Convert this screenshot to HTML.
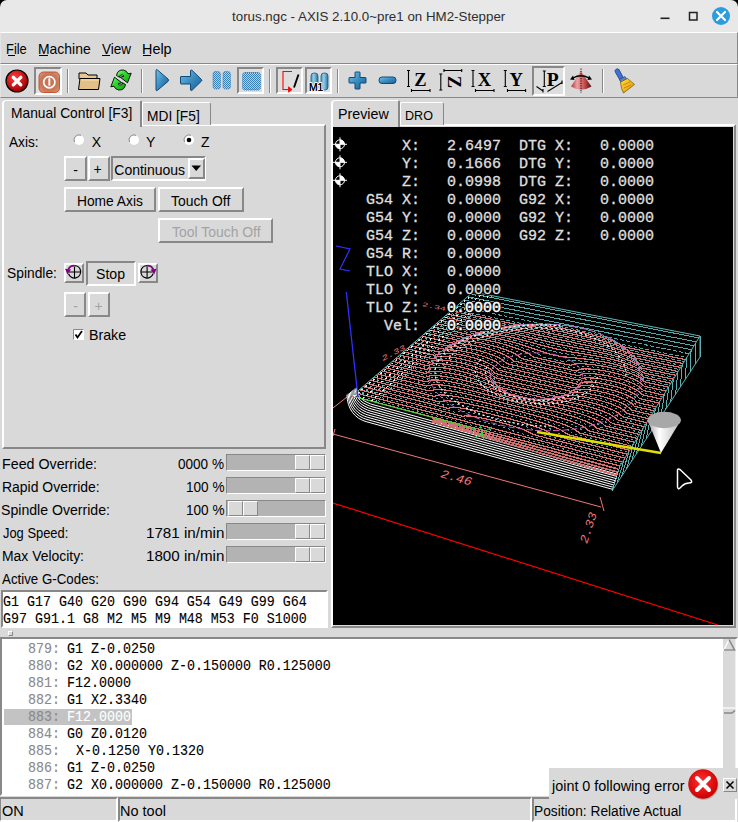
<!DOCTYPE html>
<html><head><meta charset="utf-8"><title>AXIS</title>
<style>html,body{margin:0;padding:0;}body{width:738px;height:822px;position:relative;overflow:hidden;background:#d9d9d9;font-family:'Liberation Sans', sans-serif;}</style>
</head><body>
<div style="position:absolute;left:0px;top:0px;width:738px;height:14px;background:#000"></div>
<div style="position:absolute;left:0px;top:0px;width:738px;height:32px;background:#e8e8e8;border-radius:7px 7px 0 0"></div>
<div style="position:absolute;left:232.20px;top:17.49px;font-family:'Liberation Sans', sans-serif;font-size:13.6px;font-weight:normal;line-height:0;white-space:pre;color:#2e2e2e;transform:scaleX(0.9814);transform-origin:0 0;">torus.ngc - AXIS 2.10.0~pre1 on HM2-Stepper</div>
<svg style="position:absolute;left:655px;top:6px;" width="80" height="22" viewBox="0 0 80 22"><rect x="5.5" y="11.5" width="9" height="1.6" fill="#222"/><rect x="34.5" y="6.5" width="7.5" height="7.5" fill="none" stroke="#222" stroke-width="1.5"/><circle cx="66" cy="10" r="9" fill="#2b9ce0"/><path d="M62 6 L70 14 M70 6 L62 14" stroke="#fff" stroke-width="2.2" stroke-linecap="round"/></svg>
<div style="position:absolute;left:0px;top:32px;width:738px;height:32px;background:#d9d9d9;box-sizing:border-box;border-top:1px solid #fff;border-bottom:1px solid #888888;border-right:1px solid #888888;border-left:1px solid #e4e4e4"></div>
<div style="position:absolute;left:6.37px;top:49.38px;font-family:'Liberation Sans', sans-serif;font-size:13.9px;font-weight:normal;line-height:0;white-space:pre;color:#000;transform:scaleX(0.9286);transform-origin:0 0;">File</div>
<div style="position:absolute;left:38.00px;top:49.38px;font-family:'Liberation Sans', sans-serif;font-size:13.9px;font-weight:normal;line-height:0;white-space:pre;color:#000;transform:scaleX(1.0039);transform-origin:0 0;">Machine</div>
<div style="position:absolute;left:102.00px;top:49.38px;font-family:'Liberation Sans', sans-serif;font-size:13.9px;font-weight:normal;line-height:0;white-space:pre;color:#000;transform:scaleX(0.9733);transform-origin:0 0;">View</div>
<div style="position:absolute;left:141.66px;top:49.38px;font-family:'Liberation Sans', sans-serif;font-size:13.9px;font-weight:normal;line-height:0;white-space:pre;color:#000;transform:scaleX(1.0370);transform-origin:0 0;">Help</div>
<div style="position:absolute;left:7.5px;top:55px;width:7px;height:1px;background:#000"></div>
<div style="position:absolute;left:39px;top:55px;width:9px;height:1px;background:#000"></div>
<div style="position:absolute;left:102px;top:55px;width:8px;height:1px;background:#000"></div>
<div style="position:absolute;left:143px;top:55px;width:8px;height:1px;background:#000"></div>
<div style="position:absolute;left:0px;top:64px;width:738px;height:34px;background:#d9d9d9;box-sizing:border-box;border-top:1px solid #fff;border-bottom:1px solid #888888;border-right:1px solid #888888;border-left:1px solid #e4e4e4"></div>
<svg style="position:absolute;left:5px;top:69px;" width="24" height="24" viewBox="0 0 24 24"><defs><radialGradient id="es" cx="40%" cy="35%" r="65%"><stop offset="0" stop-color="#ff4040"/><stop offset="1" stop-color="#a00000"/></radialGradient></defs><circle cx="12" cy="12" r="11" fill="url(#es)" stroke="#000" stroke-width="1.2"/><path d="M8.3 8.3 L15.8 15.8 M15.8 8.3 L8.3 15.8" stroke="#fff" stroke-width="3.3" stroke-linecap="round"/></svg>
<div style="position:absolute;left:34px;top:67px;width:24px;height:24px;background:#e2e2e2;border-style:solid;border-width:2px;border-color:#888888 #ffffff #ffffff #888888"></div>
<svg style="position:absolute;left:38px;top:71px;" width="22" height="22" viewBox="0 0 22 22"><defs><radialGradient id="pw" cx="50%" cy="50%" r="70%"><stop offset="0" stop-color="#c87050"/><stop offset="0.6" stop-color="#c87858"/><stop offset="1" stop-color="#e0a080"/></radialGradient></defs><rect x="1" y="1" width="20.5" height="20.5" rx="4.5" fill="url(#pw)" stroke="#c84828" stroke-width="0.9"/><circle cx="11.3" cy="11.2" r="5.6" fill="none" stroke="#fff" stroke-width="1.7"/><rect x="10.4" y="7.3" width="1.9" height="7.4" fill="#fff"/></svg>
<div style="position:absolute;left:67px;top:69px;width:1px;height:24px;background:#888888"></div>
<div style="position:absolute;left:68px;top:69px;width:1px;height:24px;background:#fff"></div>
<svg style="position:absolute;left:77px;top:70px;" width="25" height="22" viewBox="0 0 25 22"><path d="M2 3 L9 3 L11 5 L20 5 L20 9 L2 9 Z" fill="#e8c890" stroke="#000" stroke-width="1"/><path d="M1.5 19.5 L3 8.5 L23 8.5 L21.5 19.5 Z" fill="#e4c088" stroke="#000" stroke-width="1"/><path d="M3.5 10 L22 10" stroke="#f8e0b0" stroke-width="1"/></svg>
<svg style="position:absolute;left:0;top:62px" width="738" height="38" viewBox="0 62 738 38"><defs><linearGradient id="gr" x1="0" y1="0" x2="1" y2="1"><stop offset="0" stop-color="#a0f8a0"/><stop offset="0.35" stop-color="#30e030"/><stop offset="1" stop-color="#10a010"/></linearGradient></defs><path d="M116.5 75.5 Q117.5 69.5 123.5 70 Q127 70.8 128 73.8 L131.2 73.2 L127.5 82.8 L120.2 77.2 L124 76.2 Q122.8 74.2 120.3 75.2 Q119.2 75.8 119.6 77.3 Z" fill="url(#gr)" stroke="#000" stroke-width="0.9" stroke-linejoin="round"/><path d="M125.5 84.5 Q124.5 90.5 118.5 90 Q115 89.2 114 86.2 L110.8 86.8 L114.5 77.2 L121.8 82.8 L118 83.8 Q119.2 85.8 121.7 84.8 Q122.8 84.2 122.4 82.7 Z" fill="url(#gr)" stroke="#000" stroke-width="0.9" stroke-linejoin="round"/></svg>
<div style="position:absolute;left:141px;top:69px;width:1px;height:24px;background:#888888"></div>
<div style="position:absolute;left:142px;top:69px;width:1px;height:24px;background:#fff"></div>
<div style="position:absolute;left:237px;top:67px;width:23px;height:23px;background:#dedede;border-style:solid;border-width:2px;border-color:#888888 #ffffff #ffffff #888888"></div>
<svg style="position:absolute;left:0;top:62px" width="738" height="38" viewBox="0 62 738 38"><defs><linearGradient id="bl" x1="0" y1="0" x2="1" y2="1"><stop offset="0" stop-color="#78c0e8"/><stop offset="0.5" stop-color="#3a8cc0"/><stop offset="1" stop-color="#1a5a90"/></linearGradient><pattern id="dt" x="0" y="0" width="2" height="2" patternUnits="userSpaceOnUse"><rect width="2" height="2" fill="#b0d0e8"/><rect width="1" height="1" fill="#3a80b8"/><rect x="1" y="1" width="1" height="1" fill="#3a80b8"/></pattern></defs><path d="M156 70.5 Q156 69 157.5 70 L168 79 Q169.2 80.2 168 81.4 L157.5 90.3 Q156 91.3 156 89.8 Z" fill="url(#bl)" stroke="#0e4a78" stroke-width="1"/><path d="M181 76.5 L190.5 76.5 L190.5 70.5 Q191 69.5 192 70.3 L201.5 79.5 Q202.3 80.3 201.5 81.1 L192 90.3 Q191 91 190.5 90 L190.5 84 L181 84 Q180.5 84 180.5 83.5 L180.5 77 Q180.5 76.5 181 76.5 Z" fill="url(#bl)" stroke="#0e4a78" stroke-width="1"/><rect x="213" y="71.5" width="7.5" height="17.5" rx="2.5" fill="url(#dt)" stroke="#3a80b8" stroke-width="1" stroke-dasharray="1 1"/><rect x="223" y="71.5" width="7.5" height="17.5" rx="2.5" fill="url(#dt)" stroke="#3a80b8" stroke-width="1" stroke-dasharray="1 1"/><rect x="242.5" y="72.5" width="18" height="17.5" rx="2.5" fill="url(#dt)" stroke="#3a80b8" stroke-width="1" stroke-dasharray="1 1"/></svg>
<div style="position:absolute;left:269px;top:69px;width:1px;height:24px;background:#888888"></div>
<div style="position:absolute;left:270px;top:69px;width:1px;height:24px;background:#fff"></div>
<div style="position:absolute;left:276px;top:67px;width:23px;height:23px;background:#dedede;border-style:solid;border-width:2px;border-color:#888888 #ffffff #ffffff #888888"></div>
<div style="position:absolute;left:305px;top:67px;width:23px;height:23px;background:#dedede;border-style:solid;border-width:2px;border-color:#888888 #ffffff #ffffff #888888"></div>
<svg style="position:absolute;left:0;top:62px" width="738" height="38" viewBox="0 62 738 38"><defs><linearGradient id="bl2" x1="0" y1="0" x2="1" y2="0"><stop offset="0" stop-color="#4a98c8"/><stop offset="0.4" stop-color="#90d0e8"/><stop offset="1" stop-color="#2a70a0"/></linearGradient></defs><path d="M292 71.5 L283 71.5 L283 89.5 L290.5 89.5" fill="none" stroke="#ff0000" stroke-width="1.1"/><path d="M288.5 86.8 L292 89.5 L288.5 92.2 Z" fill="#ff0000" stroke="#ff0000" stroke-width="0.8"/><path d="M294 87.5 L298.5 74.5" stroke="#000" stroke-width="1.9"/><rect x="311" y="73" width="7" height="17" rx="3" fill="url(#bl2)" stroke="#1a5a88" stroke-width="0.8"/><rect x="321" y="73" width="7" height="17" rx="3" fill="url(#bl2)" stroke="#1a5a88" stroke-width="0.8"/><text x="309" y="90.5" font-family="Liberation Sans, sans-serif" font-size="10.3" fill="#000" stroke="#fff" stroke-width="2" paint-order="stroke" stroke-linejoin="round">M1</text><text x="309" y="90.5" font-family="Liberation Sans, sans-serif" font-size="10.3" fill="#000">M1</text><path d="M355 72.5 Q355 72 355.5 72 L359.5 72 Q360 72 360 72.5 L360 77.5 L365.5 77.5 Q366 77.5 366 78 L366 82.5 Q366 83 365.5 83 L360 83 L360 88.5 Q360 89 359.5 89 L355.5 89 Q355 89 355 88.5 L355 83 L349.5 83 Q349 83 349 82.5 L349 78 Q349 77.5 349.5 77.5 L355 77.5 Z" fill="url(#bl)" stroke="#0e4a78" stroke-width="1"/><rect x="379" y="77" width="17" height="6.5" rx="3" fill="url(#bl)" stroke="#0e4a78" stroke-width="1"/></svg>
<div style="position:absolute;left:337px;top:69px;width:1px;height:24px;background:#888888"></div>
<div style="position:absolute;left:338px;top:69px;width:1px;height:24px;background:#fff"></div>
<svg style="position:absolute;left:0;top:62px" width="738" height="38" viewBox="0 62 738 38"><path d="M408.5 70.5 L408.5 86.5 M407.0 70.5 L410.0 70.5 M407.0 86.5 L410.0 86.5" stroke="#000" stroke-width="1.1" fill="none"/><path d="M411.5 90.5 L430 90.5 M411.5 89.0 L411.5 92.0 M430 89.0 L430 92.0" stroke="#000" stroke-width="1.1" fill="none"/><text x="420.4" y="85.8" font-family="Liberation Serif, serif" font-weight="bold" font-size="18.5" text-anchor="middle" fill="#000">Z</text><path d="M440.8 74 L440.8 90 M439.3 74 L442.3 74 M439.3 90 L442.3 90" stroke="#000" stroke-width="1.1" fill="none"/><path d="M444 70.5 L461.7 70.5 M444 69.0 L444 72.0 M461.7 69.0 L461.7 72.0" stroke="#000" stroke-width="1.1" fill="none"/><text x="452.6" y="86.5" font-family="Liberation Serif, serif" font-weight="bold" font-size="18.5" text-anchor="middle" fill="#000" transform="rotate(90 452.6 81.9)">Z</text><path d="M473 70.5 L473 86.5 M471.5 70.5 L474.5 70.5 M471.5 86.5 L474.5 86.5" stroke="#000" stroke-width="1.1" fill="none"/><path d="M475.5 90.5 L494 90.5 M475.5 89.0 L475.5 92.0 M494 89.0 L494 92.0" stroke="#000" stroke-width="1.1" fill="none"/><text x="484.4" y="85.8" font-family="Liberation Serif, serif" font-weight="bold" font-size="18.5" text-anchor="middle" fill="#000">X</text><path d="M505.3 70.5 L505.3 86.5 M503.8 70.5 L506.8 70.5 M503.8 86.5 L506.8 86.5" stroke="#000" stroke-width="1.1" fill="none"/><path d="M507.5 90.5 L525.6 90.5 M507.5 89.0 L507.5 92.0 M525.6 89.0 L525.6 92.0" stroke="#000" stroke-width="1.1" fill="none"/><text x="516.1" y="85.8" font-family="Liberation Serif, serif" font-weight="bold" font-size="18.5" text-anchor="middle" fill="#000">Y</text></svg>
<div style="position:absolute;left:532px;top:66px;width:29px;height:26px;background:#dedede;border-style:solid;border-width:2px;border-color:#888888 #ffffff #ffffff #888888"></div>
<svg style="position:absolute;left:0;top:62px" width="738" height="38" viewBox="0 62 738 38"><path d="M544.3 71 L544.3 86.5 M542.8 71 L545.8 71 M542.8 86.5 L545.8 86.5" stroke="#000" stroke-width="1.1" fill="none"/><text x="552.8" y="86.4" font-family="Liberation Serif, serif" font-weight="bold" font-size="19.5" text-anchor="middle" fill="#000">P</text><path d="M536.5 86.5 L543 91 M543 89 L543 92.5" stroke="#000" stroke-width="1.1" fill="none"/><path d="M547.5 91.5 L562 82.5 M562 80.5 L562 84" stroke="#000" stroke-width="1.1" fill="none"/><defs><linearGradient id="cn" x1="0" y1="0" x2="1" y2="0"><stop offset="0" stop-color="#b03838"/><stop offset="0.3" stop-color="#f0a0a0"/><stop offset="0.65" stop-color="#c85050"/><stop offset="1" stop-color="#501010"/></linearGradient></defs><path d="M580.8 71 L571 86.5 Q581 93 591.5 86.5 Z" fill="url(#cn)"/><path d="M581 68.5 L581 93" stroke="#000" stroke-width="1" stroke-dasharray="1.2 1.2"/><path d="M573 78 Q581 73.5 589 78" fill="none" stroke="#000" stroke-width="1.4"/><path d="M570 79.5 L574.5 80 L573 75.5 Z M592 79.5 L587.5 80 L589 75.5 Z" fill="#000"/><defs><linearGradient id="br" x1="0" y1="0" x2="1" y2="1"><stop offset="0" stop-color="#ffe040"/><stop offset="1" stop-color="#e09000"/></linearGradient></defs><path d="M615 70.5 Q616.5 67.5 619 69.5 L624 79 L620.5 81 L615.5 72.5 Z" fill="#4070d0" stroke="#203880" stroke-width="0.8"/><path d="M619.5 79.5 L625 76.5 L627 79.5 L621 82.5 Z" fill="#6080c0" stroke="#203880" stroke-width="0.6"/><path d="M620.5 82 L627.5 78.5 L634.5 84.5 L623.5 93 Q621 89 620.5 82 Z" fill="url(#br)" stroke="#705000" stroke-width="0.7"/><path d="M623 85 L630 82 M624 88 L631 85" stroke="#c07000" stroke-width="0.7"/></svg>
<div style="position:absolute;left:602px;top:69px;width:1px;height:24px;background:#888888"></div>
<div style="position:absolute;left:603px;top:69px;width:1px;height:24px;background:#fff"></div>
<div style="position:absolute;left:2px;top:124px;width:320px;height:321px;background:#d9d9d9;border-style:solid;border-width:2px 2px 2px 2px;border-color:#fff #888888 #888888 #fff"></div>
<div style="position:absolute;left:142px;top:102px;width:67px;height:22px;background:#d9d9d9;border-style:solid;border-width:1px 1px 0 1px;border-color:#fff #888888 #888888 #fff;border-radius:2px 3px 0 0"></div>
<div style="position:absolute;left:146.81px;top:115.98px;font-family:'Liberation Sans', sans-serif;font-size:13.9px;font-weight:normal;line-height:0;white-space:pre;color:#000;transform:scaleX(0.9904);transform-origin:0 0;">MDI [F5]</div>
<div style="position:absolute;left:2px;top:100px;width:136px;height:26px;background:#d9d9d9;border-style:solid;border-width:1px 2px 0 2px;border-color:#fff #888888 #888888 #fff;border-radius:4px 2px 0 0"></div>
<div style="position:absolute;left:10.51px;top:113.38px;font-family:'Liberation Sans', sans-serif;font-size:13.9px;font-weight:normal;line-height:0;white-space:pre;color:#000;transform:scaleX(0.9942);transform-origin:0 0;">Manual Control [F3]</div>
<div style="position:absolute;left:8.90px;top:141.95px;font-family:'Liberation Sans', sans-serif;font-size:14.0px;font-weight:normal;line-height:0;white-space:pre;color:#000;transform:scaleX(0.9759);transform-origin:0 0;">Axis:</div>
<svg style="position:absolute;left:73px;top:134px;" width="12" height="12" viewBox="0 0 12 12"><circle cx="6" cy="6" r="5" fill="#fff" stroke="none"/><path d="M1.5 8 A5 5 0 0 1 8 1.3" fill="none" stroke="#888888" stroke-width="1"/></svg>
<div style="position:absolute;left:91.80px;top:141.95px;font-family:'Liberation Sans', sans-serif;font-size:14px;font-weight:normal;line-height:0;white-space:pre;color:#000;">X</div>
<svg style="position:absolute;left:127.5px;top:134px;" width="12" height="12" viewBox="0 0 12 12"><circle cx="6" cy="6" r="5" fill="#fff" stroke="none"/><path d="M1.5 8 A5 5 0 0 1 8 1.3" fill="none" stroke="#888888" stroke-width="1"/></svg>
<div style="position:absolute;left:146.00px;top:141.95px;font-family:'Liberation Sans', sans-serif;font-size:14px;font-weight:normal;line-height:0;white-space:pre;color:#000;">Y</div>
<svg style="position:absolute;left:182.5px;top:134px;" width="12" height="12" viewBox="0 0 12 12"><circle cx="6" cy="6" r="5" fill="#fff" stroke="none"/><path d="M1.5 8 A5 5 0 0 1 8 1.3" fill="none" stroke="#888888" stroke-width="1"/><circle cx="6" cy="6" r="2.3" fill="#000"/></svg>
<div style="position:absolute;left:201.00px;top:141.95px;font-family:'Liberation Sans', sans-serif;font-size:14px;font-weight:normal;line-height:0;white-space:pre;color:#000;">Z</div>
<div style="position:absolute;left:64px;top:156px;width:19px;height:21px;background:#d9d9d9;border-style:solid;border-width:2px;border-color:#ffffff #888888 #888888 #ffffff"></div>
<div style="position:absolute;left:73.20px;top:169.85px;font-family:'Liberation Sans', sans-serif;font-size:14.0px;font-weight:normal;line-height:0;white-space:pre;color:#000;">-</div>
<div style="position:absolute;left:88px;top:156px;width:18px;height:21px;background:#d9d9d9;border-style:solid;border-width:2px;border-color:#ffffff #888888 #888888 #ffffff"></div>
<div style="position:absolute;left:93.60px;top:169.35px;font-family:'Liberation Sans', sans-serif;font-size:14.0px;font-weight:normal;line-height:0;white-space:pre;color:#000;">+</div>
<div style="position:absolute;left:111px;top:156px;width:91px;height:21px;background:#d9d9d9;border-style:solid;border-width:2px;border-color:#888888 #ffffff #ffffff #888888"></div>
<div style="position:absolute;left:114.30px;top:169.95px;font-family:'Liberation Sans', sans-serif;font-size:14.0px;font-weight:normal;line-height:0;white-space:pre;color:#000;">Continuous</div>
<div style="position:absolute;left:188px;top:158px;width:13px;height:17px;background:#d9d9d9;border-style:solid;border-width:2px;border-color:#ffffff #888888 #888888 #ffffff"></div>
<svg style="position:absolute;left:191px;top:165px;" width="11" height="7" viewBox="0 0 11 7"><path d="M0.5 0.5 L10 0.5 L5.2 6 Z" fill="#000"/></svg>
<div style="position:absolute;left:64px;top:187px;width:88px;height:21px;background:#d9d9d9;border-style:solid;border-width:2px;border-color:#ffffff #888888 #888888 #ffffff"></div>
<div style="position:absolute;left:76.92px;top:200.85px;font-family:'Liberation Sans', sans-serif;font-size:14.0px;font-weight:normal;line-height:0;white-space:pre;color:#000;transform:scaleX(0.9848);transform-origin:0 0;">Home Axis</div>
<div style="position:absolute;left:158px;top:187px;width:82px;height:21px;background:#d9d9d9;border-style:solid;border-width:2px;border-color:#ffffff #888888 #888888 #ffffff"></div>
<div style="position:absolute;left:171.10px;top:200.75px;font-family:'Liberation Sans', sans-serif;font-size:14px;font-weight:normal;line-height:0;white-space:pre;color:#000;transform:scaleX(0.9933);transform-origin:0 0;">Touch Off</div>
<div style="position:absolute;left:158px;top:218px;width:111px;height:21px;background:#d9d9d9;border-style:solid;border-width:2px;border-color:#ffffff #888888 #888888 #ffffff"></div>
<div style="position:absolute;left:171.50px;top:231.95px;font-family:'Liberation Sans', sans-serif;font-size:14px;font-weight:normal;line-height:0;white-space:pre;color:#a3a3a3;transform:scaleX(0.9955);transform-origin:0 0;">Tool Touch Off</div>
<div style="position:absolute;left:7.42px;top:273.11px;font-family:'Liberation Sans', sans-serif;font-size:14.1px;font-weight:normal;line-height:0;white-space:pre;color:#000;transform:scaleX(0.9796);transform-origin:0 0;">Spindle:</div>
<div style="position:absolute;left:64px;top:263px;width:16px;height:16px;background:#d9d9d9;border-style:solid;border-width:2px;border-color:#ffffff #888888 #888888 #ffffff"></div>
<div style="position:absolute;left:86px;top:261px;width:46px;height:21px;background:#d9d9d9;border-style:solid;border-width:2px;border-color:#888888 #ffffff #ffffff #888888"></div>
<div style="position:absolute;left:96.19px;top:274.35px;font-family:'Liberation Sans', sans-serif;font-size:14.0px;font-weight:normal;line-height:0;white-space:pre;color:#000;transform:scaleX(1.0074);transform-origin:0 0;">Stop</div>
<div style="position:absolute;left:138px;top:263px;width:16px;height:16px;background:#d9d9d9;border-style:solid;border-width:2px;border-color:#ffffff #888888 #888888 #ffffff"></div>
<svg style="position:absolute;left:0;top:250px" width="200" height="40" viewBox="0 250 200 40"><path d="M74.5 265.6 A6.2 6.2 0 1 1 68.6 273.8" fill="none" stroke="#000" stroke-width="1.3"/><path d="M74.5 266.5 L74.5 278 M69 272 L80 272" stroke="#000" stroke-width="1.1"/><path d="M74.5 265.6 Q70 265.5 68.2 269.5" fill="none" stroke="#800080" stroke-width="1.8"/><path d="M65 268.8 L71 269.5 L67.5 274.5 Z" fill="#800080"/><path d="M147.1 265.6 A6.2 6.2 0 1 0 153 273.8" fill="none" stroke="#000" stroke-width="1.3"/><path d="M147.1 266.5 L147.1 278 M141.6 272 L152.6 272" stroke="#000" stroke-width="1.1"/><path d="M147.1 265.6 Q151.6 265.5 153.4 269.5" fill="none" stroke="#800080" stroke-width="1.8"/><path d="M156.6 268.8 L150.6 269.5 L154.1 274.5 Z" fill="#800080"/></svg>
<div style="position:absolute;left:64px;top:292px;width:18px;height:21px;background:#d9d9d9;border-style:solid;border-width:2px;border-color:#ffffff #888888 #888888 #ffffff"></div>
<div style="position:absolute;left:73.30px;top:306.35px;font-family:'Liberation Sans', sans-serif;font-size:14.0px;font-weight:normal;line-height:0;white-space:pre;color:#a3a3a3;">-</div>
<div style="position:absolute;left:88px;top:292px;width:18px;height:21px;background:#d9d9d9;border-style:solid;border-width:2px;border-color:#ffffff #888888 #888888 #ffffff"></div>
<div style="position:absolute;left:94.60px;top:306.35px;font-family:'Liberation Sans', sans-serif;font-size:14.0px;font-weight:normal;line-height:0;white-space:pre;color:#a3a3a3;">+</div>
<svg style="position:absolute;left:73px;top:329px;" width="11" height="11" viewBox="0 0 11 11"><rect x="0" y="0" width="11" height="11" fill="#fff"/><path d="M0.5 10.5 L0.5 0.5 L10.5 0.5" fill="none" stroke="#888888" stroke-width="1"/><path d="M2.5 5.5 L4.5 8.5 L9 2" fill="none" stroke="#000" stroke-width="1.8"/></svg>
<div style="position:absolute;left:88.79px;top:335.31px;font-family:'Liberation Sans', sans-serif;font-size:14.1px;font-weight:normal;line-height:0;white-space:pre;color:#000;transform:scaleX(1.0086);transform-origin:0 0;">Brake</div>
<div style="position:absolute;left:1.78px;top:464.25px;font-family:'Liberation Sans', sans-serif;font-size:14px;font-weight:normal;line-height:0;white-space:pre;color:#000;transform:scaleX(1.0176);transform-origin:0 0;">Feed Override:</div>
<div style="position:absolute;left:178.40px;top:464.25px;font-family:'Liberation Sans', sans-serif;font-size:14px;font-weight:normal;line-height:0;white-space:pre;color:#000;transform:scaleX(0.9681);transform-origin:0 0;">0000 %</div>
<div style="position:absolute;left:226px;top:454px;width:98px;height:15px;background:#b3b3b3;border-style:solid;border-width:1px;border-color:#888888 #ffffff #ffffff #888888"></div>
<div style="position:absolute;left:295px;top:455px;width:13px;height:13px;background:#d9d9d9;border-style:solid;border-width:1px;border-color:#ffffff #888888 #888888 #ffffff"></div>
<div style="position:absolute;left:310px;top:455px;width:13px;height:13px;background:#d9d9d9;border-style:solid;border-width:1px;border-color:#ffffff #888888 #888888 #ffffff"></div>
<div style="position:absolute;left:1.80px;top:487.15px;font-family:'Liberation Sans', sans-serif;font-size:14px;font-weight:normal;line-height:0;white-space:pre;color:#000;transform:scaleX(0.9969);transform-origin:0 0;">Rapid Override:</div>
<div style="position:absolute;left:186.03px;top:487.15px;font-family:'Liberation Sans', sans-serif;font-size:14px;font-weight:normal;line-height:0;white-space:pre;color:#000;transform:scaleX(0.9711);transform-origin:0 0;">100 %</div>
<div style="position:absolute;left:226px;top:477px;width:98px;height:15px;background:#b3b3b3;border-style:solid;border-width:1px;border-color:#888888 #ffffff #ffffff #888888"></div>
<div style="position:absolute;left:295px;top:478px;width:13px;height:13px;background:#d9d9d9;border-style:solid;border-width:1px;border-color:#ffffff #888888 #888888 #ffffff"></div>
<div style="position:absolute;left:310px;top:478px;width:13px;height:13px;background:#d9d9d9;border-style:solid;border-width:1px;border-color:#ffffff #888888 #888888 #ffffff"></div>
<div style="position:absolute;left:1.29px;top:509.95px;font-family:'Liberation Sans', sans-serif;font-size:14px;font-weight:normal;line-height:0;white-space:pre;color:#000;transform:scaleX(1.0075);transform-origin:0 0;">Spindle Override:</div>
<div style="position:absolute;left:186.03px;top:509.95px;font-family:'Liberation Sans', sans-serif;font-size:14px;font-weight:normal;line-height:0;white-space:pre;color:#000;transform:scaleX(0.9711);transform-origin:0 0;">100 %</div>
<div style="position:absolute;left:226px;top:500px;width:98px;height:15px;background:#b3b3b3;border-style:solid;border-width:1px;border-color:#888888 #ffffff #ffffff #888888"></div>
<div style="position:absolute;left:228px;top:501px;width:13px;height:13px;background:#d9d9d9;border-style:solid;border-width:1px;border-color:#ffffff #888888 #888888 #ffffff"></div>
<div style="position:absolute;left:243px;top:501px;width:13px;height:13px;background:#d9d9d9;border-style:solid;border-width:1px;border-color:#ffffff #888888 #888888 #ffffff"></div>
<div style="position:absolute;left:2.50px;top:533.15px;font-family:'Liberation Sans', sans-serif;font-size:14px;font-weight:normal;line-height:0;white-space:pre;color:#000;transform:scaleX(0.9214);transform-origin:0 0;">Jog Speed:</div>
<div style="position:absolute;left:145.92px;top:533.15px;font-family:'Liberation Sans', sans-serif;font-size:14px;font-weight:normal;line-height:0;white-space:pre;color:#000;transform:scaleX(1.0831);transform-origin:0 0;">1781 in/min</div>
<div style="position:absolute;left:226px;top:523px;width:98px;height:15px;background:#b3b3b3;border-style:solid;border-width:1px;border-color:#888888 #ffffff #ffffff #888888"></div>
<div style="position:absolute;left:295px;top:524px;width:13px;height:13px;background:#d9d9d9;border-style:solid;border-width:1px;border-color:#ffffff #888888 #888888 #ffffff"></div>
<div style="position:absolute;left:310px;top:524px;width:13px;height:13px;background:#d9d9d9;border-style:solid;border-width:1px;border-color:#ffffff #888888 #888888 #ffffff"></div>
<div style="position:absolute;left:2.11px;top:556.15px;font-family:'Liberation Sans', sans-serif;font-size:14px;font-weight:normal;line-height:0;white-space:pre;color:#000;transform:scaleX(0.9938);transform-origin:0 0;">Max Velocity:</div>
<div style="position:absolute;left:145.92px;top:556.15px;font-family:'Liberation Sans', sans-serif;font-size:14px;font-weight:normal;line-height:0;white-space:pre;color:#000;transform:scaleX(1.0831);transform-origin:0 0;">1800 in/min</div>
<div style="position:absolute;left:226px;top:546px;width:98px;height:15px;background:#b3b3b3;border-style:solid;border-width:1px;border-color:#888888 #ffffff #ffffff #888888"></div>
<div style="position:absolute;left:295px;top:547px;width:13px;height:13px;background:#d9d9d9;border-style:solid;border-width:1px;border-color:#ffffff #888888 #888888 #ffffff"></div>
<div style="position:absolute;left:310px;top:547px;width:13px;height:13px;background:#d9d9d9;border-style:solid;border-width:1px;border-color:#ffffff #888888 #888888 #ffffff"></div>
<div style="position:absolute;left:2.40px;top:579.25px;font-family:'Liberation Sans', sans-serif;font-size:14px;font-weight:normal;line-height:0;white-space:pre;color:#000;transform:scaleX(0.9505);transform-origin:0 0;">Active G-Codes:</div>
<div style="position:absolute;left:1px;top:590px;width:323px;height:34px;background:#fff;border-style:solid;border-width:2px;border-color:#888888 #ffffff #ffffff #888888"></div>
<div style="position:absolute;left:3.36px;top:602.02px;font-family:'Liberation Mono', monospace;font-size:14.2px;font-weight:normal;line-height:0;white-space:pre;color:#000;transform:scaleX(0.9390);transform-origin:0 0;-webkit-text-stroke:0.12px #000;">G1 G17 G40 G20 G90 G94 G54 G49 G99 G64</div>
<div style="position:absolute;left:3.36px;top:618.62px;font-family:'Liberation Mono', monospace;font-size:14.2px;font-weight:normal;line-height:0;white-space:pre;color:#000;transform:scaleX(0.9390);transform-origin:0 0;-webkit-text-stroke:0.12px #000;">G97 G91.1 G8 M2 M5 M9 M48 M53 F0 S1000</div>
<div style="position:absolute;left:8px;top:631px;width:5px;height:5px;border:1px solid #888888;border-top-color:#fff;border-left-color:#fff;box-sizing:border-box"></div>
<div style="position:absolute;left:0px;top:637px;width:734px;height:155px;background:#fff;border-style:solid;border-width:2px;border-color:#888888 #ffffff #ffffff #888888"></div>
<div style="position:absolute;left:27.56px;top:649.02px;font-family:'Liberation Mono', monospace;font-size:14.2px;font-weight:normal;line-height:0;white-space:pre;color:#8a8a8a;transform:scaleX(0.9390);transform-origin:0 0;-webkit-text-stroke:0.12px #8a8a8a;">879:</div>
<div style="position:absolute;left:67.36px;top:649.02px;font-family:'Liberation Mono', monospace;font-size:14.2px;font-weight:normal;line-height:0;white-space:pre;color:#000;transform:scaleX(0.9390);transform-origin:0 0;-webkit-text-stroke:0.12px #000;">G1 Z-0.0250</div>
<div style="position:absolute;left:27.56px;top:666.07px;font-family:'Liberation Mono', monospace;font-size:14.2px;font-weight:normal;line-height:0;white-space:pre;color:#8a8a8a;transform:scaleX(0.9390);transform-origin:0 0;-webkit-text-stroke:0.12px #8a8a8a;">880:</div>
<div style="position:absolute;left:67.36px;top:666.07px;font-family:'Liberation Mono', monospace;font-size:14.2px;font-weight:normal;line-height:0;white-space:pre;color:#000;transform:scaleX(0.9390);transform-origin:0 0;-webkit-text-stroke:0.12px #000;">G2 X0.000000 Z-0.150000 R0.125000</div>
<div style="position:absolute;left:27.56px;top:683.12px;font-family:'Liberation Mono', monospace;font-size:14.2px;font-weight:normal;line-height:0;white-space:pre;color:#8a8a8a;transform:scaleX(0.9390);transform-origin:0 0;-webkit-text-stroke:0.12px #8a8a8a;">881:</div>
<div style="position:absolute;left:67.36px;top:683.12px;font-family:'Liberation Mono', monospace;font-size:14.2px;font-weight:normal;line-height:0;white-space:pre;color:#000;transform:scaleX(0.9390);transform-origin:0 0;-webkit-text-stroke:0.12px #000;">F12.0000</div>
<div style="position:absolute;left:27.56px;top:700.17px;font-family:'Liberation Mono', monospace;font-size:14.2px;font-weight:normal;line-height:0;white-space:pre;color:#8a8a8a;transform:scaleX(0.9390);transform-origin:0 0;-webkit-text-stroke:0.12px #8a8a8a;">882:</div>
<div style="position:absolute;left:67.36px;top:700.17px;font-family:'Liberation Mono', monospace;font-size:14.2px;font-weight:normal;line-height:0;white-space:pre;color:#000;transform:scaleX(0.9390);transform-origin:0 0;-webkit-text-stroke:0.12px #000;">G1 X2.3340</div>
<div style="position:absolute;left:4px;top:708.5px;width:128px;height:16px;background:#c3c3c3"></div>
<div style="position:absolute;left:27.56px;top:717.22px;font-family:'Liberation Mono', monospace;font-size:14.2px;font-weight:normal;line-height:0;white-space:pre;color:#8a8a8a;transform:scaleX(0.9390);transform-origin:0 0;-webkit-text-stroke:0.12px #8a8a8a;">883:</div>
<div style="position:absolute;left:67.36px;top:717.22px;font-family:'Liberation Mono', monospace;font-size:14.2px;font-weight:normal;line-height:0;white-space:pre;color:#ffffff;transform:scaleX(0.9390);transform-origin:0 0;-webkit-text-stroke:0.12px #ffffff;">F12.0000</div>
<div style="position:absolute;left:27.56px;top:734.27px;font-family:'Liberation Mono', monospace;font-size:14.2px;font-weight:normal;line-height:0;white-space:pre;color:#8a8a8a;transform:scaleX(0.9390);transform-origin:0 0;-webkit-text-stroke:0.12px #8a8a8a;">884:</div>
<div style="position:absolute;left:67.36px;top:734.27px;font-family:'Liberation Mono', monospace;font-size:14.2px;font-weight:normal;line-height:0;white-space:pre;color:#000;transform:scaleX(0.9390);transform-origin:0 0;-webkit-text-stroke:0.12px #000;">G0 Z0.0120</div>
<div style="position:absolute;left:27.56px;top:751.32px;font-family:'Liberation Mono', monospace;font-size:14.2px;font-weight:normal;line-height:0;white-space:pre;color:#8a8a8a;transform:scaleX(0.9390);transform-origin:0 0;-webkit-text-stroke:0.12px #8a8a8a;">885:</div>
<div style="position:absolute;left:76.30px;top:751.32px;font-family:'Liberation Mono', monospace;font-size:14.2px;font-weight:normal;line-height:0;white-space:pre;color:#000;transform:scaleX(0.9390);transform-origin:0 0;-webkit-text-stroke:0.12px #000;">X-0.1250 Y0.1320</div>
<div style="position:absolute;left:27.56px;top:768.37px;font-family:'Liberation Mono', monospace;font-size:14.2px;font-weight:normal;line-height:0;white-space:pre;color:#8a8a8a;transform:scaleX(0.9390);transform-origin:0 0;-webkit-text-stroke:0.12px #8a8a8a;">886:</div>
<div style="position:absolute;left:67.36px;top:768.37px;font-family:'Liberation Mono', monospace;font-size:14.2px;font-weight:normal;line-height:0;white-space:pre;color:#000;transform:scaleX(0.9390);transform-origin:0 0;-webkit-text-stroke:0.12px #000;">G1 Z-0.0250</div>
<div style="position:absolute;left:27.56px;top:785.42px;font-family:'Liberation Mono', monospace;font-size:14.2px;font-weight:normal;line-height:0;white-space:pre;color:#8a8a8a;transform:scaleX(0.9390);transform-origin:0 0;-webkit-text-stroke:0.12px #8a8a8a;">887:</div>
<div style="position:absolute;left:67.36px;top:785.42px;font-family:'Liberation Mono', monospace;font-size:14.2px;font-weight:normal;line-height:0;white-space:pre;color:#000;transform:scaleX(0.9390);transform-origin:0 0;-webkit-text-stroke:0.12px #000;">G2 X0.000000 Z-0.150000 R0.125000</div>
<div style="position:absolute;left:723px;top:639px;width:12px;height:156px;background:#d9d9d9"></div>
<div style="position:absolute;left:735px;top:639px;width:1px;height:156px;background:#f0f0f0"></div>
<svg style="position:absolute;left:720px;top:636px" width="18" height="90" viewBox="720 636 18 90"><path d="M729 639.5 L723.8 650 L734.5 650" fill="none" stroke="#fff" stroke-width="1.3"/><path d="M729 639.5 L734.5 650 L724 650" fill="none" stroke="#888888" stroke-width="1.6"/><path d="M723 708 L735 708" stroke="#fff" stroke-width="1.2"/><path d="M724 713 L732 713 L735 710.5" fill="none" stroke="#888888" stroke-width="1.6"/></svg>
<div style="position:absolute;left:0px;top:796px;width:738px;height:26px;background:#d9d9d9"></div>
<div style="position:absolute;left:-1px;top:797px;width:115px;height:21px;background:#d9d9d9;border-style:solid;border-width:2px;border-color:#888888 #ffffff #ffffff #888888"></div>
<div style="position:absolute;left:2.26px;top:811.15px;font-family:'Liberation Sans', sans-serif;font-size:14px;font-weight:normal;line-height:0;white-space:pre;color:#000;transform:scaleX(1.0368);transform-origin:0 0;">ON</div>
<div style="position:absolute;left:118px;top:797px;width:410px;height:21px;background:#d9d9d9;border-style:solid;border-width:2px;border-color:#888888 #ffffff #ffffff #888888"></div>
<div style="position:absolute;left:120.37px;top:811.15px;font-family:'Liberation Sans', sans-serif;font-size:14px;font-weight:normal;line-height:0;white-space:pre;color:#000;transform:scaleX(1.0349);transform-origin:0 0;">No tool</div>
<div style="position:absolute;left:532px;top:797px;width:201px;height:21px;background:#d9d9d9;border-style:solid;border-width:2px;border-color:#888888 #ffffff #ffffff #888888"></div>
<div style="position:absolute;left:534.42px;top:810.85px;font-family:'Liberation Sans', sans-serif;font-size:14px;font-weight:normal;line-height:0;white-space:pre;color:#000;transform:scaleX(0.9811);transform-origin:0 0;">Position: Relative Actual</div>
<div style="position:absolute;left:549px;top:768px;width:189px;height:31px;background:#d9d9d9"></div>
<div style="position:absolute;left:551.73px;top:786.05px;font-family:'Liberation Sans', sans-serif;font-size:14px;font-weight:normal;line-height:0;white-space:pre;color:#000;transform:scaleX(1.0269);transform-origin:0 0;">joint 0 following error</div>
<svg style="position:absolute;left:686px;top:767px;" width="35" height="35" viewBox="0 0 35 35"><defs><radialGradient id="er" cx="45%" cy="40%" r="60%"><stop offset="0" stop-color="#ff3030"/><stop offset="1" stop-color="#d00000"/></radialGradient></defs><circle cx="17.5" cy="18" r="15" fill="#888" opacity="0.5"/><circle cx="17" cy="17" r="14.5" fill="url(#er)" stroke="#c00" stroke-width="0.5"/><path d="M11 11 L23 23 M23 11 L11 23" stroke="#fff" stroke-width="4" stroke-linecap="round"/></svg>
<div style="position:absolute;left:723px;top:778px;width:12px;height:12px;background:#d9d9d9;border-style:solid;border-width:1px;border-color:#ffffff #888888 #888888 #ffffff"></div>
<svg style="position:absolute;left:723px;top:778px;" width="14" height="14" viewBox="0 0 14 14"><path d="M3.5 3.5 L10.5 10.5 M10.5 3.5 L3.5 10.5" stroke="#000" stroke-width="1.5"/></svg>
<div style="position:absolute;left:331px;top:124px;width:401px;height:500px;background:#d9d9d9;border-style:solid;border-width:2px 2px 2px 2px;border-color:#fff #888888 #888888 #fff"></div>
<div style="position:absolute;left:400px;top:102px;width:42px;height:22px;background:#d9d9d9;border-style:solid;border-width:1px 1px 0 1px;border-color:#fff #888888 #888888 #fff;border-radius:2px 3px 0 0"></div>
<div style="position:absolute;left:404.78px;top:115.79px;font-family:'Liberation Sans', sans-serif;font-size:13.6px;font-weight:normal;line-height:0;white-space:pre;color:#000;transform:scaleX(0.9241);transform-origin:0 0;">DRO</div>
<div style="position:absolute;left:331px;top:100px;width:65px;height:26px;background:#d9d9d9;border-style:solid;border-width:1px 2px 0 2px;border-color:#fff #888888 #888888 #fff;border-radius:4px 2px 0 0"></div>
<div style="position:absolute;left:338.38px;top:113.75px;font-family:'Liberation Sans', sans-serif;font-size:14px;font-weight:normal;line-height:0;white-space:pre;color:#000;transform:scaleX(1.0184);transform-origin:0 0;">Preview</div>
<div style="position:absolute;left:333px;top:127px;width:400px;height:498px;background:#000"></div>
<svg style="position:absolute;left:333px;top:127px" width="400" height="498" viewBox="333 127 400 498"><rect x="333" y="127" width="400" height="498" fill="#000"/><path d="M333 503 L718 625" stroke="#ff0000" stroke-width="1.2"/>
<path d="M333 434 L601 507 M600 497 L604 511 M335 429 L333 436" stroke="#f07878" stroke-width="1" fill="none"/>
<path d="M333 408 L347 397" stroke="#f07878" stroke-width="1"/>
<text x="0" y="0" font-family='"Liberation Mono", monospace' font-size="14" fill="#f07878" transform="translate(440 477) rotate(16) scale(0.95 0.85)" font-style="italic">2.46</text>
<text x="0" y="0" font-family='"Liberation Mono", monospace' font-size="14" fill="#f07878" transform="translate(587 544) rotate(-72) scale(0.95 0.85)" font-style="italic">2.33</text>
<text x="0" y="0" font-family='"Liberation Mono", monospace' font-size="12" fill="#f07878" transform="translate(383 361) rotate(-28) scale(0.9 0.6)" font-style="italic">2.33</text>
<text x="0" y="0" font-family='"Liberation Mono", monospace' font-size="10" fill="#f07878" transform="translate(422 306) rotate(12) scale(1 0.6)">2.34</text>
<path d="M620.0 466.0 L612.0 491.0" stroke="#5ab0b0" stroke-width="1" shape-rendering="crispEdges"/>
<path d="M624.4 458.8 L616.9 483.6" stroke="#5ab0b0" stroke-width="1" shape-rendering="crispEdges"/>
<path d="M628.9 451.6 L621.8 476.1" stroke="#5ab0b0" stroke-width="1" shape-rendering="crispEdges"/>
<path d="M633.3 444.3 L626.7 468.7" stroke="#5ab0b0" stroke-width="1" shape-rendering="crispEdges"/>
<path d="M637.8 437.1 L631.6 461.2" stroke="#5ab0b0" stroke-width="1" shape-rendering="crispEdges"/>
<path d="M642.2 429.9 L636.4 453.8" stroke="#5ab0b0" stroke-width="1" shape-rendering="crispEdges"/>
<path d="M646.7 422.7 L641.3 446.3" stroke="#5ab0b0" stroke-width="1" shape-rendering="crispEdges"/>
<path d="M651.1 415.4 L646.2 438.9" stroke="#5ab0b0" stroke-width="1" shape-rendering="crispEdges"/>
<path d="M655.6 408.2 L651.1 431.4" stroke="#5ab0b0" stroke-width="1" shape-rendering="crispEdges"/>
<path d="M660.0 401.0 L656.0 424.0" stroke="#5ab0b0" stroke-width="1" shape-rendering="crispEdges"/>
<path d="M664.4 393.8 L660.9 416.6" stroke="#5ab0b0" stroke-width="1" shape-rendering="crispEdges"/>
<path d="M668.9 386.6 L665.8 409.1" stroke="#5ab0b0" stroke-width="1" shape-rendering="crispEdges"/>
<path d="M673.3 379.3 L670.7 401.7" stroke="#5ab0b0" stroke-width="1" shape-rendering="crispEdges"/>
<path d="M677.8 372.1 L675.6 394.2" stroke="#5ab0b0" stroke-width="1" shape-rendering="crispEdges"/>
<path d="M682.2 364.9 L680.4 386.8" stroke="#5ab0b0" stroke-width="1" shape-rendering="crispEdges"/>
<path d="M686.7 357.7 L685.3 379.3" stroke="#5ab0b0" stroke-width="1" shape-rendering="crispEdges"/>
<path d="M691.1 350.4 L690.2 371.9" stroke="#5ab0b0" stroke-width="1" shape-rendering="crispEdges"/>
<path d="M695.6 343.2 L695.1 364.4" stroke="#5ab0b0" stroke-width="1" shape-rendering="crispEdges"/>
<path d="M700.0 336.0 L700.0 357.0" stroke="#5ab0b0" stroke-width="1" shape-rendering="crispEdges"/>
<path d="M620.0 466.0 L700.0 336.0 L700.0 357.0 L612.0 491.0" stroke="#5ab0b0" stroke-width="1" fill="none"/>
<path d="M356.3 387.6 C356.3 397.1 364.3 402.3 374.0 404.9 L618.1 472.1" stroke="#ffffff" stroke-width="1" fill="none"/>
<path d="M355.1 388.5 C355.1 398.7 363.2 404.3 373.0 407.0 L617.4 474.2" stroke="#ffffff" stroke-width="1" fill="none"/>
<path d="M354.0 389.4 C354.0 400.2 362.1 406.4 372.0 409.1 L616.7 476.4" stroke="#ffffff" stroke-width="1" fill="none"/>
<path d="M352.8 390.2 C352.8 401.7 361.0 408.4 371.0 411.2 L616.0 478.5" stroke="#ffffff" stroke-width="1" fill="none"/>
<path d="M351.7 391.1 C351.7 403.3 359.9 410.5 370.0 413.2 L615.3 480.7" stroke="#ffffff" stroke-width="1" fill="none"/>
<path d="M350.5 392.0 C350.5 404.8 358.8 412.5 369.0 415.3 L614.6 482.9" stroke="#ffffff" stroke-width="1" fill="none"/>
<path d="M349.3 392.9 C349.3 406.4 357.7 414.6 368.0 417.4 L613.9 485.0" stroke="#ffffff" stroke-width="1" fill="none"/>
<path d="M348.2 393.7 C348.2 407.9 356.6 416.6 367.0 419.5 L613.2 487.2" stroke="#ffffff" stroke-width="1" fill="none"/>
<path d="M347.0 394.6 C347.0 409.4 355.6 418.7 366.0 421.6 L612.5 489.3" stroke="#ffffff" stroke-width="1" fill="none"/>
<path d="M432.4 418.5 L618.0 469.0" stroke="#d07070" stroke-width="1.6" fill="none" shape-rendering="crispEdges"/>
<path d="M432.4 420.1 L617.6 472.2" stroke="#d07070" stroke-width="1.6" fill="none" shape-rendering="crispEdges"/>
<path d="M432.4 421.7 L617.2 475.4" stroke="#d07070" stroke-width="1.6" fill="none" shape-rendering="crispEdges"/>
<path d="M352.0 396.0 L355.0 396.8 L358.0 397.6 L360.9 398.3 L363.9 399.1 L366.9 399.9 L369.9 400.7 L372.8 401.4 L375.8 402.2 L378.8 403.0 L381.8 403.8 L384.8 404.6 L387.7 405.3 L390.7 406.1 L393.7 406.9 L396.7 407.7 L399.6 408.4 L402.6 409.2 L405.6 410.0 L408.6 410.8 L411.6 411.6 L414.5 412.3 L417.5 413.1 L420.5 413.9 L423.5 414.7 L426.4 415.4 L429.4 416.2 L432.4 417.0 L435.4 417.8 L438.4 418.6 L441.3 419.3 L444.3 420.1 L447.3 420.9 L450.3 421.7 L453.2 422.4 L456.2 423.2 L459.2 424.0 L462.2 424.8 L465.2 425.6 L468.1 426.3 L471.1 427.1 L474.1 427.9 L477.1 428.7 L480.0 429.4 L483.0 430.2 L486.0 431.0 L489.0 431.8 L492.0 432.6 L494.9 433.3 L497.9 434.1 L500.9 434.9 L503.9 435.7 L506.8 436.4 L509.8 437.2 L512.8 438.0 L515.8 438.8 L518.8 439.6 L521.7 440.3 L524.7 441.1 L527.7 441.9 L530.7 442.7 L533.6 443.4 L536.6 444.2 L539.6 445.0 L542.6 445.8 L545.6 446.6 L548.5 447.3 L551.5 448.1 L554.5 448.9 L557.5 449.7 L560.4 450.4 L563.4 451.2 L566.4 452.0 L569.4 452.8 L572.4 453.6 L575.3 454.3 L578.3 455.1 L581.3 455.9 L584.3 456.7 L587.2 457.4 L590.2 458.2 L593.2 459.0 L596.2 459.8 L599.2 460.6 L602.1 461.3 L605.1 462.1 L608.1 462.9 L611.1 463.7 L614.0 464.4 L617.0 465.2 L620.0 466.0" stroke="#e07474" stroke-width="1.2" fill="none" shape-rendering="crispEdges"/>
<path d="M353.8 394.4 L356.8 395.2 L359.8 396.0 L362.7 396.7 L365.7 397.5 L368.7 398.3 L371.7 399.1 L374.6 399.8 L377.6 400.6 L380.6 401.4 L383.5 402.2 L386.5 402.9 L389.5 403.7 L392.5 404.5 L395.4 405.3 L398.4 406.0 L401.4 406.8 L404.3 407.6 L407.3 408.3 L410.3 409.1 L413.3 409.9 L416.2 410.7 L419.2 411.4 L422.2 412.2 L425.1 413.0 L428.1 413.8 L431.1 414.5 L434.0 415.3 L437.0 416.1 L440.0 416.9 L443.0 417.6 L445.9 418.4 L448.9 419.2 L451.9 419.9 L454.8 420.7 L457.8 421.5 L460.8 422.3 L463.8 423.0 L466.7 423.8 L469.7 424.6 L472.7 425.4 L475.6 426.1 L478.6 426.9 L481.6 427.7 L484.6 428.5 L487.5 429.2 L490.5 430.0 L493.5 430.8 L496.4 431.5 L499.4 432.3 L502.4 433.1 L505.3 433.9 L508.3 434.6 L511.3 435.4 L514.3 436.2 L517.2 437.0 L520.2 437.7 L523.2 438.5 L526.1 439.3 L529.1 440.1 L532.1 440.8 L535.1 441.6 L538.0 442.4 L541.0 443.1 L544.0 443.9 L546.9 444.7 L549.9 445.5 L552.9 446.2 L555.9 447.0 L558.8 447.8 L561.8 448.6 L564.8 449.3 L567.7 450.1 L570.7 450.9 L573.7 451.7 L576.6 452.4 L579.6 453.2 L582.6 454.0 L585.6 454.7 L588.5 455.5 L591.5 456.3 L594.5 457.1 L597.4 457.8 L600.4 458.6 L603.4 459.4 L606.4 460.2 L609.3 460.9 L612.3 461.7 L615.3 462.5 L618.2 463.3 L621.2 464.0" stroke="#58a8a8" stroke-width="1" fill="none" shape-rendering="crispEdges" stroke-dasharray="2 3"/>
<path d="M355.7 392.8 L358.6 393.6 L361.6 394.4 L364.6 395.2 L367.5 395.9 L370.5 396.7 L373.5 397.5 L376.4 398.2 L379.4 399.0 L382.3 399.8 L385.3 400.5 L388.3 401.3 L391.2 402.1 L394.2 402.8 L397.2 403.6 L400.1 404.4 L403.1 405.2 L406.1 405.9 L409.0 406.7 L412.0 407.5 L414.9 408.2 L417.9 409.0 L420.9 409.8 L423.8 410.5 L426.8 411.3 L429.8 412.1 L432.7 412.8 L435.7 413.6 L438.7 414.4 L441.6 415.2 L444.6 415.9 L447.5 416.7 L450.5 417.5 L453.5 418.2 L456.4 419.0 L459.4 419.8 L462.4 420.5 L465.3 421.3 L468.3 422.1 L471.3 422.8 L474.2 423.6 L477.2 424.4 L480.2 425.1 L483.1 425.9 L486.1 426.7 L489.0 427.5 L492.0 428.2 L495.0 429.0 L497.9 429.8 L500.9 430.5 L503.9 431.3 L506.8 432.1 L509.8 432.8 L512.8 433.6 L515.7 434.4 L518.7 435.1 L521.6 435.9 L524.6 436.7 L527.6 437.5 L530.5 438.2 L533.5 439.0 L536.5 439.8 L539.4 440.5 L542.4 441.3 L545.4 442.1 L548.3 442.8 L551.3 443.6 L554.3 444.4 L557.2 445.1 L560.2 445.9 L563.1 446.7 L566.1 447.4 L569.1 448.2 L572.0 449.0 L575.0 449.8 L578.0 450.5 L580.9 451.3 L583.9 452.1 L586.9 452.8 L589.8 453.6 L592.8 454.4 L595.7 455.1 L598.7 455.9 L601.7 456.7 L604.6 457.4 L607.6 458.2 L610.6 459.0 L613.5 459.8 L616.5 460.5 L619.5 461.3 L622.4 462.1" stroke="#e07474" stroke-width="1.2" fill="none" shape-rendering="crispEdges"/>
<path d="M357.5 391.3 L360.5 392.0 L363.4 392.8 L366.4 393.6 L369.3 394.3 L372.3 395.1 L375.2 395.9 L378.2 396.6 L381.2 397.4 L384.1 398.2 L387.1 398.9 L390.0 399.7 L393.0 400.4 L395.9 401.2 L398.9 402.0 L401.9 402.7 L404.8 403.5 L407.8 404.3 L410.7 405.0 L413.7 405.8 L416.6 406.6 L419.6 407.3 L422.6 408.1 L425.5 408.9 L428.5 409.6 L431.4 410.4 L434.4 411.2 L437.3 411.9 L440.3 412.7 L443.3 413.4 L446.2 414.2 L449.2 415.0 L452.1 415.7 L455.1 416.5 L458.0 417.3 L461.0 418.0 L464.0 418.8 L466.9 419.6 L469.9 420.3 L472.8 421.1 L475.8 421.9 L478.7 421.8 L481.7 422.0 L484.7 422.5 L487.6 423.0 L490.6 423.7 L493.5 424.4 L496.5 425.1 L499.4 425.9 L502.4 426.8 L505.4 427.7 L508.3 428.7 L511.3 429.8 L514.2 431.4 L517.2 432.6 L520.1 433.3 L523.1 434.1 L526.1 434.9 L529.0 435.6 L532.0 436.4 L534.9 437.2 L537.9 437.9 L540.8 438.7 L543.8 439.4 L546.8 440.2 L549.7 441.0 L552.7 441.7 L555.6 442.5 L558.6 443.3 L561.5 444.0 L564.5 444.8 L567.5 445.6 L570.4 446.3 L573.4 447.1 L576.3 447.9 L579.3 448.6 L582.2 449.4 L585.2 450.2 L588.2 450.9 L591.1 451.7 L594.1 452.4 L597.0 453.2 L600.0 454.0 L602.9 454.7 L605.9 455.5 L608.9 456.3 L611.8 457.0 L614.8 457.8 L617.7 458.6 L620.7 459.3 L623.6 460.1" stroke="#58a8a8" stroke-width="1" fill="none" shape-rendering="crispEdges" stroke-dasharray="2 3"/>
<path d="M359.3 389.7 L362.3 390.5 L365.2 391.2 L368.2 392.0 L371.1 392.7 L374.1 393.5 L377.0 394.3 L380.0 395.0 L382.9 395.8 L385.9 396.5 L388.8 397.3 L391.8 398.1 L394.7 398.8 L397.7 399.6 L400.6 400.3 L403.6 401.1 L406.5 401.9 L409.5 402.6 L412.4 403.4 L415.4 404.1 L418.3 404.9 L421.3 405.7 L424.2 406.4 L427.2 407.2 L430.1 407.9 L433.1 408.7 L436.0 409.5 L439.0 410.2 L441.9 411.0 L444.9 411.7 L447.8 412.5 L450.8 413.3 L453.7 414.0 L456.7 414.8 L459.6 415.5 L462.6 416.3 L465.5 415.9 L468.5 415.9 L471.4 416.2 L474.4 416.6 L477.3 417.1 L480.3 417.7 L483.2 418.3 L486.2 418.9 L489.1 419.6 L492.1 420.3 L495.0 421.0 L498.0 421.7 L500.9 422.5 L503.9 423.3 L506.8 424.2 L509.8 425.0 L512.7 425.9 L515.7 426.9 L518.6 427.8 L521.6 428.9 L524.5 430.0 L527.5 431.3 L530.4 433.1 L533.4 434.6 L536.3 435.3 L539.3 436.1 L542.2 436.8 L545.2 437.6 L548.1 438.4 L551.1 439.1 L554.0 439.9 L557.0 440.6 L559.9 441.4 L562.9 442.2 L565.8 442.9 L568.8 443.7 L571.7 444.4 L574.7 445.2 L577.6 446.0 L580.6 446.7 L583.5 447.5 L586.5 448.2 L589.4 449.0 L592.4 449.8 L595.3 450.5 L598.3 451.3 L601.2 452.0 L604.2 452.8 L607.1 453.6 L610.1 454.3 L613.0 455.1 L616.0 455.8 L618.9 456.6 L621.9 457.4 L624.8 458.1" stroke="#e07474" stroke-width="1.2" fill="none" shape-rendering="crispEdges"/>
<path d="M361.2 388.1 L364.1 388.9 L367.1 389.6 L370.0 390.4 L372.9 391.1 L375.9 391.9 L378.8 392.7 L381.8 393.4 L384.7 394.2 L387.7 394.9 L390.6 395.7 L393.5 396.4 L396.5 397.2 L399.4 397.9 L402.4 398.7 L405.3 399.5 L408.3 400.2 L411.2 401.0 L414.1 401.7 L417.1 402.5 L420.0 403.2 L423.0 404.0 L425.9 404.8 L428.9 405.5 L431.8 406.3 L434.7 407.0 L437.7 407.8 L440.6 408.5 L443.6 409.3 L446.5 410.0 L449.5 410.8 L452.4 411.6 L455.4 412.3 L458.3 411.4 L461.2 411.4 L464.2 411.7 L467.1 412.1 L470.1 412.5 L473.0 413.0 L476.0 413.6 L478.9 414.2 L481.8 414.8 L484.8 415.4 L487.7 416.1 L490.7 416.8 L493.6 417.5 L496.6 418.2 L499.5 419.0 L502.4 419.8 L505.4 420.5 L508.3 421.4 L511.3 422.2 L514.2 423.0 L517.2 423.9 L520.1 424.8 L523.0 425.8 L526.0 426.7 L528.9 427.7 L531.9 428.8 L534.8 430.0 L537.8 431.3 L540.7 432.9 L543.6 435.0 L546.6 435.7 L549.5 436.5 L552.5 437.3 L555.4 438.0 L558.4 438.8 L561.3 439.5 L564.3 440.3 L567.2 441.0 L570.1 441.8 L573.1 442.5 L576.0 443.3 L579.0 444.1 L581.9 444.8 L584.9 445.6 L587.8 446.3 L590.7 447.1 L593.7 447.8 L596.6 448.6 L599.6 449.3 L602.5 450.1 L605.5 450.9 L608.4 451.6 L611.3 452.4 L614.3 453.1 L617.2 453.9 L620.2 454.6 L623.1 455.4 L626.1 456.2" stroke="#58a8a8" stroke-width="1" fill="none" shape-rendering="crispEdges" stroke-dasharray="2 3"/>
<path d="M363.0 386.5 L365.9 387.3 L368.9 388.0 L371.8 388.8 L374.7 389.6 L377.7 390.3 L380.6 391.1 L383.6 391.8 L386.5 392.6 L389.4 393.3 L392.4 394.1 L395.3 394.8 L398.2 395.6 L401.2 396.3 L404.1 397.1 L407.0 397.8 L410.0 398.6 L412.9 399.3 L415.9 400.1 L418.8 400.8 L421.7 401.6 L424.7 402.3 L427.6 403.1 L430.5 403.8 L433.5 404.6 L436.4 405.3 L439.3 406.1 L442.3 406.8 L445.2 407.6 L448.2 408.3 L451.1 407.7 L454.0 407.5 L457.0 407.6 L459.9 407.9 L462.8 408.3 L465.8 408.8 L468.7 409.3 L471.6 409.8 L474.6 410.4 L477.5 411.0 L480.5 411.6 L483.4 412.3 L486.3 412.9 L489.3 413.6 L492.2 414.3 L495.1 415.1 L498.1 415.8 L501.0 416.5 L503.9 417.3 L506.9 418.1 L509.8 418.9 L512.8 419.7 L515.7 420.5 L518.6 421.3 L521.6 422.2 L524.5 423.1 L527.4 424.0 L530.4 424.9 L533.3 425.9 L536.2 426.9 L539.2 428.0 L542.1 429.1 L545.1 430.4 L548.0 431.9 L550.9 433.9 L553.9 435.4 L556.8 436.1 L559.7 436.9 L562.7 437.6 L565.6 438.4 L568.5 439.2 L571.5 439.9 L574.4 440.7 L577.4 441.4 L580.3 442.2 L583.2 442.9 L586.2 443.7 L589.1 444.4 L592.0 445.2 L595.0 445.9 L597.9 446.7 L600.8 447.4 L603.8 448.2 L606.7 448.9 L609.7 449.7 L612.6 450.4 L615.5 451.2 L618.5 451.9 L621.4 452.7 L624.3 453.4 L627.3 454.2" stroke="#e07474" stroke-width="1.2" fill="none" shape-rendering="crispEdges"/>
<path d="M364.8 385.0 L367.8 385.7 L370.7 386.5 L373.6 387.2 L376.6 388.0 L379.5 388.7 L382.4 389.5 L385.3 390.2 L388.3 390.9 L391.2 391.7 L394.1 392.4 L397.1 393.2 L400.0 393.9 L402.9 394.7 L405.8 395.4 L408.8 396.2 L411.7 396.9 L414.6 397.7 L417.6 398.4 L420.5 399.2 L423.4 399.9 L426.4 400.7 L429.3 401.4 L432.2 402.2 L435.1 402.9 L438.1 403.6 L441.0 404.4 L443.9 405.1 L446.9 404.2 L449.8 404.0 L452.7 404.1 L455.6 404.4 L458.6 404.8 L461.5 405.2 L464.4 405.7 L467.4 406.2 L470.3 406.8 L473.2 407.4 L476.2 408.0 L479.1 408.6 L482.0 409.3 L484.9 410.0 L487.9 410.6 L490.8 411.3 L493.7 412.1 L496.7 412.8 L499.6 413.5 L502.5 414.3 L505.4 415.0 L508.4 415.8 L511.3 416.6 L514.2 417.3 L517.2 418.1 L520.1 419.0 L523.0 419.8 L526.0 420.6 L528.9 421.5 L531.8 422.4 L534.7 423.3 L537.7 424.3 L540.6 425.2 L543.5 426.3 L546.5 427.4 L549.4 428.5 L552.3 429.8 L555.2 431.2 L558.2 433.1 L561.1 435.0 L564.0 435.8 L567.0 436.5 L569.9 437.3 L572.8 438.0 L575.8 438.8 L578.7 439.5 L581.6 440.3 L584.5 441.0 L587.5 441.8 L590.4 442.5 L593.3 443.2 L596.3 444.0 L599.2 444.7 L602.1 445.5 L605.0 446.2 L608.0 447.0 L610.9 447.7 L613.8 448.5 L616.8 449.2 L619.7 450.0 L622.6 450.7 L625.6 451.5 L628.5 452.2" stroke="#58a8a8" stroke-width="1" fill="none" shape-rendering="crispEdges" stroke-dasharray="2 3"/>
<path d="M366.7 383.4 L369.6 384.1 L372.5 384.9 L375.4 385.6 L378.4 386.4 L381.3 387.1 L384.2 387.9 L387.1 388.6 L390.0 389.3 L393.0 390.1 L395.9 390.8 L398.8 391.6 L401.7 392.3 L404.7 393.0 L407.6 393.8 L410.5 394.5 L413.4 395.3 L416.4 396.0 L419.3 396.8 L422.2 397.5 L425.1 398.2 L428.0 399.0 L431.0 399.7 L433.9 400.5 L436.8 401.2 L439.7 402.0 L442.7 401.1 L445.6 400.8 L448.5 400.9 L451.4 401.1 L454.3 401.4 L457.3 401.9 L460.2 402.3 L463.1 402.8 L466.0 403.4 L469.0 403.9 L471.9 404.5 L474.8 405.2 L477.7 405.8 L480.6 406.4 L483.6 407.1 L486.5 407.8 L489.4 408.5 L492.3 409.2 L495.3 409.9 L498.2 410.6 L501.1 411.4 L504.0 412.1 L506.9 412.9 L509.9 413.6 L512.8 414.4 L515.7 415.2 L518.6 415.9 L521.6 416.7 L524.5 417.5 L527.4 418.4 L530.3 419.2 L533.3 420.1 L536.2 420.9 L539.1 421.8 L542.0 422.8 L544.9 423.7 L547.9 424.7 L550.8 425.7 L553.7 426.8 L556.6 428.0 L559.6 429.3 L562.5 430.8 L565.4 433.0 L568.3 434.6 L571.2 435.4 L574.2 436.1 L577.1 436.9 L580.0 437.6 L582.9 438.4 L585.9 439.1 L588.8 439.8 L591.7 440.6 L594.6 441.3 L597.5 442.1 L600.5 442.8 L603.4 443.6 L606.3 444.3 L609.2 445.0 L612.2 445.8 L615.1 446.5 L618.0 447.3 L620.9 448.0 L623.9 448.8 L626.8 449.5 L629.7 450.2" stroke="#e07474" stroke-width="1.2" fill="none" shape-rendering="crispEdges"/>
<path d="M368.5 381.8 L371.4 382.6 L374.3 383.3 L377.2 384.0 L380.2 384.8 L383.1 385.5 L386.0 386.2 L388.9 387.0 L391.8 387.7 L394.7 388.5 L397.7 389.2 L400.6 389.9 L403.5 390.7 L406.4 391.4 L409.3 392.2 L412.2 392.9 L415.2 393.6 L418.1 394.4 L421.0 395.1 L423.9 395.8 L426.8 396.6 L429.7 397.3 L432.6 398.1 L435.6 398.8 L438.5 398.5 L441.4 397.8 L444.3 397.8 L447.2 398.0 L450.1 398.2 L453.1 398.6 L456.0 399.0 L458.9 399.5 L461.8 400.0 L464.7 400.6 L467.6 401.2 L470.5 401.8 L473.5 402.4 L476.4 403.0 L479.3 403.7 L482.2 404.4 L485.1 405.1 L488.0 405.8 L491.0 406.5 L493.9 407.2 L496.8 407.9 L499.7 408.6 L502.6 409.4 L505.5 410.1 L508.5 410.8 L511.4 411.6 L514.3 412.3 L517.2 413.1 L520.1 413.9 L523.0 414.6 L525.9 415.4 L528.9 416.2 L531.8 417.0 L534.7 417.8 L537.6 418.7 L540.5 419.5 L543.4 420.4 L546.4 421.3 L549.3 422.3 L552.2 423.2 L555.1 424.3 L558.0 425.3 L560.9 426.5 L563.8 427.7 L566.8 429.1 L569.7 430.7 L572.6 433.5 L575.5 434.2 L578.4 435.0 L581.3 435.7 L584.3 436.5 L587.2 437.2 L590.1 437.9 L593.0 438.7 L595.9 439.4 L598.8 440.2 L601.8 440.9 L604.7 441.6 L607.6 442.4 L610.5 443.1 L613.4 443.8 L616.3 444.6 L619.2 445.3 L622.2 446.1 L625.1 446.8 L628.0 447.5 L630.9 448.3" stroke="#58a8a8" stroke-width="1" fill="none" shape-rendering="crispEdges" stroke-dasharray="2 3"/>
<path d="M370.3 380.2 L373.2 381.0 L376.2 381.7 L379.1 382.4 L382.0 383.2 L384.9 383.9 L387.8 384.6 L390.7 385.4 L393.6 386.1 L396.5 386.8 L399.4 387.6 L402.3 388.3 L405.2 389.1 L408.1 389.8 L411.1 390.5 L414.0 391.3 L416.9 392.0 L419.8 392.7 L422.7 393.5 L425.6 394.2 L428.5 394.9 L431.4 395.7 L434.3 396.4 L437.2 395.2 L440.1 394.9 L443.1 395.0 L446.0 395.2 L448.9 395.5 L451.8 395.9 L454.7 396.3 L457.6 396.8 L460.5 397.3 L463.4 397.9 L466.3 398.5 L469.2 399.1 L472.1 399.7 L475.0 400.4 L478.0 401.0 L480.9 401.7 L483.8 402.4 L486.7 403.1 L489.6 403.8 L492.5 404.5 L495.4 405.3 L498.3 406.0 L501.2 406.7 L504.1 407.4 L507.0 408.2 L510.0 408.9 L512.9 409.7 L515.8 410.4 L518.7 411.1 L521.6 411.9 L524.5 412.6 L527.4 413.4 L530.3 414.2 L533.2 415.0 L536.1 415.8 L539.0 416.6 L541.9 417.4 L544.9 418.2 L547.8 419.1 L550.7 420.0 L553.6 420.9 L556.5 421.9 L559.4 422.8 L562.3 423.9 L565.2 425.0 L568.1 426.2 L571.0 427.5 L573.9 429.0 L576.9 431.1 L579.8 433.1 L582.7 433.8 L585.6 434.6 L588.5 435.3 L591.4 436.0 L594.3 436.8 L597.2 437.5 L600.1 438.2 L603.0 439.0 L605.9 439.7 L608.9 440.4 L611.8 441.2 L614.7 441.9 L617.6 442.6 L620.5 443.4 L623.4 444.1 L626.3 444.8 L629.2 445.6 L632.1 446.3" stroke="#e07474" stroke-width="1.2" fill="none" shape-rendering="crispEdges"/>
<path d="M372.2 378.7 L375.1 379.4 L378.0 380.1 L380.9 380.9 L383.8 381.6 L386.7 382.3 L389.6 383.0 L392.5 383.8 L395.4 384.5 L398.3 385.2 L401.2 386.0 L404.1 386.7 L407.0 387.4 L409.9 388.2 L412.8 388.9 L415.7 389.6 L418.6 390.3 L421.5 391.1 L424.4 391.8 L427.3 392.5 L430.2 393.3 L433.1 393.6 L436.0 392.3 L438.9 392.2 L441.8 392.3 L444.7 392.5 L447.6 392.8 L450.5 393.2 L453.4 393.7 L456.3 394.2 L459.2 394.7 L462.1 395.3 L465.0 395.9 L467.9 396.5 L470.8 397.1 L473.7 397.8 L476.6 398.5 L479.5 399.1 L482.4 399.8 L485.3 400.6 L488.2 401.3 L491.1 402.0 L494.0 402.7 L496.9 403.4 L499.8 404.2 L502.8 404.9 L505.7 405.6 L508.6 406.4 L511.5 407.1 L514.4 407.8 L517.3 408.5 L520.2 409.3 L523.1 410.0 L526.0 410.7 L528.9 411.5 L531.8 412.2 L534.7 413.0 L537.6 413.8 L540.5 414.5 L543.4 415.3 L546.3 416.1 L549.2 417.0 L552.1 417.8 L555.0 418.7 L557.9 419.6 L560.8 420.5 L563.7 421.5 L566.6 422.5 L569.5 423.6 L572.4 424.8 L575.3 426.1 L578.2 427.5 L581.1 429.3 L584.0 431.9 L586.9 432.7 L589.8 433.4 L592.7 434.1 L595.6 434.8 L598.5 435.6 L601.4 436.3 L604.3 437.0 L607.2 437.8 L610.1 438.5 L613.0 439.2 L615.9 440.0 L618.8 440.7 L621.7 441.4 L624.6 442.1 L627.5 442.9 L630.4 443.6 L633.3 444.3" stroke="#58a8a8" stroke-width="1" fill="none" shape-rendering="crispEdges" stroke-dasharray="2 3"/>
<path d="M374.0 377.1 L376.9 377.8 L379.8 378.5 L382.7 379.3 L385.6 380.0 L388.5 380.7 L391.4 381.4 L394.3 382.2 L397.2 382.9 L400.1 383.6 L402.9 384.3 L405.8 385.1 L408.7 385.8 L411.6 386.5 L414.5 387.2 L417.4 388.0 L420.3 388.7 L423.2 389.4 L426.1 390.1 L429.0 390.9 L431.9 390.4 L434.8 389.7 L437.7 389.6 L440.6 389.7 L443.5 389.9 L446.4 390.2 L449.3 390.6 L452.2 391.1 L455.1 391.6 L458.0 392.1 L460.8 392.7 L463.7 393.3 L466.6 393.9 L469.5 394.6 L472.4 395.2 L475.3 395.9 L478.2 396.6 L481.1 397.3 L484.0 398.1 L486.9 398.8 L489.8 399.5 L492.7 400.2 L495.6 401.0 L498.5 401.7 L501.4 402.4 L504.3 403.2 L507.2 403.9 L510.1 404.6 L513.0 405.4 L515.9 406.1 L518.7 406.8 L521.6 407.5 L524.5 408.2 L527.4 408.9 L530.3 409.7 L533.2 410.4 L536.1 411.1 L539.0 411.8 L541.9 412.6 L544.8 413.3 L547.7 414.1 L550.6 414.9 L553.5 415.7 L556.4 416.6 L559.3 417.4 L562.2 418.3 L565.1 419.2 L568.0 420.2 L570.9 421.2 L573.8 422.3 L576.6 423.4 L579.5 424.7 L582.4 426.1 L585.3 427.8 L588.2 430.8 L591.1 431.5 L594.0 432.2 L596.9 432.9 L599.8 433.7 L602.7 434.4 L605.6 435.1 L608.5 435.8 L611.4 436.6 L614.3 437.3 L617.2 438.0 L620.1 438.7 L623.0 439.5 L625.9 440.2 L628.8 440.9 L631.7 441.6 L634.5 442.4" stroke="#e07474" stroke-width="1.2" fill="none" shape-rendering="crispEdges"/>
<path d="M375.8 375.5 L378.7 376.2 L381.6 377.0 L384.5 377.7 L387.4 378.4 L390.3 379.1 L393.2 379.8 L396.0 380.6 L398.9 381.3 L401.8 382.0 L404.7 382.7 L407.6 383.4 L410.5 384.2 L413.4 384.9 L416.3 385.6 L419.2 386.3 L422.0 387.0 L424.9 387.8 L427.8 388.5 L430.7 387.8 L433.6 387.1 L436.5 387.0 L439.4 387.1 L442.3 387.4 L445.1 387.7 L448.0 388.1 L450.9 388.6 L453.8 389.1 L456.7 389.6 L459.6 390.2 L462.5 390.8 L465.4 391.4 L468.3 392.1 L471.1 392.7 L474.0 393.4 L476.9 394.1 L479.8 394.9 L482.7 395.6 L485.6 396.3 L488.5 397.1 L491.4 397.8 L494.2 398.6 L497.1 399.3 L500.0 400.1 L502.9 400.8 L505.8 401.6 L508.7 402.3 L511.6 403.0 L514.5 403.7 L517.3 404.4 L520.2 405.1 L523.1 405.8 L526.0 406.5 L528.9 407.2 L531.8 407.9 L534.7 408.6 L537.6 409.3 L540.5 410.0 L543.3 410.7 L546.2 411.5 L549.1 412.2 L552.0 412.9 L554.9 413.7 L557.8 414.5 L560.7 415.3 L563.6 416.2 L566.4 417.1 L569.3 418.0 L572.2 418.9 L575.1 419.9 L578.0 421.0 L580.9 422.2 L583.8 423.4 L586.7 424.8 L589.5 426.5 L592.4 429.6 L595.3 430.3 L598.2 431.0 L601.1 431.7 L604.0 432.5 L606.9 433.2 L609.8 433.9 L612.7 434.6 L615.5 435.3 L618.4 436.1 L621.3 436.8 L624.2 437.5 L627.1 438.2 L630.0 439.0 L632.9 439.7 L635.8 440.4" stroke="#58a8a8" stroke-width="1" fill="none" shape-rendering="crispEdges" stroke-dasharray="2 3"/>
<path d="M377.7 373.9 L380.5 374.7 L383.4 375.4 L386.3 376.1 L389.2 376.8 L392.1 377.5 L395.0 378.2 L397.8 379.0 L400.7 379.7 L403.6 380.4 L406.5 381.1 L409.4 381.8 L412.2 382.5 L415.1 383.3 L418.0 384.0 L420.9 384.7 L423.8 385.4 L426.6 386.1 L429.5 385.4 L432.4 384.7 L435.3 384.6 L438.2 384.7 L441.1 384.9 L443.9 385.2 L446.8 385.6 L449.7 386.1 L452.6 386.6 L455.5 387.1 L458.3 387.7 L461.2 388.3 L464.1 388.9 L467.0 389.6 L469.9 390.3 L472.7 391.0 L475.6 391.7 L478.5 392.4 L481.4 393.2 L484.3 393.9 L487.2 394.7 L490.0 395.5 L492.9 396.2 L495.8 397.0 L498.7 397.8 L501.6 398.5 L504.4 399.3 L507.3 400.0 L510.2 400.8 L513.1 401.5 L516.0 402.2 L518.8 402.9 L521.7 403.6 L524.6 404.3 L527.5 404.9 L530.4 405.6 L533.2 406.3 L536.1 406.9 L539.0 407.6 L541.9 408.3 L544.8 408.9 L547.7 409.6 L550.5 410.3 L553.4 411.0 L556.3 411.8 L559.2 412.5 L562.1 413.3 L564.9 414.1 L567.8 415.0 L570.7 415.8 L573.6 416.7 L576.5 417.7 L579.3 418.7 L582.2 419.8 L585.1 420.9 L588.0 422.2 L590.9 423.6 L593.8 425.3 L596.6 428.4 L599.5 429.1 L602.4 429.8 L605.3 430.5 L608.2 431.3 L611.0 432.0 L613.9 432.7 L616.8 433.4 L619.7 434.1 L622.6 434.8 L625.4 435.6 L628.3 436.3 L631.2 437.0 L634.1 437.7 L637.0 438.4" stroke="#e07474" stroke-width="1.2" fill="none" shape-rendering="crispEdges"/>
<path d="M379.5 372.4 L382.4 373.1 L385.2 373.8 L388.1 374.5 L391.0 375.2 L393.9 375.9 L396.7 376.6 L399.6 377.3 L402.5 378.1 L405.4 378.8 L408.2 379.5 L411.1 380.2 L414.0 380.9 L416.9 381.6 L419.7 382.3 L422.6 383.0 L425.5 383.8 L428.4 383.3 L431.2 382.4 L434.1 382.2 L437.0 382.3 L439.9 382.5 L442.7 382.8 L445.6 383.2 L448.5 383.6 L451.4 384.1 L454.2 384.7 L457.1 385.2 L460.0 385.8 L462.9 386.5 L465.7 387.1 L468.6 387.8 L471.5 388.6 L474.3 389.3 L477.2 390.0 L480.1 390.8 L483.0 391.6 L485.8 392.4 L488.7 393.2 L491.6 394.0 L494.5 394.8 L497.3 395.6 L500.2 396.3 L503.1 397.1 L506.0 397.9 L508.8 398.6 L511.7 399.4 L514.6 400.1 L517.5 400.8 L520.3 401.5 L523.2 402.1 L526.1 402.8 L529.0 403.4 L531.8 404.1 L534.7 404.7 L537.6 405.3 L540.5 406.0 L543.3 406.6 L546.2 407.2 L549.1 407.9 L552.0 408.5 L554.8 409.2 L557.7 409.9 L560.6 410.6 L563.5 411.4 L566.3 412.1 L569.2 412.9 L572.1 413.8 L574.9 414.6 L577.8 415.5 L580.7 416.5 L583.6 417.5 L586.4 418.6 L589.3 419.7 L592.2 421.0 L595.1 422.4 L597.9 424.2 L600.8 427.2 L603.7 427.9 L606.6 428.6 L609.4 429.3 L612.3 430.0 L615.2 430.8 L618.1 431.5 L620.9 432.2 L623.8 432.9 L626.7 433.6 L629.6 434.3 L632.4 435.0 L635.3 435.7 L638.2 436.5" stroke="#58a8a8" stroke-width="1" fill="none" shape-rendering="crispEdges" stroke-dasharray="2 3"/>
<path d="M381.3 370.8 L384.2 371.5 L387.1 372.2 L389.9 372.9 L392.8 373.6 L395.7 374.3 L398.5 375.0 L401.4 375.7 L404.3 376.4 L407.1 377.2 L410.0 377.9 L412.9 378.6 L415.7 379.3 L418.6 380.0 L421.5 380.7 L424.3 381.4 L427.2 381.7 L430.1 380.2 L432.9 380.0 L435.8 380.0 L438.7 380.1 L441.5 380.4 L444.4 380.8 L447.3 381.2 L450.1 381.7 L453.0 382.2 L455.9 382.8 L458.8 383.4 L461.6 384.0 L464.5 384.7 L467.4 385.4 L470.2 386.1 L473.1 386.9 L476.0 387.7 L478.8 388.4 L481.7 389.2 L484.6 390.1 L487.4 390.9 L490.3 391.7 L493.2 392.5 L496.0 393.4 L498.9 394.2 L501.8 395.0 L504.6 395.8 L507.5 396.6 L510.4 397.4 L513.2 398.1 L516.1 398.8 L519.0 399.5 L521.8 400.2 L524.7 400.8 L527.6 401.4 L530.4 402.1 L533.3 402.7 L536.2 403.2 L539.0 403.8 L541.9 404.4 L544.8 405.0 L547.6 405.6 L550.5 406.2 L553.4 406.8 L556.2 407.5 L559.1 408.1 L562.0 408.8 L564.8 409.5 L567.7 410.2 L570.6 411.0 L573.4 411.8 L576.3 412.6 L579.2 413.4 L582.0 414.3 L584.9 415.3 L587.8 416.3 L590.6 417.4 L593.5 418.6 L596.4 419.9 L599.3 421.4 L602.1 423.2 L605.0 426.0 L607.9 426.7 L610.7 427.4 L613.6 428.1 L616.5 428.8 L619.3 429.5 L622.2 430.2 L625.1 430.9 L627.9 431.7 L630.8 432.4 L633.7 433.1 L636.5 433.8 L639.4 434.5" stroke="#e07474" stroke-width="1.2" fill="none" shape-rendering="crispEdges"/>
<path d="M383.2 369.2 L386.0 369.9 L388.9 370.6 L391.7 371.3 L394.6 372.0 L397.5 372.7 L400.3 373.4 L403.2 374.1 L406.1 374.8 L408.9 375.5 L411.8 376.2 L414.6 376.9 L417.5 377.7 L420.4 378.4 L423.2 379.1 L426.1 379.8 L428.9 378.2 L431.8 377.8 L434.7 377.7 L437.5 377.9 L440.4 378.1 L443.2 378.4 L446.1 378.8 L449.0 379.3 L451.8 379.8 L454.7 380.4 L457.5 381.0 L460.4 381.6 L463.3 382.3 L466.1 383.0 L469.0 383.7 L471.8 384.5 L474.7 385.3 L477.6 386.1 L480.4 386.9 L483.3 387.8 L486.1 388.6 L489.0 389.5 L491.9 390.4 L494.7 391.2 L497.6 392.1 L500.4 393.0 L503.3 393.9 L506.2 394.7 L509.0 395.5 L511.9 396.3 L514.7 397.0 L517.6 397.8 L520.5 398.4 L523.3 399.1 L526.2 399.7 L529.0 400.3 L531.9 400.8 L534.8 401.4 L537.6 401.9 L540.5 402.4 L543.4 403.0 L546.2 403.5 L549.1 404.0 L551.9 404.6 L554.8 405.2 L557.7 405.7 L560.5 406.4 L563.4 407.0 L566.2 407.6 L569.1 408.3 L572.0 409.0 L574.8 409.8 L577.7 410.6 L580.5 411.4 L583.4 412.3 L586.3 413.2 L589.1 414.1 L592.0 415.2 L594.8 416.3 L597.7 417.5 L600.6 418.8 L603.4 420.4 L606.3 422.5 L609.1 424.8 L612.0 425.5 L614.9 426.2 L617.7 426.9 L620.6 427.6 L623.4 428.3 L626.3 429.0 L629.2 429.7 L632.0 430.4 L634.9 431.1 L637.7 431.8 L640.6 432.5" stroke="#58a8a8" stroke-width="1" fill="none" shape-rendering="crispEdges" stroke-dasharray="2 3"/>
<path d="M385.0 367.6 L387.9 368.3 L390.7 369.0 L393.6 369.7 L396.4 370.4 L399.3 371.1 L402.1 371.8 L405.0 372.5 L407.8 373.2 L410.7 373.9 L413.5 374.6 L416.4 375.3 L419.2 376.0 L422.1 376.7 L424.9 377.4 L427.8 376.3 L430.7 375.7 L433.5 375.6 L436.4 375.6 L439.2 375.8 L442.1 376.1 L444.9 376.5 L447.8 377.0 L450.6 377.5 L453.5 378.0 L456.3 378.6 L459.2 379.2 L462.0 379.9 L464.9 380.6 L467.8 381.4 L470.6 382.1 L473.5 382.9 L476.3 383.7 L479.2 384.6 L482.0 385.5 L484.9 386.4 L487.7 387.3 L490.6 388.2 L493.4 389.1 L496.3 390.1 L499.1 391.0 L502.0 392.0 L504.8 392.9 L507.7 393.8 L510.6 394.7 L513.4 395.5 L516.3 396.3 L519.1 397.0 L522.0 397.7 L524.8 398.3 L527.7 398.8 L530.5 399.3 L533.4 399.8 L536.2 400.3 L539.1 400.7 L541.9 401.2 L544.8 401.6 L547.7 402.1 L550.5 402.6 L553.4 403.0 L556.2 403.6 L559.1 404.1 L561.9 404.7 L564.8 405.2 L567.6 405.9 L570.5 406.5 L573.3 407.2 L576.2 407.9 L579.0 408.6 L581.9 409.4 L584.7 410.2 L587.6 411.1 L590.5 412.0 L593.3 413.0 L596.2 414.0 L599.0 415.2 L601.9 416.4 L604.7 417.8 L607.6 419.5 L610.4 422.3 L613.3 423.6 L616.1 424.3 L619.0 425.0 L621.8 425.7 L624.7 426.4 L627.6 427.1 L630.4 427.7 L633.3 428.4 L636.1 429.1 L639.0 429.8 L641.8 430.5" stroke="#e07474" stroke-width="1.2" fill="none" shape-rendering="crispEdges"/>
<path d="M386.8 366.1 L389.7 366.8 L392.5 367.4 L395.4 368.1 L398.2 368.8 L401.1 369.5 L403.9 370.2 L406.8 370.9 L409.6 371.6 L412.5 372.3 L415.3 373.0 L418.1 373.7 L421.0 374.4 L423.8 375.1 L426.7 375.2 L429.5 373.8 L432.4 373.5 L435.2 373.5 L438.1 373.6 L440.9 373.9 L443.8 374.2 L446.6 374.6 L449.5 375.1 L452.3 375.7 L455.2 376.2 L458.0 376.9 L460.8 377.5 L463.7 378.2 L466.5 379.0 L469.4 379.7 L472.2 380.5 L475.1 381.4 L477.9 382.2 L480.8 383.1 L483.6 384.1 L486.5 385.0 L489.3 386.0 L492.2 387.0 L495.0 388.1 L497.9 389.1 L500.7 390.2 L503.5 391.3 L506.4 392.4 L509.2 393.4 L512.1 394.5 L514.9 395.5 L517.8 396.4 L520.6 397.1 L523.5 397.7 L526.3 398.2 L529.2 398.5 L532.0 398.8 L534.9 399.1 L537.7 399.4 L540.6 399.8 L543.4 400.1 L546.2 400.4 L549.1 400.8 L551.9 401.2 L554.8 401.6 L557.6 402.0 L560.5 402.5 L563.3 403.0 L566.2 403.5 L569.0 404.1 L571.9 404.7 L574.7 405.3 L577.6 406.0 L580.4 406.7 L583.3 407.4 L586.1 408.2 L588.9 409.1 L591.8 409.9 L594.6 410.9 L597.5 411.9 L600.3 412.9 L603.2 414.1 L606.0 415.4 L608.9 416.9 L611.7 418.8 L614.6 421.6 L617.4 422.3 L620.3 423.0 L623.1 423.7 L626.0 424.4 L628.8 425.1 L631.6 425.8 L634.5 426.5 L637.3 427.2 L640.2 427.9 L643.0 428.6" stroke="#58a8a8" stroke-width="1" fill="none" shape-rendering="crispEdges" stroke-dasharray="2 3"/>
<path d="M388.7 364.5 L391.5 365.2 L394.3 365.9 L397.2 366.6 L400.0 367.2 L402.9 367.9 L405.7 368.6 L408.5 369.3 L411.4 370.0 L414.2 370.7 L417.1 371.4 L419.9 372.1 L422.7 372.8 L425.6 373.5 L428.4 372.0 L431.3 371.5 L434.1 371.4 L436.9 371.5 L439.8 371.7 L442.6 372.0 L445.5 372.4 L448.3 372.8 L451.1 373.3 L454.0 373.9 L456.8 374.5 L459.7 375.1 L462.5 375.8 L465.3 376.6 L468.2 377.3 L471.0 378.1 L473.9 379.0 L476.7 379.9 L479.5 380.8 L482.4 381.8 L485.2 382.8 L488.1 383.8 L490.9 384.9 L493.7 386.0 L496.6 387.2 L499.4 388.5 L502.3 389.8 L505.1 391.5 L507.9 393.5 L510.8 394.2 L513.6 394.9 L516.5 395.5 L519.3 396.2 L522.1 396.9 L525.0 397.6 L527.8 398.3 L530.7 399.0 L533.5 399.7 L536.3 400.4 L539.2 399.3 L542.0 399.2 L544.9 399.3 L547.7 399.4 L550.5 399.6 L553.4 399.9 L556.2 400.2 L559.1 400.6 L561.9 401.0 L564.7 401.4 L567.6 401.9 L570.4 402.4 L573.2 402.9 L576.1 403.5 L578.9 404.2 L581.8 404.8 L584.6 405.5 L587.4 406.3 L590.3 407.1 L593.1 407.9 L596.0 408.8 L598.8 409.8 L601.6 410.8 L604.5 411.9 L607.3 413.1 L610.2 414.5 L613.0 416.1 L615.8 418.5 L618.7 420.4 L621.5 421.1 L624.4 421.8 L627.2 422.5 L630.0 423.2 L632.9 423.8 L635.7 424.5 L638.6 425.2 L641.4 425.9 L644.2 426.6" stroke="#e07474" stroke-width="1.2" fill="none" shape-rendering="crispEdges"/>
<path d="M390.5 362.9 L393.3 363.6 L396.2 364.3 L399.0 365.0 L401.8 365.7 L404.7 366.3 L407.5 367.0 L410.3 367.7 L413.2 368.4 L416.0 369.1 L418.8 369.8 L421.7 370.5 L424.5 371.1 L427.3 371.0 L430.2 369.7 L433.0 369.4 L435.8 369.4 L438.7 369.5 L441.5 369.8 L444.3 370.1 L447.2 370.5 L450.0 371.0 L452.8 371.6 L455.7 372.1 L458.5 372.8 L461.3 373.5 L464.2 374.2 L467.0 374.9 L469.8 375.7 L472.7 376.6 L475.5 377.5 L478.3 378.4 L481.2 379.4 L484.0 380.4 L486.8 381.5 L489.6 382.7 L492.5 383.9 L495.3 385.3 L498.1 386.8 L501.0 389.3 L503.8 390.3 L506.6 391.0 L509.5 391.7 L512.3 392.4 L515.1 393.1 L518.0 393.8 L520.8 394.5 L523.6 395.1 L526.5 395.8 L529.3 396.5 L532.1 397.2 L535.0 397.9 L537.8 398.6 L540.6 399.3 L543.5 399.9 L546.3 399.3 L549.1 398.8 L552.0 398.7 L554.8 398.8 L557.6 398.9 L560.5 399.2 L563.3 399.5 L566.1 399.8 L569.0 400.3 L571.8 400.7 L574.6 401.2 L577.5 401.8 L580.3 402.3 L583.1 403.0 L586.0 403.6 L588.8 404.3 L591.6 405.1 L594.5 405.9 L597.3 406.8 L600.1 407.7 L603.0 408.7 L605.8 409.7 L608.6 410.9 L611.5 412.2 L614.3 413.6 L617.1 415.5 L620.0 418.5 L622.8 419.1 L625.6 419.8 L628.5 420.5 L631.3 421.2 L634.1 421.9 L637.0 422.6 L639.8 423.3 L642.6 424.0 L645.5 424.6" stroke="#58a8a8" stroke-width="1" fill="none" shape-rendering="crispEdges" stroke-dasharray="2 3"/>
<path d="M392.3 361.3 L395.2 362.0 L398.0 362.7 L400.8 363.4 L403.6 364.1 L406.5 364.7 L409.3 365.4 L412.1 366.1 L414.9 366.8 L417.8 367.5 L420.6 368.1 L423.4 368.8 L426.2 369.5 L429.1 368.2 L431.9 367.6 L434.7 367.4 L437.5 367.5 L440.4 367.7 L443.2 367.9 L446.0 368.3 L448.9 368.8 L451.7 369.3 L454.5 369.8 L457.3 370.4 L460.2 371.1 L463.0 371.8 L465.8 372.5 L468.6 373.3 L471.5 374.2 L474.3 375.1 L477.1 376.0 L479.9 377.0 L482.8 378.0 L485.6 379.2 L488.4 380.4 L491.2 381.7 L494.1 383.2 L496.9 385.3 L499.7 387.2 L502.5 387.9 L505.4 388.6 L508.2 389.3 L511.0 390.0 L513.8 390.6 L516.7 391.3 L519.5 392.0 L522.3 392.7 L525.2 393.4 L528.0 394.0 L530.8 394.7 L533.6 395.4 L536.5 396.1 L539.3 396.8 L542.1 397.5 L544.9 398.1 L547.8 398.8 L550.6 399.5 L553.4 398.2 L556.2 397.9 L559.1 397.8 L561.9 397.9 L564.7 398.1 L567.5 398.3 L570.4 398.7 L573.2 399.1 L576.0 399.5 L578.8 400.0 L581.7 400.5 L584.5 401.1 L587.3 401.8 L590.1 402.4 L593.0 403.2 L595.8 403.9 L598.6 404.8 L601.5 405.7 L604.3 406.6 L607.1 407.6 L609.9 408.7 L612.8 409.9 L615.6 411.3 L618.4 413.0 L621.2 415.5 L624.1 417.2 L626.9 417.9 L629.7 418.6 L632.5 419.3 L635.4 419.9 L638.2 420.6 L641.0 421.3 L643.8 422.0 L646.7 422.7" stroke="#e07474" stroke-width="1.2" fill="none" shape-rendering="crispEdges"/>
<path d="M394.2 359.8 L397.0 360.4 L399.8 361.1 L402.6 361.8 L405.4 362.5 L408.3 363.1 L411.1 363.8 L413.9 364.5 L416.7 365.2 L419.5 365.9 L422.4 366.5 L425.2 367.2 L428.0 367.9 L430.8 365.9 L433.6 365.6 L436.5 365.5 L439.3 365.6 L442.1 365.8 L444.9 366.1 L447.7 366.5 L450.5 367.0 L453.4 367.5 L456.2 368.1 L459.0 368.7 L461.8 369.4 L464.6 370.1 L467.5 370.9 L470.3 371.7 L473.1 372.6 L475.9 373.5 L478.7 374.5 L481.6 375.6 L484.4 376.7 L487.2 378.0 L490.0 379.4 L492.8 381.0 L495.7 383.9 L498.5 384.8 L501.3 385.5 L504.1 386.2 L506.9 386.8 L509.7 387.5 L512.6 388.2 L515.4 388.9 L518.2 389.6 L521.0 390.2 L523.8 390.9 L526.7 391.6 L529.5 392.3 L532.3 392.9 L535.1 393.6 L537.9 394.3 L540.8 395.0 L543.6 395.6 L546.4 396.3 L549.2 397.0 L552.0 397.7 L554.9 398.4 L557.7 397.5 L560.5 396.8 L563.3 396.7 L566.1 396.7 L568.9 396.9 L571.8 397.1 L574.6 397.4 L577.4 397.8 L580.2 398.3 L583.0 398.8 L585.9 399.3 L588.7 399.9 L591.5 400.6 L594.3 401.3 L597.1 402.0 L600.0 402.8 L602.8 403.6 L605.6 404.6 L608.4 405.5 L611.2 406.6 L614.1 407.8 L616.9 409.1 L619.7 410.6 L622.5 412.6 L625.3 415.3 L628.1 416.0 L631.0 416.6 L633.8 417.3 L636.6 418.0 L639.4 418.7 L642.2 419.3 L645.1 420.0 L647.9 420.7" stroke="#58a8a8" stroke-width="1" fill="none" shape-rendering="crispEdges" stroke-dasharray="2 3"/>
<path d="M396.0 358.2 L398.8 358.9 L401.6 359.5 L404.4 360.2 L407.2 360.9 L410.1 361.5 L412.9 362.2 L415.7 362.9 L418.5 363.6 L421.3 364.2 L424.1 364.9 L426.9 365.6 L429.7 364.9 L432.6 363.9 L435.4 363.6 L438.2 363.6 L441.0 363.8 L443.8 364.0 L446.6 364.4 L449.4 364.8 L452.2 365.3 L455.1 365.8 L457.9 366.4 L460.7 367.1 L463.5 367.8 L466.3 368.5 L469.1 369.3 L471.9 370.2 L474.7 371.1 L477.6 372.0 L480.4 373.1 L483.2 374.2 L486.0 375.5 L488.8 376.9 L491.6 378.5 L494.4 381.7 L497.2 382.4 L500.0 383.1 L502.9 383.7 L505.7 384.4 L508.5 385.1 L511.3 385.8 L514.1 386.4 L516.9 387.1 L519.7 387.8 L522.5 388.5 L525.4 389.1 L528.2 389.8 L531.0 390.5 L533.8 391.1 L536.6 391.8 L539.4 392.5 L542.2 393.2 L545.0 393.8 L547.9 394.5 L550.7 395.2 L553.5 395.9 L556.3 396.5 L559.1 397.2 L561.9 396.3 L564.7 395.6 L567.5 395.4 L570.4 395.4 L573.2 395.6 L576.0 395.8 L578.8 396.1 L581.6 396.5 L584.4 397.0 L587.2 397.5 L590.0 398.1 L592.8 398.7 L595.7 399.3 L598.5 400.1 L601.3 400.8 L604.1 401.7 L606.9 402.6 L609.7 403.5 L612.5 404.5 L615.3 405.7 L618.2 406.9 L621.0 408.4 L623.8 410.1 L626.6 413.3 L629.4 414.0 L632.2 414.7 L635.0 415.4 L637.8 416.0 L640.7 416.7 L643.5 417.4 L646.3 418.1 L649.1 418.7" stroke="#e07474" stroke-width="1.2" fill="none" shape-rendering="crispEdges"/>
<path d="M397.8 356.6 L400.6 357.3 L403.4 357.9 L406.2 358.6 L409.1 359.3 L411.9 359.9 L414.7 360.6 L417.5 361.3 L420.3 362.0 L423.1 362.6 L425.9 363.3 L428.7 364.0 L431.5 362.6 L434.3 361.9 L437.1 361.8 L439.9 361.8 L442.7 362.0 L445.5 362.3 L448.3 362.6 L451.1 363.1 L453.9 363.6 L456.7 364.1 L459.5 364.7 L462.4 365.4 L465.2 366.1 L468.0 366.9 L470.8 367.7 L473.6 368.6 L476.4 369.5 L479.2 370.5 L482.0 371.6 L484.8 372.9 L487.6 374.2 L490.4 375.8 L493.2 378.2 L496.0 380.0 L498.8 380.7 L501.6 381.3 L504.4 382.0 L507.2 382.7 L510.0 383.3 L512.8 384.0 L515.7 384.7 L518.5 385.3 L521.3 386.0 L524.1 386.7 L526.9 387.4 L529.7 388.0 L532.5 388.7 L535.3 389.4 L538.1 390.0 L540.9 390.7 L543.7 391.4 L546.5 392.0 L549.3 392.7 L552.1 393.4 L554.9 394.0 L557.7 394.7 L560.5 395.4 L563.3 396.0 L566.1 394.7 L569.0 394.1 L571.8 394.0 L574.6 394.0 L577.4 394.2 L580.2 394.5 L583.0 394.8 L585.8 395.2 L588.6 395.7 L591.4 396.2 L594.2 396.8 L597.0 397.5 L599.8 398.2 L602.6 398.9 L605.4 399.7 L608.2 400.6 L611.0 401.5 L613.8 402.5 L616.6 403.6 L619.4 404.8 L622.3 406.2 L625.1 407.8 L627.9 410.4 L630.7 412.1 L633.5 412.7 L636.3 413.4 L639.1 414.1 L641.9 414.8 L644.7 415.4 L647.5 416.1 L650.3 416.8" stroke="#58a8a8" stroke-width="1" fill="none" shape-rendering="crispEdges" stroke-dasharray="2 3"/>
<path d="M399.7 355.0 L402.5 355.7 L405.3 356.4 L408.1 357.0 L410.9 357.7 L413.7 358.4 L416.5 359.0 L419.3 359.7 L422.1 360.3 L424.9 361.0 L427.6 361.7 L430.4 362.3 L433.2 360.6 L436.0 360.1 L438.8 359.9 L441.6 360.0 L444.4 360.2 L447.2 360.5 L450.0 360.9 L452.8 361.3 L455.6 361.8 L458.4 362.4 L461.2 363.0 L464.0 363.7 L466.8 364.4 L469.6 365.2 L472.4 366.1 L475.2 367.0 L478.0 368.0 L480.8 369.0 L483.6 370.2 L486.4 371.5 L489.2 373.0 L492.0 374.9 L494.8 377.6 L497.6 378.3 L500.4 378.9 L503.2 379.6 L506.0 380.3 L508.8 380.9 L511.6 381.6 L514.4 382.3 L517.2 382.9 L520.0 383.6 L522.8 384.2 L525.6 384.9 L528.4 385.6 L531.2 386.2 L534.0 386.9 L536.8 387.6 L539.6 388.2 L542.4 388.9 L545.2 389.6 L548.0 390.2 L550.8 390.9 L553.6 391.5 L556.4 392.2 L559.2 392.9 L562.0 393.5 L564.8 394.2 L567.6 394.9 L570.4 392.9 L573.2 392.5 L576.0 392.5 L578.8 392.5 L581.6 392.8 L584.4 393.1 L587.2 393.4 L590.0 393.9 L592.8 394.4 L595.5 395.0 L598.3 395.6 L601.1 396.2 L603.9 397.0 L606.7 397.8 L609.5 398.6 L612.3 399.5 L615.1 400.5 L617.9 401.6 L620.7 402.7 L623.5 404.1 L626.3 405.6 L629.1 407.8 L631.9 410.1 L634.7 410.8 L637.5 411.5 L640.3 412.1 L643.1 412.8 L645.9 413.5 L648.7 414.1 L651.5 414.8" stroke="#e07474" stroke-width="1.2" fill="none" shape-rendering="crispEdges"/>
<path d="M401.5 353.5 L404.3 354.1 L407.1 354.8 L409.9 355.4 L412.7 356.1 L415.5 356.8 L418.2 357.4 L421.0 358.1 L423.8 358.7 L426.6 359.4 L429.4 360.1 L432.2 360.7 L435.0 358.7 L437.8 358.3 L440.6 358.2 L443.4 358.3 L446.2 358.5 L449.0 358.8 L451.7 359.2 L454.5 359.6 L457.3 360.2 L460.1 360.7 L462.9 361.4 L465.7 362.1 L468.5 362.8 L471.3 363.6 L474.1 364.5 L476.9 365.4 L479.7 366.4 L482.5 367.5 L485.2 368.7 L488.0 370.1 L490.8 371.8 L493.6 374.5 L496.4 375.9 L499.2 376.5 L502.0 377.2 L504.8 377.9 L507.6 378.5 L510.4 379.2 L513.2 379.8 L515.9 380.5 L518.7 381.2 L521.5 381.8 L524.3 382.5 L527.1 383.1 L529.9 383.8 L532.7 384.5 L535.5 385.1 L538.3 385.8 L541.1 386.4 L543.9 387.1 L546.7 387.8 L549.4 388.4 L552.2 389.1 L555.0 389.7 L557.8 390.4 L560.6 391.1 L563.4 391.7 L566.2 392.4 L569.0 393.0 L571.8 391.8 L574.6 391.1 L577.4 390.9 L580.2 390.9 L582.9 391.1 L585.7 391.3 L588.5 391.7 L591.3 392.1 L594.1 392.6 L596.9 393.1 L599.7 393.7 L602.5 394.3 L605.3 395.1 L608.1 395.8 L610.9 396.6 L613.6 397.5 L616.4 398.5 L619.2 399.5 L622.0 400.7 L624.8 402.0 L627.6 403.5 L630.4 405.5 L633.2 408.2 L636.0 408.9 L638.8 409.5 L641.6 410.2 L644.4 410.8 L647.1 411.5 L649.9 412.2 L652.7 412.8" stroke="#58a8a8" stroke-width="1" fill="none" shape-rendering="crispEdges" stroke-dasharray="2 3"/>
<path d="M403.3 351.9 L406.1 352.5 L408.9 353.2 L411.7 353.8 L414.5 354.5 L417.3 355.2 L420.0 355.8 L422.8 356.5 L425.6 357.1 L428.4 357.8 L431.2 358.4 L434.0 358.3 L436.7 356.9 L439.5 356.5 L442.3 356.5 L445.1 356.6 L447.9 356.8 L450.7 357.1 L453.5 357.5 L456.2 357.9 L459.0 358.5 L461.8 359.1 L464.6 359.7 L467.4 360.4 L470.2 361.1 L472.9 362.0 L475.7 362.8 L478.5 363.8 L481.3 364.8 L484.1 365.9 L486.9 367.2 L489.7 368.6 L492.4 370.5 L495.2 373.5 L498.0 374.2 L500.8 374.8 L503.6 375.5 L506.4 376.1 L509.1 376.8 L511.9 377.4 L514.7 378.1 L517.5 378.7 L520.3 379.4 L523.1 380.1 L525.9 380.7 L528.6 381.4 L531.4 382.0 L534.2 382.7 L537.0 383.3 L539.8 384.0 L542.6 384.6 L545.3 385.3 L548.1 386.0 L550.9 386.6 L553.7 387.3 L556.5 387.9 L559.3 388.6 L562.1 389.2 L564.8 389.9 L567.6 390.5 L570.4 391.2 L573.2 390.8 L576.0 389.6 L578.8 389.3 L581.5 389.2 L584.3 389.3 L587.1 389.5 L589.9 389.9 L592.7 390.3 L595.5 390.7 L598.2 391.2 L601.0 391.8 L603.8 392.5 L606.6 393.1 L609.4 393.9 L612.2 394.7 L615.0 395.6 L617.7 396.5 L620.5 397.6 L623.3 398.7 L626.1 400.0 L628.9 401.4 L631.7 403.3 L634.4 406.3 L637.2 406.9 L640.0 407.6 L642.8 408.2 L645.6 408.9 L648.4 409.5 L651.2 410.2 L653.9 410.8" stroke="#e07474" stroke-width="1.2" fill="none" shape-rendering="crispEdges"/>
<path d="M405.2 350.3 L407.9 351.0 L410.7 351.6 L413.5 352.3 L416.3 352.9 L419.1 353.6 L421.8 354.2 L424.6 354.9 L427.4 355.5 L430.2 356.2 L432.9 356.8 L435.7 356.3 L438.5 355.1 L441.3 354.8 L444.1 354.8 L446.8 354.9 L449.6 355.1 L452.4 355.4 L455.2 355.8 L457.9 356.3 L460.7 356.8 L463.5 357.4 L466.3 358.0 L469.1 358.7 L471.8 359.5 L474.6 360.3 L477.4 361.2 L480.2 362.1 L482.9 363.2 L485.7 364.3 L488.5 365.6 L491.3 367.1 L494.1 369.1 L496.8 371.8 L499.6 372.4 L502.4 373.1 L505.2 373.7 L507.9 374.4 L510.7 375.0 L513.5 375.7 L516.3 376.3 L519.0 377.0 L521.8 377.6 L524.6 378.3 L527.4 378.9 L530.2 379.6 L532.9 380.2 L535.7 380.9 L538.5 381.5 L541.3 382.2 L544.0 382.8 L546.8 383.5 L549.6 384.1 L552.4 384.8 L555.2 385.4 L557.9 386.1 L560.7 386.8 L563.5 387.4 L566.3 388.1 L569.0 388.7 L571.8 389.4 L574.6 390.0 L577.4 388.0 L580.2 387.6 L582.9 387.5 L585.7 387.5 L588.5 387.7 L591.3 388.0 L594.0 388.4 L596.8 388.9 L599.6 389.4 L602.4 389.9 L605.2 390.6 L607.9 391.2 L610.7 392.0 L613.5 392.8 L616.3 393.6 L619.0 394.6 L621.8 395.6 L624.6 396.7 L627.4 398.0 L630.2 399.4 L632.9 401.2 L635.7 404.3 L638.5 405.0 L641.3 405.6 L644.0 406.3 L646.8 406.9 L649.6 407.6 L652.4 408.2 L655.2 408.9" stroke="#58a8a8" stroke-width="1" fill="none" shape-rendering="crispEdges" stroke-dasharray="2 3"/>
<path d="M407.0 348.7 L409.8 349.4 L412.5 350.0 L415.3 350.7 L418.1 351.3 L420.9 352.0 L423.6 352.6 L426.4 353.3 L429.2 353.9 L431.9 354.5 L434.7 355.2 L437.5 354.6 L440.2 353.5 L443.0 353.1 L445.8 353.1 L448.6 353.2 L451.3 353.4 L454.1 353.7 L456.9 354.1 L459.6 354.6 L462.4 355.1 L465.2 355.7 L468.0 356.4 L470.7 357.1 L473.5 357.8 L476.3 358.6 L479.0 359.5 L481.8 360.5 L484.6 361.5 L487.4 362.7 L490.1 364.0 L492.9 365.5 L495.7 367.6 L498.4 370.1 L501.2 370.7 L504.0 371.4 L506.7 372.0 L509.5 372.6 L512.3 373.3 L515.1 373.9 L517.8 374.6 L520.6 375.2 L523.4 375.9 L526.1 376.5 L528.9 377.2 L531.7 377.8 L534.5 378.5 L537.2 379.1 L540.0 379.8 L542.8 380.4 L545.5 381.1 L548.3 381.7 L551.1 382.3 L553.8 383.0 L556.6 383.6 L559.4 384.3 L562.2 384.9 L564.9 385.6 L567.7 386.2 L570.5 386.9 L573.2 387.5 L576.0 388.2 L578.8 386.3 L581.6 385.8 L584.3 385.7 L587.1 385.7 L589.9 385.9 L592.6 386.2 L595.4 386.6 L598.2 387.0 L600.9 387.5 L603.7 388.1 L606.5 388.7 L609.3 389.3 L612.0 390.1 L614.8 390.9 L617.6 391.7 L620.3 392.7 L623.1 393.7 L625.9 394.8 L628.7 396.0 L631.4 397.4 L634.2 399.2 L637.0 402.4 L639.7 403.0 L642.5 403.7 L645.3 404.3 L648.1 405.0 L650.8 405.6 L653.6 406.3 L656.4 406.9" stroke="#e07474" stroke-width="1.2" fill="none" shape-rendering="crispEdges"/>
<path d="M408.8 347.2 L411.6 347.8 L414.4 348.4 L417.1 349.1 L419.9 349.7 L422.7 350.4 L425.4 351.0 L428.2 351.6 L430.9 352.3 L433.7 352.9 L436.5 353.6 L439.2 353.0 L442.0 351.8 L444.8 351.5 L447.5 351.5 L450.3 351.6 L453.1 351.8 L455.8 352.1 L458.6 352.5 L461.3 352.9 L464.1 353.5 L466.9 354.0 L469.6 354.7 L472.4 355.4 L475.2 356.1 L477.9 356.9 L480.7 357.8 L483.5 358.8 L486.2 359.8 L489.0 361.0 L491.7 362.3 L494.5 363.8 L497.3 365.9 L500.0 368.3 L502.8 369.0 L505.6 369.6 L508.3 370.3 L511.1 370.9 L513.9 371.6 L516.6 372.2 L519.4 372.8 L522.1 373.5 L524.9 374.1 L527.7 374.8 L530.4 375.4 L533.2 376.0 L536.0 376.7 L538.7 377.3 L541.5 378.0 L544.3 378.6 L547.0 379.3 L549.8 379.9 L552.6 380.5 L555.3 381.2 L558.1 381.8 L560.8 382.5 L563.6 383.1 L566.4 383.8 L569.1 384.4 L571.9 385.0 L574.7 385.7 L577.4 386.3 L580.2 384.4 L583.0 383.9 L585.7 383.8 L588.5 383.9 L591.2 384.0 L594.0 384.3 L596.8 384.7 L599.5 385.1 L602.3 385.6 L605.1 386.2 L607.8 386.8 L610.6 387.5 L613.4 388.2 L616.1 389.0 L618.9 389.8 L621.6 390.7 L624.4 391.8 L627.2 392.9 L629.9 394.1 L632.7 395.5 L635.5 397.3 L638.2 400.4 L641.0 401.1 L643.8 401.7 L646.5 402.4 L649.3 403.0 L652.0 403.7 L654.8 404.3 L657.6 404.9" stroke="#58a8a8" stroke-width="1" fill="none" shape-rendering="crispEdges" stroke-dasharray="2 3"/>
<path d="M410.7 345.6 L413.4 346.2 L416.2 346.9 L418.9 347.5 L421.7 348.1 L424.5 348.8 L427.2 349.4 L430.0 350.0 L432.7 350.7 L435.5 351.3 L438.2 352.0 L441.0 351.5 L443.7 350.3 L446.5 349.9 L449.3 349.9 L452.0 350.0 L454.8 350.2 L457.5 350.5 L460.3 350.8 L463.0 351.3 L465.8 351.8 L468.6 352.4 L471.3 353.0 L474.1 353.7 L476.8 354.4 L479.6 355.2 L482.3 356.1 L485.1 357.0 L487.9 358.1 L490.6 359.2 L493.4 360.5 L496.1 361.9 L498.9 363.9 L501.6 366.6 L504.4 367.3 L507.2 367.9 L509.9 368.5 L512.7 369.2 L515.4 369.8 L518.2 370.4 L520.9 371.1 L523.7 371.7 L526.5 372.4 L529.2 373.0 L532.0 373.6 L534.7 374.3 L537.5 374.9 L540.2 375.5 L543.0 376.2 L545.8 376.8 L548.5 377.5 L551.3 378.1 L554.0 378.7 L556.8 379.4 L559.5 380.0 L562.3 380.6 L565.1 381.3 L567.8 381.9 L570.6 382.6 L573.3 383.2 L576.1 383.8 L578.8 384.5 L581.6 382.4 L584.4 382.0 L587.1 381.9 L589.9 381.9 L592.6 382.1 L595.4 382.4 L598.1 382.8 L600.9 383.2 L603.6 383.7 L606.4 384.3 L609.2 384.9 L611.9 385.6 L614.7 386.3 L617.4 387.1 L620.2 387.9 L622.9 388.9 L625.7 389.9 L628.5 391.0 L631.2 392.2 L634.0 393.6 L636.7 395.5 L639.5 398.5 L642.2 399.1 L645.0 399.8 L647.8 400.4 L650.5 401.1 L653.3 401.7 L656.0 402.3 L658.8 403.0" stroke="#e07474" stroke-width="1.2" fill="none" shape-rendering="crispEdges"/>
<path d="M412.5 344.0 L415.2 344.6 L418.0 345.3 L420.8 345.9 L423.5 346.5 L426.2 347.2 L429.0 347.8 L431.8 348.4 L434.5 349.1 L437.2 349.7 L440.0 350.3 L442.8 350.4 L445.5 348.8 L448.2 348.4 L451.0 348.3 L453.8 348.4 L456.5 348.6 L459.2 348.9 L462.0 349.2 L464.8 349.7 L467.5 350.2 L470.2 350.7 L473.0 351.3 L475.8 352.0 L478.5 352.7 L481.2 353.5 L484.0 354.4 L486.8 355.3 L489.5 356.3 L492.2 357.4 L495.0 358.6 L497.8 360.0 L500.5 361.8 L503.2 364.9 L506.0 365.5 L508.8 366.2 L511.5 366.8 L514.2 367.4 L517.0 368.1 L519.8 368.7 L522.5 369.3 L525.2 370.0 L528.0 370.6 L530.8 371.2 L533.5 371.9 L536.2 372.5 L539.0 373.1 L541.8 373.8 L544.5 374.4 L547.2 375.0 L550.0 375.7 L552.8 376.3 L555.5 376.9 L558.2 377.6 L561.0 378.2 L563.8 378.8 L566.5 379.5 L569.2 380.1 L572.0 380.7 L574.8 381.4 L577.5 382.0 L580.2 381.4 L583.0 380.3 L585.8 379.9 L588.5 379.9 L591.2 380.0 L594.0 380.2 L596.8 380.5 L599.5 380.9 L602.2 381.3 L605.0 381.8 L607.8 382.4 L610.5 383.0 L613.2 383.7 L616.0 384.4 L618.8 385.2 L621.5 386.1 L624.2 387.0 L627.0 388.0 L629.8 389.1 L632.5 390.4 L635.2 391.8 L638.0 393.7 L640.8 396.6 L643.5 397.2 L646.2 397.8 L649.0 398.5 L651.8 399.1 L654.5 399.7 L657.2 400.4 L660.0 401.0" stroke="#58a8a8" stroke-width="1" fill="none" shape-rendering="crispEdges" stroke-dasharray="2 3"/>
<path d="M414.3 342.4 L417.1 343.1 L419.8 343.7 L422.6 344.3 L425.3 344.9 L428.0 345.6 L430.8 346.2 L433.5 346.8 L436.3 347.5 L439.0 348.1 L441.8 348.7 L444.5 349.3 L447.3 347.4 L450.0 346.9 L452.7 346.8 L455.5 346.8 L458.2 347.0 L461.0 347.3 L463.7 347.6 L466.5 348.0 L469.2 348.5 L471.9 349.1 L474.7 349.7 L477.4 350.3 L480.2 351.0 L482.9 351.8 L485.7 352.6 L488.4 353.5 L491.1 354.5 L493.9 355.5 L496.6 356.7 L499.4 358.0 L502.1 359.6 L504.9 362.0 L507.6 363.8 L510.3 364.4 L513.1 365.1 L515.8 365.7 L518.6 366.3 L521.3 367.0 L524.1 367.6 L526.8 368.2 L529.5 368.8 L532.3 369.5 L535.0 370.1 L537.8 370.7 L540.5 371.4 L543.3 372.0 L546.0 372.6 L548.7 373.2 L551.5 373.9 L554.2 374.5 L557.0 375.1 L559.7 375.8 L562.5 376.4 L565.2 377.0 L567.9 377.6 L570.7 378.3 L573.4 378.9 L576.2 379.5 L578.9 380.2 L581.7 378.7 L584.4 378.0 L587.1 377.8 L589.9 377.9 L592.6 378.0 L595.4 378.2 L598.1 378.6 L600.9 378.9 L603.6 379.4 L606.4 379.9 L609.1 380.5 L611.8 381.1 L614.6 381.8 L617.3 382.5 L620.1 383.3 L622.8 384.2 L625.6 385.1 L628.3 386.1 L631.0 387.3 L633.8 388.5 L636.5 390.0 L639.3 392.0 L642.0 394.6 L644.8 395.3 L647.5 395.9 L650.2 396.5 L653.0 397.1 L655.7 397.8 L658.5 398.4 L661.2 399.0" stroke="#e07474" stroke-width="1.2" fill="none" shape-rendering="crispEdges"/>
<path d="M416.2 340.8 L418.9 341.5 L421.6 342.1 L424.4 342.7 L427.1 343.3 L429.8 344.0 L432.6 344.6 L435.3 345.2 L438.1 345.8 L440.8 346.5 L443.5 347.1 L446.3 347.7 L449.0 346.0 L451.7 345.4 L454.5 345.3 L457.2 345.3 L459.9 345.4 L462.7 345.7 L465.4 346.0 L468.2 346.4 L470.9 346.9 L473.6 347.4 L476.4 348.0 L479.1 348.6 L481.8 349.3 L484.6 350.1 L487.3 350.9 L490.0 351.7 L492.8 352.6 L495.5 353.7 L498.3 354.8 L501.0 356.0 L503.7 357.4 L506.5 359.2 L509.2 362.1 L511.9 362.7 L514.7 363.3 L517.4 364.0 L520.1 364.6 L522.9 365.2 L525.6 365.8 L528.4 366.5 L531.1 367.1 L533.8 367.7 L536.6 368.3 L539.3 369.0 L542.0 369.6 L544.8 370.2 L547.5 370.8 L550.2 371.5 L553.0 372.1 L555.7 372.7 L558.4 373.3 L561.2 374.0 L563.9 374.6 L566.7 375.2 L569.4 375.8 L572.1 376.4 L574.9 377.1 L577.6 377.7 L580.3 377.4 L583.1 376.1 L585.8 375.8 L588.5 375.7 L591.3 375.8 L594.0 376.0 L596.8 376.2 L599.5 376.6 L602.2 377.0 L605.0 377.5 L607.7 378.0 L610.4 378.6 L613.2 379.2 L615.9 379.9 L618.6 380.7 L621.4 381.5 L624.1 382.3 L626.9 383.3 L629.6 384.3 L632.3 385.5 L635.1 386.8 L637.8 388.3 L640.5 390.5 L643.3 392.7 L646.0 393.3 L648.7 393.9 L651.5 394.6 L654.2 395.2 L657.0 395.8 L659.7 396.4 L662.4 397.1" stroke="#58a8a8" stroke-width="1" fill="none" shape-rendering="crispEdges" stroke-dasharray="2 3"/>
<path d="M418.0 339.3 L420.7 339.9 L423.5 340.5 L426.2 341.1 L428.9 341.8 L431.6 342.4 L434.4 343.0 L437.1 343.6 L439.8 344.2 L442.6 344.9 L445.3 345.5 L448.0 346.1 L450.8 344.8 L453.5 344.1 L456.2 343.8 L458.9 343.8 L461.7 343.9 L464.4 344.1 L467.1 344.4 L469.9 344.8 L472.6 345.3 L475.3 345.8 L478.0 346.3 L480.8 346.9 L483.5 347.6 L486.2 348.3 L489.0 349.1 L491.7 349.9 L494.4 350.8 L497.1 351.8 L499.9 352.8 L502.6 353.9 L505.3 355.2 L508.1 356.7 L510.8 358.7 L513.5 361.0 L516.3 361.6 L519.0 362.2 L521.7 362.8 L524.4 363.5 L527.2 364.1 L529.9 364.7 L532.6 365.3 L535.4 365.9 L538.1 366.6 L540.8 367.2 L543.5 367.8 L546.3 368.4 L549.0 369.0 L551.7 369.7 L554.5 370.3 L557.2 370.9 L559.9 371.5 L562.7 372.1 L565.4 372.8 L568.1 373.4 L570.8 374.0 L573.6 374.6 L576.3 375.2 L579.0 375.9 L581.8 374.2 L584.5 373.7 L587.2 373.5 L589.9 373.6 L592.7 373.7 L595.4 373.9 L598.1 374.3 L600.9 374.6 L603.6 375.1 L606.3 375.6 L609.1 376.1 L611.8 376.7 L614.5 377.4 L617.2 378.1 L620.0 378.8 L622.7 379.6 L625.4 380.5 L628.2 381.5 L630.9 382.5 L633.6 383.7 L636.3 385.1 L639.1 386.7 L641.8 389.5 L644.5 390.7 L647.3 391.4 L650.0 392.0 L652.7 392.6 L655.4 393.2 L658.2 393.9 L660.9 394.5 L663.6 395.1" stroke="#e07474" stroke-width="1.2" fill="none" shape-rendering="crispEdges"/>
<path d="M419.8 337.7 L422.6 338.3 L425.3 338.9 L428.0 339.5 L430.7 340.2 L433.4 340.8 L436.2 341.4 L438.9 342.0 L441.6 342.6 L444.3 343.2 L447.1 343.9 L449.8 344.5 L452.5 344.0 L455.2 342.8 L457.9 342.4 L460.7 342.3 L463.4 342.4 L466.1 342.6 L468.8 342.9 L471.6 343.2 L474.3 343.7 L477.0 344.1 L479.7 344.7 L482.4 345.3 L485.2 345.9 L487.9 346.6 L490.6 347.3 L493.3 348.1 L496.1 348.9 L498.8 349.9 L501.5 350.8 L504.2 351.9 L506.9 353.0 L509.7 354.3 L512.4 355.8 L515.1 358.0 L517.8 359.9 L520.6 360.5 L523.3 361.1 L526.0 361.7 L528.7 362.3 L531.5 362.9 L534.2 363.6 L536.9 364.2 L539.6 364.8 L542.3 365.4 L545.1 366.0 L547.8 366.6 L550.5 367.3 L553.2 367.9 L556.0 368.5 L558.7 369.1 L561.4 369.7 L564.1 370.3 L566.8 371.0 L569.6 371.6 L572.3 372.2 L575.0 372.8 L577.7 373.4 L580.5 372.0 L583.2 371.4 L585.9 371.3 L588.6 371.3 L591.3 371.4 L594.1 371.6 L596.8 371.9 L599.5 372.3 L602.2 372.7 L605.0 373.1 L607.7 373.6 L610.4 374.2 L613.1 374.8 L615.8 375.5 L618.6 376.2 L621.3 377.0 L624.0 377.8 L626.7 378.7 L629.5 379.7 L632.2 380.8 L634.9 382.0 L637.6 383.4 L640.3 385.2 L643.1 388.2 L645.8 388.8 L648.5 389.4 L651.2 390.0 L654.0 390.7 L656.7 391.3 L659.4 391.9 L662.1 392.5 L664.8 393.1" stroke="#58a8a8" stroke-width="1" fill="none" shape-rendering="crispEdges" stroke-dasharray="2 3"/>
<path d="M421.7 336.1 L424.4 336.7 L427.1 337.3 L429.8 338.0 L432.5 338.6 L435.2 339.2 L438.0 339.8 L440.7 340.4 L443.4 341.0 L446.1 341.6 L448.8 342.2 L451.5 342.8 L454.3 343.5 L457.0 341.6 L459.7 341.1 L462.4 340.9 L465.1 341.0 L467.8 341.1 L470.5 341.4 L473.3 341.7 L476.0 342.1 L478.7 342.5 L481.4 343.0 L484.1 343.6 L486.8 344.2 L489.6 344.9 L492.3 345.6 L495.0 346.3 L497.7 347.1 L500.4 348.0 L503.1 348.9 L505.8 349.8 L508.6 350.9 L511.3 352.0 L514.0 353.3 L516.7 354.7 L519.4 356.7 L522.1 358.7 L524.9 359.4 L527.6 360.0 L530.3 360.6 L533.0 361.2 L535.7 361.8 L538.4 362.4 L541.1 363.0 L543.9 363.6 L546.6 364.2 L549.3 364.9 L552.0 365.5 L554.7 366.1 L557.4 366.7 L560.2 367.3 L562.9 367.9 L565.6 368.5 L568.3 369.1 L571.0 369.8 L573.7 370.4 L576.4 371.0 L579.2 369.5 L581.9 369.0 L584.6 368.9 L587.3 368.9 L590.0 369.0 L592.7 369.2 L595.5 369.5 L598.2 369.9 L600.9 370.3 L603.6 370.7 L606.3 371.2 L609.0 371.7 L611.8 372.3 L614.5 373.0 L617.2 373.6 L619.9 374.4 L622.6 375.2 L625.3 376.0 L628.0 377.0 L630.8 378.0 L633.5 379.1 L636.2 380.3 L638.9 381.8 L641.6 383.9 L644.3 386.3 L647.1 386.9 L649.8 387.5 L652.5 388.1 L655.2 388.7 L657.9 389.3 L660.6 389.9 L663.3 390.5 L666.1 391.2" stroke="#e07474" stroke-width="1.2" fill="none" shape-rendering="crispEdges"/>
<path d="M423.5 334.5 L426.2 335.2 L428.9 335.8 L431.6 336.4 L434.3 337.0 L437.0 337.6 L439.8 338.2 L442.5 338.8 L445.2 339.4 L447.9 340.0 L450.6 340.6 L453.3 341.2 L456.0 341.8 L458.7 340.7 L461.4 339.9 L464.1 339.6 L466.8 339.6 L469.5 339.7 L472.3 339.9 L475.0 340.2 L477.7 340.5 L480.4 340.9 L483.1 341.4 L485.8 341.9 L488.5 342.5 L491.2 343.1 L493.9 343.8 L496.6 344.5 L499.3 345.3 L502.0 346.1 L504.8 346.9 L507.5 347.8 L510.2 348.8 L512.9 349.8 L515.6 350.9 L518.3 352.1 L521.0 353.4 L523.7 355.1 L526.4 357.6 L529.1 358.2 L531.8 358.8 L534.6 359.4 L537.3 360.0 L540.0 360.6 L542.7 361.3 L545.4 361.9 L548.1 362.5 L550.8 363.1 L553.5 363.7 L556.2 364.3 L558.9 364.9 L561.6 365.5 L564.3 366.1 L567.1 366.7 L569.8 367.3 L572.5 367.9 L575.2 367.7 L577.9 366.7 L580.6 366.5 L583.3 366.4 L586.0 366.5 L588.7 366.6 L591.4 366.8 L594.1 367.1 L596.8 367.4 L599.6 367.8 L602.3 368.3 L605.0 368.7 L607.7 369.3 L610.4 369.8 L613.1 370.4 L615.8 371.1 L618.5 371.8 L621.2 372.6 L623.9 373.4 L626.6 374.3 L629.4 375.2 L632.1 376.3 L634.8 377.4 L637.5 378.8 L640.2 380.4 L642.9 383.4 L645.6 384.3 L648.3 384.9 L651.0 385.5 L653.7 386.1 L656.4 386.8 L659.1 387.4 L661.9 388.0 L664.6 388.6 L667.3 389.2" stroke="#58a8a8" stroke-width="1" fill="none" shape-rendering="crispEdges" stroke-dasharray="2 3"/>
<path d="M425.3 333.0 L428.0 333.6 L430.7 334.2 L433.4 334.8 L436.1 335.4 L438.8 336.0 L441.5 336.6 L444.2 337.2 L446.9 337.8 L449.6 338.4 L452.4 339.0 L455.1 339.6 L457.8 340.2 L460.5 340.8 L463.2 338.8 L465.9 338.3 L468.6 338.2 L471.3 338.2 L474.0 338.4 L476.7 338.7 L479.4 339.0 L482.1 339.4 L484.8 339.8 L487.5 340.3 L490.2 340.9 L492.9 341.4 L495.6 342.1 L498.3 342.7 L501.0 343.4 L503.7 344.2 L506.4 345.0 L509.1 345.8 L511.8 346.7 L514.5 347.6 L517.2 348.6 L519.9 349.6 L522.6 350.7 L525.3 351.9 L528.0 353.3 L530.7 354.9 L533.4 357.1 L536.1 357.7 L538.8 358.3 L541.5 358.9 L544.2 359.5 L546.9 360.1 L549.6 360.7 L552.3 361.3 L555.0 361.9 L557.7 362.5 L560.4 363.1 L563.1 363.7 L565.8 364.3 L568.5 364.9 L571.2 365.2 L573.9 364.1 L576.6 363.8 L579.3 363.7 L582.0 363.8 L584.7 363.9 L587.4 364.1 L590.1 364.4 L592.8 364.7 L595.5 365.0 L598.2 365.4 L600.9 365.8 L603.6 366.3 L606.3 366.8 L609.0 367.4 L611.7 368.0 L614.5 368.6 L617.2 369.3 L619.9 370.0 L622.6 370.8 L625.3 371.6 L628.0 372.5 L630.7 373.5 L633.4 374.6 L636.1 375.8 L638.8 377.3 L641.5 379.1 L644.2 381.8 L646.9 382.4 L649.6 383.0 L652.3 383.6 L655.0 384.2 L657.7 384.8 L660.4 385.4 L663.1 386.0 L665.8 386.6 L668.5 387.2" stroke="#e07474" stroke-width="1.2" fill="none" shape-rendering="crispEdges"/>
<path d="M427.2 331.4 L429.9 332.0 L432.6 332.6 L435.3 333.2 L437.9 333.8 L440.6 334.4 L443.3 335.0 L446.0 335.6 L448.7 336.2 L451.4 336.8 L454.1 337.4 L456.8 338.0 L459.5 338.6 L462.2 339.2 L464.9 337.9 L467.6 337.2 L470.3 336.9 L473.0 336.9 L475.7 337.0 L478.4 337.2 L481.1 337.5 L483.8 337.8 L486.5 338.2 L489.1 338.7 L491.8 339.2 L494.5 339.8 L497.2 340.4 L499.9 341.0 L502.6 341.6 L505.3 342.4 L508.0 343.1 L510.7 343.9 L513.4 344.7 L516.1 345.5 L518.8 346.4 L521.5 347.3 L524.2 348.3 L526.9 349.3 L529.6 350.3 L532.3 351.4 L535.0 352.6 L537.7 353.8 L540.3 355.3 L543.0 357.1 L545.7 357.7 L548.4 358.3 L551.1 358.9 L553.8 359.5 L556.5 360.1 L559.2 360.7 L561.9 361.3 L564.6 361.6 L567.3 360.9 L570.0 360.7 L572.7 360.7 L575.4 360.8 L578.1 360.9 L580.8 361.1 L583.5 361.3 L586.2 361.6 L588.9 361.9 L591.5 362.2 L594.2 362.5 L596.9 362.9 L599.6 363.4 L602.3 363.8 L605.0 364.4 L607.7 364.9 L610.4 365.5 L613.1 366.1 L615.8 366.8 L618.5 367.5 L621.2 368.2 L623.9 369.0 L626.6 369.9 L629.3 370.9 L632.0 371.9 L634.7 373.0 L637.4 374.3 L640.1 375.9 L642.7 378.6 L645.4 379.9 L648.1 380.5 L650.8 381.1 L653.5 381.7 L656.2 382.3 L658.9 382.8 L661.6 383.4 L664.3 384.0 L667.0 384.6 L669.7 385.2" stroke="#58a8a8" stroke-width="1" fill="none" shape-rendering="crispEdges" stroke-dasharray="4 2"/>
<path d="M429.0 329.8 L431.7 330.4 L434.4 331.0 L437.1 331.6 L439.8 332.2 L442.4 332.8 L445.1 333.4 L447.8 334.0 L450.5 334.6 L453.2 335.2 L455.9 335.8 L458.6 336.4 L461.3 336.9 L463.9 337.5 L466.6 338.1 L469.3 336.2 L472.0 335.8 L474.7 335.6 L477.4 335.7 L480.1 335.8 L482.8 336.0 L485.4 336.3 L488.1 336.7 L490.8 337.1 L493.5 337.6 L496.2 338.1 L498.9 338.7 L501.6 339.3 L504.3 339.9 L506.9 340.5 L509.6 341.2 L512.3 342.0 L515.0 342.7 L517.7 343.5 L520.4 344.3 L523.1 345.1 L525.8 346.0 L528.5 346.9 L531.1 347.8 L533.8 348.7 L536.5 349.6 L539.2 350.6 L541.9 351.5 L544.6 352.4 L547.3 353.3 L550.0 354.1 L552.6 354.8 L555.3 355.4 L558.0 355.9 L560.7 356.4 L563.4 356.7 L566.1 357.0 L568.8 357.3 L571.5 357.6 L574.1 357.8 L576.8 358.1 L579.5 358.4 L582.2 358.6 L584.9 359.0 L587.6 359.3 L590.3 359.7 L593.0 360.0 L595.6 360.5 L598.3 360.9 L601.0 361.4 L603.7 361.9 L606.4 362.4 L609.1 363.0 L611.8 363.6 L614.5 364.3 L617.2 365.0 L619.8 365.7 L622.5 366.5 L625.2 367.3 L627.9 368.2 L630.6 369.2 L633.3 370.3 L636.0 371.5 L638.7 373.0 L641.3 374.9 L644.0 377.3 L646.7 377.9 L649.4 378.5 L652.1 379.1 L654.8 379.7 L657.5 380.3 L660.2 380.9 L662.8 381.5 L665.5 382.1 L668.2 382.7 L670.9 383.3" stroke="#e07474" stroke-width="1.2" fill="none" shape-rendering="crispEdges"/>
<path d="M430.8 328.2 L433.5 328.8 L436.2 329.4 L438.9 330.0 L441.6 330.6 L444.2 331.2 L446.9 331.8 L449.6 332.4 L452.3 333.0 L455.0 333.5 L457.6 334.1 L460.3 334.7 L463.0 335.3 L465.7 335.9 L468.4 336.5 L471.0 335.7 L473.7 334.8 L476.4 334.4 L479.1 334.4 L481.8 334.5 L484.5 334.6 L487.1 334.9 L489.8 335.2 L492.5 335.6 L495.2 336.0 L497.9 336.5 L500.5 337.0 L503.2 337.6 L505.9 338.2 L508.6 338.8 L511.3 339.4 L513.9 340.1 L516.6 340.8 L519.3 341.5 L522.0 342.3 L524.7 343.0 L527.3 343.8 L530.0 344.6 L532.7 345.4 L535.4 346.2 L538.1 347.1 L540.8 347.9 L543.4 348.7 L546.1 349.4 L548.8 350.2 L551.5 350.9 L554.2 351.5 L556.8 352.1 L559.5 352.7 L562.2 353.2 L564.9 353.7 L567.6 354.1 L570.2 354.5 L572.9 354.9 L575.6 355.2 L578.3 355.6 L581.0 355.9 L583.6 356.3 L586.3 356.7 L589.0 357.1 L591.7 357.5 L594.4 358.0 L597.1 358.4 L599.7 358.9 L602.4 359.4 L605.1 360.0 L607.8 360.6 L610.5 361.2 L613.1 361.8 L615.8 362.5 L618.5 363.2 L621.2 364.0 L623.9 364.8 L626.5 365.7 L629.2 366.6 L631.9 367.7 L634.6 368.8 L637.3 370.1 L639.9 371.8 L642.6 374.8 L645.3 375.4 L648.0 376.0 L650.7 376.6 L653.4 377.2 L656.0 377.8 L658.7 378.4 L661.4 378.9 L664.1 379.5 L666.8 380.1 L669.4 380.7 L672.1 381.3" stroke="#58a8a8" stroke-width="1" fill="none" shape-rendering="crispEdges" stroke-dasharray="4 2"/>
<path d="M432.7 326.7 L435.3 327.3 L438.0 327.8 L440.7 328.4 L443.4 329.0 L446.0 329.6 L448.7 330.2 L451.4 330.8 L454.1 331.3 L456.7 331.9 L459.4 332.5 L462.1 333.1 L464.8 333.7 L467.4 334.3 L470.1 334.9 L472.8 335.4 L475.5 334.1 L478.1 333.4 L480.8 333.2 L483.5 333.2 L486.1 333.3 L488.8 333.5 L491.5 333.8 L494.2 334.1 L496.8 334.5 L499.5 334.9 L502.2 335.4 L504.9 335.9 L507.5 336.5 L510.2 337.0 L512.9 337.6 L515.6 338.3 L518.2 338.9 L520.9 339.6 L523.6 340.3 L526.3 341.0 L528.9 341.7 L531.6 342.5 L534.3 343.2 L537.0 344.0 L539.6 344.7 L542.3 345.4 L545.0 346.2 L547.7 346.9 L550.3 347.6 L553.0 348.2 L555.7 348.8 L558.3 349.4 L561.0 350.0 L563.7 350.5 L566.4 351.0 L569.0 351.5 L571.7 352.0 L574.4 352.4 L577.1 352.8 L579.7 353.3 L582.4 353.7 L585.1 354.1 L587.8 354.5 L590.4 355.0 L593.1 355.5 L595.8 355.9 L598.5 356.5 L601.1 357.0 L603.8 357.5 L606.5 358.1 L609.2 358.7 L611.8 359.4 L614.5 360.0 L617.2 360.7 L619.9 361.5 L622.5 362.3 L625.2 363.1 L627.9 364.1 L630.5 365.1 L633.2 366.2 L635.9 367.4 L638.6 368.9 L641.2 371.2 L643.9 372.9 L646.6 373.5 L649.3 374.1 L651.9 374.7 L654.6 375.2 L657.3 375.8 L660.0 376.4 L662.6 377.0 L665.3 377.6 L668.0 378.2 L670.7 378.7 L673.3 379.3" stroke="#e07474" stroke-width="1.2" fill="none" shape-rendering="crispEdges"/>
<path d="M434.5 325.1 L437.2 325.7 L439.8 326.3 L442.5 326.8 L445.2 327.4 L447.8 328.0 L450.5 328.6 L453.2 329.2 L455.8 329.7 L458.5 330.3 L461.2 330.9 L463.8 331.5 L466.5 332.1 L469.2 332.6 L471.8 333.2 L474.5 333.8 L477.2 334.4 L479.8 332.7 L482.5 332.2 L485.2 332.0 L487.8 332.0 L490.5 332.2 L493.2 332.4 L495.8 332.7 L498.5 333.0 L501.2 333.4 L503.8 333.8 L506.5 334.3 L509.2 334.8 L511.8 335.4 L514.5 335.9 L517.2 336.5 L519.8 337.1 L522.5 337.7 L525.2 338.4 L527.9 339.1 L530.5 339.7 L533.2 340.4 L535.9 341.1 L538.5 341.8 L541.2 342.5 L543.9 343.2 L546.5 343.9 L549.2 344.5 L551.9 345.2 L554.5 345.8 L557.2 346.4 L559.9 347.0 L562.5 347.6 L565.2 348.1 L567.9 348.6 L570.5 349.1 L573.2 349.6 L575.9 350.1 L578.5 350.6 L581.2 351.0 L583.9 351.5 L586.5 352.0 L589.2 352.5 L591.9 353.0 L594.5 353.5 L597.2 354.0 L599.9 354.5 L602.5 355.1 L605.2 355.7 L607.9 356.3 L610.5 356.9 L613.2 357.6 L615.9 358.3 L618.5 359.0 L621.2 359.8 L623.9 360.7 L626.5 361.6 L629.2 362.5 L631.9 363.6 L634.5 364.8 L637.2 366.2 L639.9 368.2 L642.5 370.4 L645.2 371.0 L647.9 371.6 L650.5 372.1 L653.2 372.7 L655.9 373.3 L658.5 373.9 L661.2 374.5 L663.9 375.0 L666.5 375.6 L669.2 376.2 L671.9 376.8 L674.5 377.4" stroke="#58a8a8" stroke-width="1" fill="none" shape-rendering="crispEdges" stroke-dasharray="4 2"/>
<path d="M436.3 323.5 L439.0 324.1 L441.7 324.7 L444.3 325.2 L447.0 325.8 L449.6 326.4 L452.3 327.0 L455.0 327.6 L457.6 328.1 L460.3 328.7 L462.9 329.3 L465.6 329.9 L468.3 330.4 L470.9 331.0 L473.6 331.6 L476.2 332.2 L478.9 332.7 L481.6 333.3 L484.2 331.4 L486.9 331.0 L489.5 330.9 L492.2 330.9 L494.9 331.1 L497.5 331.3 L500.2 331.6 L502.8 331.9 L505.5 332.3 L508.2 332.8 L510.8 333.2 L513.5 333.7 L516.1 334.2 L518.8 334.8 L521.5 335.4 L524.1 336.0 L526.8 336.6 L529.4 337.2 L532.1 337.8 L534.8 338.5 L537.4 339.1 L540.1 339.7 L542.7 340.4 L545.4 341.0 L548.1 341.7 L550.7 342.3 L553.4 342.9 L556.0 343.6 L558.7 344.2 L561.4 344.7 L564.0 345.3 L566.7 345.9 L569.3 346.4 L572.0 346.9 L574.7 347.4 L577.3 347.9 L580.0 348.4 L582.6 348.9 L585.3 349.4 L588.0 350.0 L590.6 350.5 L593.3 351.0 L595.9 351.5 L598.6 352.1 L601.3 352.7 L603.9 353.2 L606.6 353.9 L609.3 354.5 L611.9 355.2 L614.6 355.9 L617.2 356.6 L619.9 357.4 L622.6 358.2 L625.2 359.1 L627.9 360.1 L630.5 361.1 L633.2 362.3 L635.9 363.6 L638.5 365.4 L641.2 367.9 L643.8 368.5 L646.5 369.1 L649.2 369.6 L651.8 370.2 L654.5 370.8 L657.1 371.4 L659.8 371.9 L662.5 372.5 L665.1 373.1 L667.8 373.7 L670.4 374.2 L673.1 374.8 L675.8 375.4" stroke="#e07474" stroke-width="1.2" fill="none" shape-rendering="crispEdges"/>
<path d="M438.2 321.9 L440.8 322.5 L443.5 323.1 L446.1 323.7 L448.8 324.2 L451.4 324.8 L454.1 325.4 L456.7 325.9 L459.4 326.5 L462.0 327.1 L464.7 327.7 L467.4 328.2 L470.0 328.8 L472.7 329.4 L475.3 329.9 L478.0 330.5 L480.6 331.1 L483.3 331.7 L485.9 331.8 L488.6 330.3 L491.2 329.9 L493.9 329.8 L496.5 329.9 L499.2 330.0 L501.8 330.3 L504.5 330.5 L507.2 330.9 L509.8 331.3 L512.5 331.7 L515.1 332.1 L517.8 332.6 L520.4 333.1 L523.1 333.7 L525.7 334.2 L528.4 334.8 L531.0 335.4 L533.7 336.0 L536.3 336.6 L539.0 337.2 L541.6 337.8 L544.3 338.4 L547.0 339.0 L549.6 339.6 L552.3 340.3 L554.9 340.9 L557.6 341.5 L560.2 342.0 L562.9 342.6 L565.5 343.2 L568.2 343.7 L570.8 344.3 L573.5 344.8 L576.1 345.4 L578.8 345.9 L581.4 346.4 L584.1 346.9 L586.8 347.5 L589.4 348.0 L592.1 348.5 L594.7 349.1 L597.4 349.7 L600.0 350.2 L602.7 350.8 L605.3 351.5 L608.0 352.1 L610.6 352.8 L613.3 353.5 L615.9 354.2 L618.6 355.0 L621.2 355.8 L623.9 356.7 L626.6 357.6 L629.2 358.7 L631.9 359.8 L634.5 361.1 L637.2 362.8 L639.8 365.4 L642.5 366.0 L645.1 366.6 L647.8 367.1 L650.4 367.7 L653.1 368.3 L655.7 368.8 L658.4 369.4 L661.0 370.0 L663.7 370.6 L666.4 371.1 L669.0 371.7 L671.7 372.3 L674.3 372.9 L677.0 373.4" stroke="#58a8a8" stroke-width="1" fill="none" shape-rendering="crispEdges" stroke-dasharray="4 2"/>
<path d="M440.0 320.4 L442.6 320.9 L445.3 321.5 L447.9 322.1 L450.6 322.6 L453.2 323.2 L455.9 323.8 L458.5 324.3 L461.2 324.9 L463.8 325.5 L466.5 326.0 L469.1 326.6 L471.8 327.2 L474.4 327.7 L477.1 328.3 L479.7 328.9 L482.3 329.4 L485.0 330.0 L487.6 330.6 L490.3 330.8 L492.9 329.3 L495.6 328.9 L498.2 328.8 L500.9 328.9 L503.5 329.0 L506.2 329.2 L508.8 329.5 L511.5 329.9 L514.1 330.2 L516.7 330.6 L519.4 331.1 L522.0 331.6 L524.7 332.0 L527.3 332.6 L530.0 333.1 L532.6 333.6 L535.3 334.2 L537.9 334.8 L540.6 335.3 L543.2 335.9 L545.9 336.5 L548.5 337.1 L551.2 337.7 L553.8 338.3 L556.4 338.9 L559.1 339.5 L561.7 340.0 L564.4 340.6 L567.0 341.2 L569.7 341.7 L572.3 342.3 L575.0 342.8 L577.6 343.4 L580.3 343.9 L582.9 344.5 L585.6 345.0 L588.2 345.6 L590.8 346.1 L593.5 346.7 L596.1 347.3 L598.8 347.9 L601.4 348.5 L604.1 349.1 L606.7 349.8 L609.4 350.4 L612.0 351.1 L614.7 351.9 L617.3 352.6 L620.0 353.5 L622.6 354.3 L625.3 355.3 L627.9 356.3 L630.5 357.4 L633.2 358.7 L635.8 360.4 L638.5 362.9 L641.1 363.5 L643.8 364.1 L646.4 364.6 L649.1 365.2 L651.7 365.8 L654.4 366.3 L657.0 366.9 L659.7 367.5 L662.3 368.0 L664.9 368.6 L667.6 369.2 L670.2 369.8 L672.9 370.3 L675.5 370.9 L678.2 371.5" stroke="#e07474" stroke-width="1.2" fill="none" shape-rendering="crispEdges"/>
<path d="M441.8 318.8 L444.5 319.4 L447.1 319.9 L449.8 320.5 L452.4 321.0 L455.0 321.6 L457.7 322.2 L460.3 322.7 L462.9 323.3 L465.6 323.9 L468.2 324.4 L470.9 325.0 L473.5 325.5 L476.1 326.1 L478.8 326.7 L481.4 327.2 L484.1 327.8 L486.7 328.4 L489.3 328.9 L492.0 329.5 L494.6 330.1 L497.3 328.3 L499.9 327.9 L502.5 327.8 L505.2 327.9 L507.8 328.0 L510.5 328.2 L513.1 328.5 L515.7 328.8 L518.4 329.2 L521.0 329.6 L523.7 330.0 L526.3 330.5 L528.9 331.0 L531.6 331.5 L534.2 332.0 L536.9 332.5 L539.5 333.1 L542.1 333.6 L544.8 334.2 L547.4 334.7 L550.1 335.3 L552.7 335.9 L555.3 336.4 L558.0 337.0 L560.6 337.6 L563.3 338.1 L565.9 338.7 L568.5 339.3 L571.2 339.8 L573.8 340.4 L576.5 340.9 L579.1 341.5 L581.7 342.0 L584.4 342.6 L587.0 343.2 L589.6 343.7 L592.3 344.3 L594.9 344.9 L597.6 345.5 L600.2 346.1 L602.8 346.8 L605.5 347.4 L608.1 348.1 L610.8 348.8 L613.4 349.6 L616.0 350.3 L618.7 351.2 L621.3 352.0 L624.0 353.0 L626.6 354.0 L629.2 355.1 L631.9 356.4 L634.5 358.2 L637.2 360.5 L639.8 361.0 L642.4 361.6 L645.1 362.2 L647.7 362.7 L650.4 363.3 L653.0 363.9 L655.6 364.4 L658.3 365.0 L660.9 365.5 L663.6 366.1 L666.2 366.7 L668.8 367.2 L671.5 367.8 L674.1 368.4 L676.8 368.9 L679.4 369.5" stroke="#58a8a8" stroke-width="1" fill="none" shape-rendering="crispEdges" stroke-dasharray="4 2"/>
<path d="M443.7 317.2 L446.3 317.8 L448.9 318.3 L451.6 318.9 L454.2 319.4 L456.8 320.0 L459.5 320.6 L462.1 321.1 L464.7 321.7 L467.4 322.2 L470.0 322.8 L472.6 323.4 L475.3 323.9 L477.9 324.5 L480.5 325.0 L483.2 325.6 L485.8 326.2 L488.4 326.7 L491.1 327.3 L493.7 327.8 L496.3 328.4 L499.0 328.9 L501.6 327.6 L504.2 327.1 L506.9 326.9 L509.5 327.0 L512.1 327.1 L514.7 327.3 L517.4 327.6 L520.0 327.9 L522.6 328.2 L525.3 328.6 L527.9 329.0 L530.5 329.5 L533.2 329.9 L535.8 330.4 L538.4 330.9 L541.1 331.4 L543.7 331.9 L546.3 332.5 L549.0 333.0 L551.6 333.6 L554.2 334.1 L556.9 334.7 L559.5 335.2 L562.1 335.8 L564.8 336.3 L567.4 336.9 L570.0 337.4 L572.7 338.0 L575.3 338.6 L577.9 339.1 L580.6 339.7 L583.2 340.3 L585.8 340.8 L588.5 341.4 L591.1 342.0 L593.7 342.6 L596.4 343.2 L599.0 343.9 L601.6 344.5 L604.3 345.2 L606.9 345.8 L609.5 346.6 L612.2 347.3 L614.8 348.1 L617.4 348.9 L620.1 349.8 L622.7 350.7 L625.3 351.8 L628.0 352.9 L630.6 354.3 L633.2 356.2 L635.9 358.0 L638.5 358.6 L641.1 359.1 L643.7 359.7 L646.4 360.2 L649.0 360.8 L651.6 361.4 L654.3 361.9 L656.9 362.5 L659.5 363.0 L662.2 363.6 L664.8 364.2 L667.4 364.7 L670.1 365.3 L672.7 365.8 L675.3 366.4 L678.0 367.0 L680.6 367.5" stroke="#e07474" stroke-width="1.2" fill="none" shape-rendering="crispEdges"/>
<path d="M445.5 315.6 L448.1 316.2 L450.8 316.7 L453.4 317.3 L456.0 317.9 L458.6 318.4 L461.3 319.0 L463.9 319.5 L466.5 320.1 L469.1 320.6 L471.8 321.2 L474.4 321.7 L477.0 322.3 L479.6 322.8 L482.3 323.4 L484.9 324.0 L487.5 324.5 L490.1 325.1 L492.8 325.6 L495.4 326.2 L498.0 326.7 L500.6 327.3 L503.3 327.8 L505.9 327.1 L508.5 326.4 L511.1 326.1 L513.8 326.1 L516.4 326.2 L519.0 326.4 L521.6 326.7 L524.3 326.9 L526.9 327.3 L529.5 327.7 L532.1 328.1 L534.8 328.5 L537.4 328.9 L540.0 329.4 L542.7 329.9 L545.3 330.4 L547.9 330.9 L550.5 331.4 L553.2 331.9 L555.8 332.4 L558.4 333.0 L561.0 333.5 L563.7 334.1 L566.3 334.6 L568.9 335.2 L571.5 335.7 L574.2 336.3 L576.8 336.8 L579.4 337.4 L582.0 338.0 L584.7 338.6 L587.3 339.2 L589.9 339.8 L592.5 340.4 L595.2 341.0 L597.8 341.6 L600.4 342.3 L603.0 342.9 L605.7 343.6 L608.3 344.4 L610.9 345.1 L613.5 345.9 L616.2 346.7 L618.8 347.6 L621.4 348.6 L624.1 349.6 L626.7 350.8 L629.3 352.3 L631.9 355.0 L634.6 355.6 L637.2 356.1 L639.8 356.7 L642.4 357.2 L645.1 357.8 L647.7 358.3 L650.3 358.9 L652.9 359.4 L655.6 360.0 L658.2 360.6 L660.8 361.1 L663.4 361.7 L666.1 362.2 L668.7 362.8 L671.3 363.3 L673.9 363.9 L676.6 364.4 L679.2 365.0 L681.8 365.5" stroke="#58a8a8" stroke-width="1" fill="none" shape-rendering="crispEdges" stroke-dasharray="4 2"/>
<path d="M447.3 314.1 L450.0 314.6 L452.6 315.2 L455.2 315.7 L457.8 316.3 L460.4 316.8 L463.0 317.4 L465.7 317.9 L468.3 318.5 L470.9 319.0 L473.5 319.6 L476.1 320.1 L478.8 320.7 L481.4 321.2 L484.0 321.8 L486.6 322.3 L489.2 322.9 L491.9 323.4 L494.5 324.0 L497.1 324.5 L499.7 325.1 L502.3 325.6 L504.9 326.2 L507.6 326.7 L510.2 327.3 L512.8 325.9 L515.4 325.5 L518.0 325.4 L520.7 325.4 L523.3 325.6 L525.9 325.8 L528.5 326.1 L531.1 326.4 L533.8 326.7 L536.4 327.1 L539.0 327.5 L541.6 328.0 L544.2 328.4 L546.8 328.9 L549.5 329.4 L552.1 329.9 L554.7 330.4 L557.3 330.9 L559.9 331.4 L562.6 331.9 L565.2 332.5 L567.8 333.0 L570.4 333.5 L573.0 334.1 L575.7 334.7 L578.3 335.2 L580.9 335.8 L583.5 336.4 L586.1 337.0 L588.8 337.6 L591.4 338.2 L594.0 338.8 L596.6 339.5 L599.2 340.1 L601.8 340.8 L604.5 341.5 L607.1 342.2 L609.7 343.0 L612.3 343.8 L614.9 344.6 L617.6 345.5 L620.2 346.5 L622.8 347.6 L625.4 348.9 L628.0 350.6 L630.7 352.6 L633.3 353.1 L635.9 353.7 L638.5 354.2 L641.1 354.8 L643.7 355.3 L646.4 355.9 L649.0 356.4 L651.6 357.0 L654.2 357.5 L656.8 358.1 L659.5 358.6 L662.1 359.2 L664.7 359.7 L667.3 360.3 L669.9 360.8 L672.6 361.4 L675.2 361.9 L677.8 362.5 L680.4 363.0 L683.0 363.6" stroke="#e07474" stroke-width="1.2" fill="none" shape-rendering="crispEdges"/>
<path d="M449.2 312.5 L451.8 313.0 L454.4 313.6 L457.0 314.1 L459.6 314.7 L462.2 315.2 L464.8 315.8 L467.5 316.3 L470.1 316.9 L472.7 317.4 L475.3 317.9 L477.9 318.5 L480.5 319.0 L483.1 319.6 L485.7 320.1 L488.3 320.7 L491.0 321.2 L493.6 321.8 L496.2 322.3 L498.8 322.9 L501.4 323.4 L504.0 323.9 L506.6 324.5 L509.2 325.0 L511.9 325.6 L514.5 326.1 L517.1 326.1 L519.7 325.0 L522.3 324.8 L524.9 324.8 L527.5 324.9 L530.1 325.0 L532.7 325.3 L535.4 325.6 L538.0 325.9 L540.6 326.3 L543.2 326.7 L545.8 327.1 L548.4 327.5 L551.0 328.0 L553.6 328.4 L556.3 328.9 L558.9 329.4 L561.5 329.9 L564.1 330.4 L566.7 331.0 L569.3 331.5 L571.9 332.0 L574.5 332.6 L577.2 333.2 L579.8 333.7 L582.4 334.3 L585.0 334.9 L587.6 335.5 L590.2 336.1 L592.8 336.7 L595.4 337.4 L598.0 338.0 L600.7 338.7 L603.3 339.4 L605.9 340.2 L608.5 341.0 L611.1 341.8 L613.7 342.7 L616.3 343.6 L618.9 344.6 L621.6 345.8 L624.2 347.3 L626.8 349.6 L629.4 350.1 L632.0 350.7 L634.6 351.2 L637.2 351.8 L639.8 352.3 L642.5 352.9 L645.1 353.4 L647.7 354.0 L650.3 354.5 L652.9 355.1 L655.5 355.6 L658.1 356.1 L660.7 356.7 L663.3 357.2 L666.0 357.8 L668.6 358.3 L671.2 358.9 L673.8 359.4 L676.4 360.0 L679.0 360.5 L681.6 361.1 L684.2 361.6" stroke="#58a8a8" stroke-width="1" fill="none" shape-rendering="crispEdges" stroke-dasharray="4 2"/>
<path d="M451.0 310.9 L453.6 311.5 L456.2 312.0 L458.8 312.5 L461.4 313.1 L464.0 313.6 L466.6 314.2 L469.2 314.7 L471.8 315.2 L474.4 315.8 L477.1 316.3 L479.7 316.9 L482.3 317.4 L484.9 317.9 L487.5 318.5 L490.1 319.0 L492.7 319.6 L495.3 320.1 L497.9 320.7 L500.5 321.2 L503.1 321.7 L505.7 322.3 L508.3 322.8 L510.9 323.4 L513.5 323.9 L516.1 324.4 L518.7 325.0 L521.3 325.5 L523.9 325.3 L526.5 324.5 L529.2 324.3 L531.8 324.3 L534.4 324.4 L537.0 324.6 L539.6 324.9 L542.2 325.2 L544.8 325.5 L547.4 325.9 L550.0 326.3 L552.6 326.7 L555.2 327.1 L557.8 327.6 L560.4 328.1 L563.0 328.6 L565.6 329.1 L568.2 329.6 L570.8 330.1 L573.4 330.6 L576.0 331.2 L578.6 331.8 L581.3 332.3 L583.9 332.9 L586.5 333.5 L589.1 334.1 L591.7 334.8 L594.3 335.4 L596.9 336.1 L599.5 336.8 L602.1 337.5 L604.7 338.3 L607.3 339.1 L609.9 339.9 L612.5 340.8 L615.1 341.8 L617.7 343.0 L620.3 344.4 L622.9 346.6 L625.5 347.2 L628.1 347.7 L630.7 348.3 L633.4 348.8 L636.0 349.3 L638.6 349.9 L641.2 350.4 L643.8 351.0 L646.4 351.5 L649.0 352.1 L651.6 352.6 L654.2 353.1 L656.8 353.7 L659.4 354.2 L662.0 354.8 L664.6 355.3 L667.2 355.8 L669.8 356.4 L672.4 356.9 L675.0 357.5 L677.6 358.0 L680.2 358.6 L682.8 359.1 L685.5 359.6" stroke="#e07474" stroke-width="1.2" fill="none" shape-rendering="crispEdges"/>
<path d="M452.8 309.3 L455.4 309.9 L458.0 310.4 L460.6 310.9 L463.2 311.5 L465.8 312.0 L468.4 312.6 L471.0 313.1 L473.6 313.6 L476.2 314.2 L478.8 314.7 L481.4 315.2 L484.0 315.8 L486.6 316.3 L489.2 316.9 L491.8 317.4 L494.4 317.9 L497.0 318.5 L499.6 319.0 L502.2 319.5 L504.8 320.1 L507.4 320.6 L510.0 321.1 L512.6 321.7 L515.2 322.2 L517.8 322.8 L520.4 323.3 L523.0 323.8 L525.6 324.4 L528.2 324.9 L530.8 325.4 L533.4 324.2 L536.0 324.0 L538.6 324.0 L541.2 324.1 L543.8 324.3 L546.4 324.6 L549.0 324.9 L551.6 325.2 L554.2 325.6 L556.8 326.0 L559.4 326.5 L562.0 326.9 L564.6 327.4 L567.2 327.9 L569.8 328.4 L572.3 328.9 L574.9 329.4 L577.5 330.0 L580.1 330.5 L582.7 331.1 L585.3 331.7 L587.9 332.3 L590.5 332.9 L593.1 333.6 L595.7 334.3 L598.3 335.0 L600.9 335.7 L603.5 336.5 L606.1 337.3 L608.7 338.2 L611.3 339.2 L613.9 340.4 L616.5 341.9 L619.1 343.7 L621.7 344.2 L624.3 344.8 L626.9 345.3 L629.5 345.9 L632.1 346.4 L634.7 346.9 L637.3 347.5 L639.9 348.0 L642.5 348.5 L645.1 349.1 L647.7 349.6 L650.3 350.1 L652.9 350.7 L655.5 351.2 L658.1 351.8 L660.7 352.3 L663.3 352.8 L665.9 353.4 L668.5 353.9 L671.1 354.4 L673.7 355.0 L676.3 355.5 L678.9 356.1 L681.5 356.6 L684.1 357.1 L686.7 357.7" stroke="#58a8a8" stroke-width="1" fill="none" shape-rendering="crispEdges" stroke-dasharray="4 2"/>
<path d="M456.5 306.2 L459.1 306.7 L461.7 307.2 L464.3 307.8 L466.8 308.3 L469.4 308.8 L472.0 309.4 L474.6 309.9 L477.2 310.4 L479.8 310.9 L482.3 311.5 L484.9 312.0 L487.5 312.5 L490.1 313.0 L492.7 313.6 L495.3 314.1 L497.8 314.6 L500.4 315.2 L503.0 315.7 L505.6 316.2 L508.2 316.7 L510.8 317.3 L513.4 317.8 L515.9 318.3 L518.5 318.9 L521.1 319.4 L523.7 319.9 L526.3 320.4 L528.9 321.0 L531.4 321.5 L534.0 322.0 L536.6 322.6 L539.2 323.1 L541.8 323.6 L544.4 324.1 L547.0 324.7 L549.5 325.2 L552.1 324.7 L554.7 324.5 L557.3 324.6 L559.9 324.8 L562.5 325.1 L565.0 325.4 L567.6 325.8 L570.2 326.2 L572.8 326.7 L575.4 327.1 L578.0 327.7 L580.5 328.2 L583.1 328.8 L585.7 329.4 L588.3 330.1 L590.9 330.8 L593.5 331.5 L596.1 332.3 L598.6 333.2 L601.2 334.3 L603.8 336.0 L606.4 336.8 L609.0 337.4 L611.6 337.9 L614.1 338.4 L616.7 338.9 L619.3 339.5 L621.9 340.0 L624.5 340.5 L627.1 341.0 L629.7 341.6 L632.2 342.1 L634.8 342.6 L637.4 343.2 L640.0 343.7 L642.6 344.2 L645.2 344.7 L647.7 345.3 L650.3 345.8 L652.9 346.3 L655.5 346.9 L658.1 347.4 L660.7 347.9 L663.2 348.4 L665.8 349.0 L668.4 349.5 L671.0 350.0 L673.6 350.6 L676.2 351.1 L678.8 351.6 L681.3 352.1 L683.9 352.7 L686.5 353.2 L689.1 353.7" stroke="#58a8a8" stroke-width="1" fill="none" shape-rendering="crispEdges" stroke-dasharray="4 2"/>
<path d="M460.2 303.0 L462.7 303.5 L465.3 304.1 L467.9 304.6 L470.4 305.1 L473.0 305.6 L475.6 306.1 L478.2 306.7 L480.7 307.2 L483.3 307.7 L485.9 308.2 L488.4 308.7 L491.0 309.3 L493.6 309.8 L496.2 310.3 L498.7 310.8 L501.3 311.3 L503.9 311.9 L506.4 312.4 L509.0 312.9 L511.6 313.4 L514.1 313.9 L516.7 314.5 L519.3 315.0 L521.9 315.5 L524.4 316.0 L527.0 316.5 L529.6 317.1 L532.1 317.6 L534.7 318.1 L537.3 318.6 L539.9 319.1 L542.4 319.7 L545.0 320.2 L547.6 320.7 L550.1 321.2 L552.7 321.7 L555.3 322.3 L557.8 322.8 L560.4 323.3 L563.0 323.8 L565.6 324.3 L568.1 324.9 L570.7 325.4 L573.3 325.9 L575.8 326.4 L578.4 326.9 L581.0 327.4 L583.6 328.0 L586.1 328.5 L588.7 329.0 L591.3 329.5 L593.8 330.0 L596.4 330.6 L599.0 331.1 L601.5 331.6 L604.1 332.1 L606.7 332.6 L609.3 333.2 L611.8 333.7 L614.4 334.2 L617.0 334.7 L619.5 335.2 L622.1 335.8 L624.7 336.3 L627.3 336.8 L629.8 337.3 L632.4 337.8 L635.0 338.4 L637.5 338.9 L640.1 339.4 L642.7 339.9 L645.2 340.4 L647.8 341.0 L650.4 341.5 L653.0 342.0 L655.5 342.5 L658.1 343.0 L660.7 343.6 L663.2 344.1 L665.8 344.6 L668.4 345.1 L671.0 345.6 L673.5 346.2 L676.1 346.7 L678.7 347.2 L681.2 347.7 L683.8 348.2 L686.4 348.7 L688.9 349.3 L691.5 349.8" stroke="#58a8a8" stroke-width="1" fill="none" shape-rendering="crispEdges" stroke-dasharray="none"/>
<path d="M463.8 299.9 L466.4 300.4 L468.9 300.9 L471.5 301.4 L474.1 301.9 L476.6 302.4 L479.2 302.9 L481.7 303.5 L484.3 304.0 L486.8 304.5 L489.4 305.0 L492.0 305.5 L494.5 306.0 L497.1 306.5 L499.6 307.0 L502.2 307.5 L504.7 308.1 L507.3 308.6 L509.9 309.1 L512.4 309.6 L515.0 310.1 L517.5 310.6 L520.1 311.1 L522.6 311.6 L525.2 312.1 L527.8 312.6 L530.3 313.2 L532.9 313.7 L535.4 314.2 L538.0 314.7 L540.5 315.2 L543.1 315.7 L545.6 316.2 L548.2 316.7 L550.8 317.2 L553.3 317.8 L555.9 318.3 L558.4 318.8 L561.0 319.3 L563.5 319.8 L566.1 320.3 L568.7 320.8 L571.2 321.3 L573.8 321.8 L576.3 322.4 L578.9 322.9 L581.4 323.4 L584.0 323.9 L586.6 324.4 L589.1 324.9 L591.7 325.4 L594.2 325.9 L596.8 326.4 L599.3 326.9 L601.9 327.5 L604.5 328.0 L607.0 328.5 L609.6 329.0 L612.1 329.5 L614.7 330.0 L617.2 330.5 L619.8 331.0 L622.4 331.5 L624.9 332.1 L627.5 332.6 L630.0 333.1 L632.6 333.6 L635.1 334.1 L637.7 334.6 L640.2 335.1 L642.8 335.6 L645.4 336.1 L647.9 336.7 L650.5 337.2 L653.0 337.7 L655.6 338.2 L658.1 338.7 L660.7 339.2 L663.3 339.7 L665.8 340.2 L668.4 340.7 L670.9 341.3 L673.5 341.8 L676.0 342.3 L678.6 342.8 L681.2 343.3 L683.7 343.8 L686.3 344.3 L688.8 344.8 L691.4 345.3 L693.9 345.8" stroke="#58a8a8" stroke-width="1" fill="none" shape-rendering="crispEdges" stroke-dasharray="none"/>
<path d="M467.5 296.7 L470.0 297.2 L472.6 297.7 L475.1 298.2 L477.7 298.7 L480.2 299.2 L482.8 299.7 L485.3 300.2 L487.8 300.7 L490.4 301.2 L492.9 301.7 L495.5 302.2 L498.0 302.8 L500.6 303.3 L503.1 303.8 L505.6 304.3 L508.2 304.8 L510.7 305.3 L513.3 305.8 L515.8 306.3 L518.4 306.8 L520.9 307.3 L523.4 307.8 L526.0 308.3 L528.5 308.8 L531.1 309.3 L533.6 309.8 L536.2 310.3 L538.7 310.8 L541.2 311.3 L543.8 311.8 L546.3 312.3 L548.9 312.8 L551.4 313.3 L554.0 313.8 L556.5 314.3 L559.0 314.8 L561.6 315.3 L564.1 315.8 L566.7 316.3 L569.2 316.8 L571.8 317.3 L574.3 317.8 L576.8 318.3 L579.4 318.8 L581.9 319.3 L584.5 319.8 L587.0 320.3 L589.6 320.8 L592.1 321.3 L594.6 321.8 L597.2 322.3 L599.7 322.8 L602.3 323.3 L604.8 323.8 L607.4 324.3 L609.9 324.8 L612.4 325.3 L615.0 325.8 L617.5 326.3 L620.1 326.8 L622.6 327.4 L625.2 327.9 L627.7 328.4 L630.2 328.9 L632.8 329.4 L635.3 329.9 L637.9 330.4 L640.4 330.9 L643.0 331.4 L645.5 331.9 L648.0 332.4 L650.6 332.9 L653.1 333.4 L655.7 333.9 L658.2 334.4 L660.8 334.9 L663.3 335.4 L665.8 335.9 L668.4 336.4 L670.9 336.9 L673.5 337.4 L676.0 337.9 L678.6 338.4 L681.1 338.9 L683.6 339.4 L686.2 339.9 L688.7 340.4 L691.3 340.9 L693.8 341.4 L696.4 341.9" stroke="#58a8a8" stroke-width="1" fill="none" shape-rendering="crispEdges" stroke-dasharray="none"/>
<path d="M471.2 293.6 L473.7 294.1 L476.2 294.6 L478.8 295.1 L481.3 295.5 L483.8 296.0 L486.3 296.5 L488.9 297.0 L491.4 297.5 L493.9 298.0 L496.5 298.5 L499.0 299.0 L501.5 299.5 L504.0 300.0 L506.6 300.5 L509.1 301.0 L511.6 301.5 L514.2 302.0 L516.7 302.5 L519.2 302.9 L521.7 303.4 L524.3 303.9 L526.8 304.4 L529.3 304.9 L531.9 305.4 L534.4 305.9 L536.9 306.4 L539.5 306.9 L542.0 307.4 L544.5 307.9 L547.0 308.4 L549.6 308.9 L552.1 309.4 L554.6 309.9 L557.2 310.3 L559.7 310.8 L562.2 311.3 L564.7 311.8 L567.3 312.3 L569.8 312.8 L572.3 313.3 L574.9 313.8 L577.4 314.3 L579.9 314.8 L582.4 315.3 L585.0 315.8 L587.5 316.3 L590.0 316.8 L592.6 317.3 L595.1 317.7 L597.6 318.2 L600.2 318.7 L602.7 319.2 L605.2 319.7 L607.7 320.2 L610.3 320.7 L612.8 321.2 L615.3 321.7 L617.9 322.2 L620.4 322.7 L622.9 323.2 L625.4 323.7 L628.0 324.2 L630.5 324.7 L633.0 325.1 L635.6 325.6 L638.1 326.1 L640.6 326.6 L643.1 327.1 L645.7 327.6 L648.2 328.1 L650.7 328.6 L653.3 329.1 L655.8 329.6 L658.3 330.1 L660.9 330.6 L663.4 331.1 L665.9 331.6 L668.4 332.1 L671.0 332.5 L673.5 333.0 L676.0 333.5 L678.6 334.0 L681.1 334.5 L683.6 335.0 L686.1 335.5 L688.7 336.0 L691.2 336.5 L693.7 337.0 L696.3 337.5 L698.8 338.0" stroke="#58a8a8" stroke-width="1" fill="none" shape-rendering="crispEdges" stroke-dasharray="none"/>
<path d="M354.1 396.6 L356.2 394.8 L358.2 393.1 L360.2 391.3 L362.2 389.6 L364.2 387.9 L366.2 386.1 L368.2 384.4 L370.2 382.7 L372.2 380.9 L374.3 379.2 L376.3 377.5 L378.3 375.7 L380.3 374.0 L382.3 372.2 L384.3 370.5 L386.3 368.8 L388.3 367.0 L390.3 365.3 L392.4 363.6 L394.4 361.8 L396.4 360.1 L398.4 358.4 L400.4 356.6 L402.4 354.9 L404.4 353.1 L406.4 351.4 L408.4 349.7 L410.5 347.9 L412.5 346.2 L414.5 344.5 L416.5 342.7 L418.5 341.0 L420.5 339.2 L422.5 337.5 L424.5 335.8 L426.5 334.0 L428.6 332.3 L430.6 330.6 L432.6 328.8 L434.6 327.1 L436.6 325.4 L438.6 323.6 L440.6 321.9 L442.6 320.1 L444.6 318.4 L446.7 316.7 L448.7 314.9 L450.7 313.2 L452.7 311.5 L454.7 309.7 L456.7 308.0 L458.7 306.2 L460.7 304.5 L462.7 302.8 L464.8 301.0 L466.8 299.3 L468.8 297.6 L470.8 295.8 L472.8 294.1 L474.8 292.4" stroke="#e8f0f0" stroke-width="1.2" fill="none" stroke-dasharray="2 3" shape-rendering="crispEdges"/>
<path d="M358.4 397.7 L360.4 395.9 L362.4 394.2 L364.4 392.4 L366.4 390.7 L368.4 389.0 L370.4 387.2 L372.4 385.5 L374.4 383.7 L376.4 382.0 L378.4 380.2 L380.4 378.5 L382.4 376.8 L384.4 375.0 L386.4 373.3 L388.4 371.5 L390.4 369.8 L392.4 368.0 L394.4 366.3 L396.4 364.5 L398.4 362.8 L400.4 361.1 L402.4 359.3 L404.4 357.6 L406.4 355.8 L408.4 354.1 L410.4 352.3 L412.4 350.6 L414.4 348.9 L416.4 347.1 L418.4 345.4 L420.4 343.6 L422.4 341.9 L424.4 340.1 L426.4 338.4 L428.4 336.6 L430.4 334.9 L432.4 333.2 L434.4 331.4 L436.4 329.7 L438.4 327.9 L440.4 326.2 L442.4 324.4 L444.4 322.7 L446.4 321.0 L448.4 319.2 L450.4 317.5 L452.4 315.7 L454.4 314.0 L456.4 312.2 L458.4 310.5 L460.4 308.7 L462.4 307.0 L464.4 305.3 L466.4 303.5 L468.4 301.8 L470.4 300.0 L472.4 298.3 L474.4 296.5 L476.4 294.8 L478.4 293.1" stroke="#70c0c0" stroke-width="1.2" fill="none" stroke-dasharray="2 3" shape-rendering="crispEdges"/>
<path d="M362.7 398.8 L364.7 397.0 L366.7 395.3 L368.7 393.5 L370.7 391.8 L372.7 390.0 L374.7 388.3 L376.6 386.5 L378.6 384.8 L380.6 383.0 L382.6 381.3 L384.6 379.5 L386.6 377.8 L388.6 376.0 L390.6 374.3 L392.6 372.5 L394.5 370.8 L396.5 369.0 L398.5 367.3 L400.5 365.5 L402.5 363.8 L404.5 362.0 L406.5 360.3 L408.5 358.5 L410.5 356.8 L412.5 355.0 L414.4 353.3 L416.4 351.5 L418.4 349.8 L420.4 348.0 L422.4 346.3 L424.4 344.5 L426.4 342.8 L428.4 341.0 L430.4 339.3 L432.3 337.5 L434.3 335.8 L436.3 334.0 L438.3 332.3 L440.3 330.5 L442.3 328.8 L444.3 327.0 L446.3 325.3 L448.3 323.5 L450.3 321.8 L452.2 320.0 L454.2 318.3 L456.2 316.5 L458.2 314.8 L460.2 313.0 L462.2 311.3 L464.2 309.5 L466.2 307.8 L468.2 306.0 L470.1 304.3 L472.1 302.5 L474.1 300.8 L476.1 299.0 L478.1 297.3 L480.1 295.5 L482.1 293.8" stroke="#e8f0f0" stroke-width="1.2" fill="none" stroke-dasharray="2 3" shape-rendering="crispEdges"/>
<path d="M367.0 399.9 L369.0 398.2 L371.0 396.4 L372.9 394.6 L374.9 392.9 L376.9 391.1 L378.9 389.4 L380.9 387.6 L382.8 385.9 L384.8 384.1 L386.8 382.3 L388.8 380.6 L390.7 378.8 L392.7 377.1 L394.7 375.3 L396.7 373.6 L398.7 371.8 L400.6 370.0 L402.6 368.3 L404.6 366.5 L406.6 364.8 L408.6 363.0 L410.5 361.3 L412.5 359.5 L414.5 357.7 L416.5 356.0 L418.4 354.2 L420.4 352.5 L422.4 350.7 L424.4 348.9 L426.4 347.2 L428.3 345.4 L430.3 343.7 L432.3 341.9 L434.3 340.2 L436.3 338.4 L438.2 336.6 L440.2 334.9 L442.2 333.1 L444.2 331.4 L446.1 329.6 L448.1 327.9 L450.1 326.1 L452.1 324.3 L454.1 322.6 L456.0 320.8 L458.0 319.1 L460.0 317.3 L462.0 315.6 L463.9 313.8 L465.9 312.0 L467.9 310.3 L469.9 308.5 L471.9 306.8 L473.8 305.0 L475.8 303.3 L477.8 301.5 L479.8 299.7 L481.8 298.0 L483.7 296.2 L485.7 294.5" stroke="#70c0c0" stroke-width="1.2" fill="none" stroke-dasharray="2 3" shape-rendering="crispEdges"/>
<path d="M371.3 401.0 L373.3 399.3 L375.2 397.5 L377.2 395.7 L379.2 394.0 L381.1 392.2 L383.1 390.5 L385.1 388.7 L387.0 386.9 L389.0 385.2 L391.0 383.4 L392.9 381.6 L394.9 379.9 L396.9 378.1 L398.8 376.3 L400.8 374.6 L402.8 372.8 L404.7 371.0 L406.7 369.3 L408.7 367.5 L410.6 365.7 L412.6 364.0 L414.6 362.2 L416.5 360.5 L418.5 358.7 L420.5 356.9 L422.5 355.2 L424.4 353.4 L426.4 351.6 L428.4 349.9 L430.3 348.1 L432.3 346.3 L434.3 344.6 L436.2 342.8 L438.2 341.0 L440.2 339.3 L442.1 337.5 L444.1 335.8 L446.1 334.0 L448.0 332.2 L450.0 330.5 L452.0 328.7 L453.9 326.9 L455.9 325.2 L457.9 323.4 L459.8 321.6 L461.8 319.9 L463.8 318.1 L465.7 316.3 L467.7 314.6 L469.7 312.8 L471.6 311.0 L473.6 309.3 L475.6 307.5 L477.5 305.8 L479.5 304.0 L481.5 302.2 L483.4 300.5 L485.4 298.7 L487.4 296.9 L489.3 295.2" stroke="#e8f0f0" stroke-width="1.2" fill="none" stroke-dasharray="2 3" shape-rendering="crispEdges"/>
<path d="M375.6 402.2 L377.5 400.4 L379.5 398.6 L381.5 396.8 L383.4 395.1 L385.4 393.3 L387.3 391.5 L389.3 389.8 L391.2 388.0 L393.2 386.2 L395.1 384.4 L397.1 382.7 L399.1 380.9 L401.0 379.1 L403.0 377.4 L404.9 375.6 L406.9 373.8 L408.8 372.0 L410.8 370.3 L412.8 368.5 L414.7 366.7 L416.7 365.0 L418.6 363.2 L420.6 361.4 L422.5 359.6 L424.5 357.9 L426.5 356.1 L428.4 354.3 L430.4 352.6 L432.3 350.8 L434.3 349.0 L436.2 347.2 L438.2 345.5 L440.1 343.7 L442.1 341.9 L444.1 340.2 L446.0 338.4 L448.0 336.6 L449.9 334.8 L451.9 333.1 L453.8 331.3 L455.8 329.5 L457.8 327.8 L459.7 326.0 L461.7 324.2 L463.6 322.4 L465.6 320.7 L467.5 318.9 L469.5 317.1 L471.5 315.4 L473.4 313.6 L475.4 311.8 L477.3 310.0 L479.3 308.3 L481.2 306.5 L483.2 304.7 L485.1 303.0 L487.1 301.2 L489.1 299.4 L491.0 297.6 L493.0 295.9" stroke="#70c0c0" stroke-width="1.2" fill="none" stroke-dasharray="2 3" shape-rendering="crispEdges"/>
<path d="M634.5 398.4 L635.8 396.3 L636.9 394.2 L637.8 392.1 L638.7 389.9 L639.3 387.8 L639.9 385.6 L640.2 383.4 L640.4 381.2 L640.5 378.9 L640.4 376.7 L640.2 374.5 L639.8 372.3 L639.3 370.1 L638.6 368.0 L637.8 365.8 L636.9 363.7 L635.8 361.6 L634.5 359.6 L633.2 357.5 L631.7 355.5 L630.0 353.6 L628.3 351.7 L626.4 349.8 L624.4 348.0 L622.3 346.3 L620.0 344.6 L617.7 342.9 L615.2 341.3 L612.6 339.8 L610.0 338.3 L607.2 336.9 L604.3 335.6 L601.3 334.3 L598.3 333.1 L595.1 332.0 L591.9 331.0 L588.6 330.0 L585.2 329.1 L581.7 328.2 L578.2 327.5 L574.6 326.8 L570.9 326.2 L567.2 325.6 L563.5 325.2 L559.7 324.8 L555.8 324.5 L552.0 324.2 L548.0 324.0 L544.1 324.0 L540.2 323.9 L536.2 324.0 L532.2 324.1 L528.2 324.3 L524.2 324.6 L520.3 324.9 L516.3 325.3 L512.4 325.8 L508.4 326.4 L504.5 327.0 L500.7 327.7 L496.9 328.4 L493.1 329.2 L489.4 330.1 L485.7 331.0 L482.1 332.0 L478.6 333.1 L475.2 334.2 L471.8 335.3 L468.5 336.5 L465.4 337.8 L462.3 339.1 L459.3 340.5 L456.4 341.9 L453.7 343.4 L451.1 344.9 L448.6 346.5 L446.2 348.1 L444.0 349.7 L441.9 351.4 L439.9 353.1 L438.2 354.8 L436.5 356.6 L435.0 358.4 L433.7 360.3 L432.6 362.2 L431.6 364.0 L430.8 366.0 L430.1 367.9 L429.6 369.9 L429.4 371.8 L429.2 373.8 L429.3 375.8 L429.5 377.8 L429.9 379.8 L430.5 381.8 L431.3 383.8 L432.3 385.8 L433.4 387.8 L434.7 389.8 L436.2 391.8 L437.8 393.8 L439.6 395.7 L441.6 397.6 L443.8 399.5 L446.1 401.4 L448.5 403.2 L451.1 405.0 L453.9 406.8 L456.8 408.5 L459.8 410.2 L463.0 411.9 L466.3 413.5 L469.7 415.0 L473.2 416.5 L476.8 417.9 L480.5 419.3 L484.3 420.6 L488.2 421.8 L492.2 423.0 L496.2 424.0 L500.4 425.1 L504.5 426.0 L508.7 426.9 L513.0 427.6 L517.3 428.3 L521.6 429.0 L525.9 429.5 L530.2 429.9 L534.6 430.3 L538.9 430.5 L543.2 430.7 L547.5 430.8 L551.8 430.7 L556.0 430.6 L560.2 430.4 L564.4 430.1 L568.5 429.7 L572.5 429.3 L576.4 428.7 L580.3 428.0 L584.1 427.3 L587.8 426.4 L591.4 425.5 L595.0 424.5 L598.4 423.4 L601.7 422.2 L604.9 420.9 L607.9 419.6 L610.9 418.1 L613.7 416.6 L616.4 415.1 L619.0 413.5 L621.4 411.8 L623.7 410.0 L625.9 408.2 L627.9 406.3 L629.8 404.4 L631.5 402.5 L633.1 400.5 L634.5 398.4" stroke="#c860c0" stroke-width="1.0" fill="none" stroke-dasharray="6 3"/>
<path d="M579.5 385.6 L580.1 384.7 L580.6 383.9 L581.1 383.0 L581.5 382.1 L581.9 381.2 L582.2 380.2 L582.4 379.3 L582.5 378.4 L582.6 377.5 L582.6 376.5 L582.6 375.6 L582.4 374.7 L582.2 373.8 L582.0 372.8 L581.7 371.9 L581.3 371.0 L580.8 370.1 L580.3 369.2 L579.7 368.3 L579.1 367.5 L578.3 366.6 L577.6 365.8 L576.7 365.0 L575.9 364.2 L574.9 363.4 L573.9 362.7 L572.9 361.9 L571.7 361.2 L570.6 360.5 L569.4 359.9 L568.1 359.2 L566.8 358.6 L565.5 358.0 L564.1 357.5 L562.7 356.9 L561.2 356.5 L559.7 356.0 L558.2 355.5 L556.6 355.1 L555.0 354.8 L553.4 354.4 L551.7 354.1 L550.1 353.9 L548.4 353.6 L546.7 353.4 L544.9 353.2 L543.2 353.1 L541.4 353.0 L539.7 352.9 L537.9 352.9 L536.2 352.9 L534.4 352.9 L532.6 353.0 L530.9 353.1 L529.1 353.2 L527.4 353.4 L525.6 353.6 L523.9 353.8 L522.2 354.1 L520.5 354.4 L518.9 354.7 L517.3 355.0 L515.7 355.4 L514.1 355.8 L512.5 356.3 L511.0 356.7 L509.6 357.2 L508.1 357.8 L506.8 358.3 L505.4 358.9 L504.1 359.5 L502.9 360.1 L501.7 360.8 L500.6 361.5 L499.5 362.2 L498.5 362.9 L497.5 363.6 L496.6 364.4 L495.7 365.1 L495.0 365.9 L494.2 366.7 L493.6 367.5 L493.0 368.4 L492.5 369.2 L492.1 370.0 L491.7 370.9 L491.4 371.8 L491.2 372.6 L491.0 373.5 L490.9 374.4 L490.9 375.3 L491.0 376.2 L491.1 377.1 L491.3 378.0 L491.6 378.9 L492.0 379.7 L492.4 380.6 L492.9 381.5 L493.5 382.4 L494.1 383.2 L494.8 384.1 L495.6 384.9 L496.5 385.8 L497.4 386.6 L498.4 387.4 L499.4 388.1 L500.5 388.9 L501.7 389.7 L502.9 390.4 L504.2 391.1 L505.5 391.8 L506.9 392.4 L508.3 393.1 L509.8 393.7 L511.3 394.3 L512.8 394.8 L514.4 395.3 L516.1 395.8 L517.7 396.3 L519.4 396.7 L521.1 397.1 L522.9 397.5 L524.7 397.8 L526.4 398.1 L528.2 398.4 L530.1 398.6 L531.9 398.8 L533.7 399.0 L535.5 399.1 L537.4 399.2 L539.2 399.2 L541.0 399.2 L542.9 399.2 L544.7 399.1 L546.5 399.0 L548.2 398.9 L550.0 398.7 L551.7 398.5 L553.4 398.2 L555.1 397.9 L556.8 397.6 L558.4 397.3 L560.0 396.9 L561.5 396.4 L563.0 396.0 L564.5 395.5 L565.9 394.9 L567.3 394.4 L568.6 393.8 L569.9 393.2 L571.1 392.5 L572.3 391.8 L573.4 391.1 L574.4 390.4 L575.4 389.7 L576.4 388.9 L577.2 388.1 L578.0 387.3 L578.8 386.4 L579.5 385.6" stroke="#c860c0" stroke-width="1.0" fill="none" stroke-dasharray="6 3"/>
<path d="M560.4 325.8 L558.4 325.6 L556.4 325.4 L554.4 325.3 L552.3 325.1 L550.3 325.0 L548.2 324.9 L546.1 324.9 L544.1 324.8 L542.0 324.8 L539.9 324.8 L537.8 324.8 L535.7 324.9 L533.6 324.9 L531.5 325.0 L529.4 325.1 L527.3 325.2 L525.2 325.4 L523.1 325.5 L521.0 325.7 L518.9 325.9 L516.8 326.2 L514.7 326.4 L512.7 326.7 L510.6 327.0 L508.6 327.3 L506.5 327.6 L504.5 327.9 L502.4 328.3 L500.4 328.7 L498.4 329.1 L496.4 329.5 L494.5 329.9 L492.5 330.4 L490.6 330.9 L488.6 331.4 L486.7 331.9 L484.9 332.4 L483.0 333.0 L481.2 333.5 L479.4 334.1 L477.6 334.7 L475.8 335.3 L474.1 336.0 L472.3 336.6 L470.7 337.3 L469.0 337.9 L467.4 338.6 L465.8 339.3 L464.2 340.1 L462.7 340.8 L461.2 341.6 L459.7 342.3 L458.3 343.1 L456.9 343.9 L455.5 344.7 L454.2 345.5 L452.9 346.4 L451.7 347.2 L450.4 348.1 L449.3 348.9 L448.2 349.8 L447.1 350.7 L446.0 351.6 L445.0 352.5 L444.1 353.4 L443.2 354.4 L442.3 355.3 L441.5 356.2 L440.7 357.2 L440.0 358.2 L439.3 359.1 L438.7 360.1 L438.1 361.1 L437.6 362.1 L437.1 363.1 L436.6 364.1 L436.3 365.2 L435.9 366.2 L435.6 367.2 L435.4 368.2 L435.2 369.3 L435.1 370.3 L435.0 371.4 L435.0 372.4 L435.0 373.5 L435.1 374.5 L435.2 375.6 L435.4 376.6 L435.6 377.7 L435.9 378.8 L436.3 379.8 L436.7 380.9 L437.1 381.9 L437.6 383.0 L438.1 384.0 L438.7 385.1 L439.4 386.2 L440.1 387.2 L440.8 388.2 L441.6 389.3 L442.5 390.3 L443.4 391.3 L444.3 392.4 L445.3 393.4 L446.4 394.4 L447.4 395.4 L448.6 396.4 L449.8 397.4 L451.0 398.4 L452.3 399.3 L453.6 400.3 L454.9 401.3 L456.3 402.2 L457.8 403.1 L459.3 404.0 L460.8 404.9 L462.4 405.8 L464.0 406.7 L465.6 407.6 L467.3 408.4 L469.0 409.3 L470.8 410.1 L472.6 410.9 L474.4 411.7 L476.2 412.5 L478.1 413.2 L480.0 414.0 L482.0 414.7 L483.9 415.4 L485.9 416.1 L487.9 416.7 L490.0 417.4 L492.1 418.0 L494.1 418.6 L496.3 419.2 L498.4 419.7 L500.5 420.3 L502.7 420.8 L504.9 421.3 L507.1 421.8 L509.3 422.2 L511.5 422.6 L513.8 423.0 L516.0 423.4 L518.3 423.8 L520.5 424.1 L522.8 424.4 L525.0 424.7 L527.3 424.9 L529.6 425.2 L531.9 425.4 L534.2 425.5 L536.4 425.7 L538.7 425.8 L541.0 425.9 L543.2 426.0 L545.5 426.0 L547.8 426.0 L550.0 426.0 L552.2 426.0" stroke="#ffffff" stroke-width="1.2" fill="none" stroke-dasharray="2 2.5"/>
<path d="M625.8 375.6 L625.8 374.6 L625.8 373.7 L625.7 372.7 L625.6 371.8 L625.5 370.9 L625.4 369.9 L625.2 369.0 L624.9 368.1 L624.7 367.2 L624.4 366.2 L624.1 365.3 L623.7 364.4 L623.3 363.5 L622.9 362.6 L622.5 361.7 L622.0 360.8 L621.5 359.9 L621.0 359.0 L620.4 358.2 L619.8 357.3 L619.2 356.4 L618.6 355.6 L617.9 354.8 L617.2 353.9 L616.5 353.1 L615.7 352.3 L614.9 351.5 L614.1 350.7 L613.3 349.9 L612.4 349.1 L611.5 348.4 L610.6 347.6 L609.6 346.9 L608.6 346.1 L607.6 345.4 L606.6 344.7 L605.6 344.0 L604.5 343.3 L603.4 342.7 L602.3 342.0 L601.2 341.4 L600.0 340.8 L598.8 340.1 L597.6 339.5 L596.4 338.9 L595.1 338.4 L593.9 337.8 L592.6 337.3 L591.3 336.7 L589.9 336.2 L588.6 335.7 L587.2 335.2 L585.8 334.8 L584.4 334.3 L583.0 333.9 L581.6 333.4 L580.1 333.0 L578.6 332.6 L577.1 332.2 L575.6 331.9 L574.1 331.5 L572.6 331.2 L571.1 330.9 L569.5 330.6 L567.9 330.3 L566.4 330.0 L564.8 329.8 L563.2 329.5 L561.5 329.3 L559.9 329.1 L558.3 328.9 L556.6 328.8 L555.0 328.6 L553.3 328.5 L551.7 328.3 L550.0 328.2 L548.3 328.1 L546.6 328.1 L544.9 328.0 L543.2 328.0 L541.5 327.9 L539.8 327.9 L538.1 327.9 L536.4 328.0 L534.7 328.0 L533.0 328.1 L531.3 328.1 L529.6 328.2 L527.9 328.3 L526.1 328.4 L524.4 328.6 L522.7 328.7 L521.0 328.9 L519.3 329.0 L517.6 329.2 L515.9 329.4 L514.2 329.7 L512.6 329.9 L510.9 330.1 L509.2 330.4 L507.6 330.7 L505.9 331.0 L504.3 331.3 L502.7 331.6 L501.0 332.0 L499.4 332.3 L497.8 332.7 L496.3 333.0 L494.7 333.4 L493.1 333.8 L491.6 334.3 L490.1 334.7 L488.5 335.1 L487.0 335.6 L485.6 336.1 L484.1 336.5 L482.7 337.0 L481.2 337.5 L479.8 338.1 L478.5 338.6 L477.1 339.1 L475.7 339.7 L474.4 340.2 L473.1 340.8 L471.8 341.4 L470.6 342.0 L469.4 342.6 L468.2 343.2 L467.0 343.9 L465.8 344.5 L464.7 345.2 L463.6 345.8 L462.5 346.5 L461.5 347.2 L460.5 347.8 L459.5 348.5 L458.5 349.2 L457.6 350.0 L456.7 350.7 L455.8 351.4 L455.0 352.1 L454.2 352.9 L453.4 353.6 L452.7 354.4 L452.0 355.2 L451.3 356.0 L450.6 356.7 L450.0 357.5 L449.5 358.3 L448.9 359.1 L448.4 359.9 L447.9 360.7 L447.5 361.5 L447.1 362.4 L446.7 363.2 L446.4 364.0 L446.1 364.9 L445.9 365.7 L445.7 366.5 L445.5 367.4" stroke="#ffffff" stroke-width="1.2" fill="none" stroke-dasharray="2 3"/>
<path d="M480.9 359.3 L480.4 359.9 L479.8 360.5 L479.3 361.1 L478.9 361.7 L478.4 362.3 L478.0 362.9 L477.6 363.5 L477.3 364.1 L476.9 364.8 L476.6 365.4 L476.4 366.0 L476.1 366.7 L475.9 367.3 L475.8 367.9 L475.6 368.6 L475.5 369.2 L475.4 369.9 L475.3 370.5 L475.3 371.2 L475.3 371.8 L475.4 372.5 L475.4 373.1 L475.5 373.8 L475.6 374.5 L475.8 375.1 L476.0 375.8 L476.2 376.4 L476.5 377.1 L476.7 377.7 L477.0 378.4 L477.4 379.0 L477.8 379.7 L478.2 380.3 L478.6 381.0 L479.0 381.6 L479.5 382.2 L480.0 382.9 L480.6 383.5 L481.2 384.1 L481.8 384.7 L482.4 385.4 L483.1 386.0 L483.7 386.6 L484.5 387.2 L485.2 387.8 L486.0 388.3 L486.8 388.9 L487.6 389.5 L488.4 390.1 L489.3 390.6 L490.2 391.2 L491.1 391.7 L492.0 392.2 L493.0 392.8 L494.0 393.3 L495.0 393.8 L496.0 394.3 L497.0 394.8 L498.1 395.2 L499.2 395.7 L500.3 396.2 L501.4 396.6 L502.5 397.0 L503.7 397.5 L504.9 397.9 L506.1 398.3 L507.3 398.7 L508.5 399.0 L509.7 399.4 L511.0 399.7 L512.2 400.1 L513.5 400.4 L514.8 400.7 L516.1 401.0 L517.4 401.3 L518.7 401.6 L520.0 401.8 L521.3 402.1 L522.7 402.3 L524.0 402.5 L525.4 402.7 L526.7 402.9 L528.1 403.0 L529.4 403.2 L530.8 403.3 L532.2 403.5 L533.5 403.6 L534.9 403.7 L536.3 403.7 L537.6 403.8 L539.0 403.8 L540.4 403.9 L541.7 403.9 L543.1 403.9 L544.4 403.9 L545.8 403.8 L547.1 403.8 L548.5 403.7 L549.8 403.6 L551.1 403.5 L552.4 403.4 L553.7 403.3 L555.0 403.1 L556.3 403.0 L557.6 402.8 L558.9 402.6 L560.1 402.4 L561.4 402.2 L562.6 402.0 L563.8 401.7 L565.0 401.4 L566.2 401.2 L567.4 400.9 L568.5 400.5 L569.6 400.2 L570.8 399.9 L571.9 399.5 L573.0 399.2 L574.0 398.8 L575.1 398.4 L576.1 398.0 L577.1 397.6 L578.1 397.1 L579.1 396.7 L580.0 396.2 L580.9 395.8 L581.8 395.3 L582.7 394.8 L583.6 394.3 L584.4 393.8 L585.2 393.2 L586.0 392.7 L586.8 392.2 L587.5 391.6 L588.2 391.0 L588.9 390.5 L589.6 389.9 L590.2 389.3 L590.8 388.7 L591.4 388.1 L592.0 387.5 L592.5 386.8 L593.0 386.2 L593.5 385.6 L594.0 384.9 L594.4 384.3 L594.8 383.6 L595.2 383.0 L595.5 382.3 L595.8 381.6 L596.1 380.9 L596.4 380.3 L596.6 379.6 L596.9 378.9 L597.0 378.2 L597.2 377.5 L597.3 376.8 L597.4 376.1 L597.5 375.5 L597.5 374.8" stroke="#ffffff" stroke-width="1.2" fill="none" stroke-dasharray="2 2.5"/>
<path d="M486.9 367.0 L486.7 367.5 L486.4 367.9 L486.3 368.3 L486.1 368.7 L485.9 369.2 L485.8 369.6 L485.7 370.0 L485.6 370.5 L485.5 370.9 L485.4 371.3 L485.4 371.8 L485.3 372.2 L485.3 372.7 L485.3 373.1 L485.3 373.5 L485.3 374.0 L485.4 374.4 L485.4 374.9 L485.5 375.3 L485.6 375.7 L485.7 376.2 L485.8 376.6 L485.9 377.1 L486.1 377.5 L486.3 378.0 L486.5 378.4 L486.7 378.8 L486.9 379.3 L487.1 379.7 L487.4 380.1 L487.6 380.6 L487.9 381.0 L488.2 381.4 L488.5 381.9 L488.9 382.3 L489.2 382.7 L489.6 383.2 L489.9 383.6 L490.3 384.0 L490.7 384.4 L491.2 384.8 L491.6 385.2 L492.1 385.6 L492.5 386.0 L493.0 386.4 L493.5 386.8 L494.0 387.2 L494.5 387.6 L495.1 388.0 L495.6 388.4 L496.2 388.8 L496.7 389.1 L497.3 389.5 L497.9 389.9 L498.5 390.2 L499.2 390.6 L499.8 390.9 L500.5 391.3 L501.1 391.6 L501.8 392.0 L502.5 392.3 L503.2 392.6 L503.9 393.0 L504.6 393.3 L505.3 393.6 L506.1 393.9 L506.8 394.2 L507.6 394.5 L508.3 394.8 L509.1 395.0 L509.9 395.3 L510.7 395.6 L511.5 395.8 L512.3 396.1 L513.1 396.3 L513.9 396.6 L514.7 396.8 L515.6 397.0 L516.4 397.3 L517.3 397.5 L518.1 397.7 L519.0 397.9 L519.9 398.1 L520.7 398.3 L521.6 398.4 L522.5 398.6 L523.4 398.8 L524.3 398.9 L525.2 399.1 L526.1 399.2 L527.0 399.3 L527.9 399.5 L528.8 399.6 L529.7 399.7 L530.6 399.8 L531.5 399.9 L532.4 400.0 L533.3 400.0 L534.3 400.1 L535.2 400.2 L536.1 400.2 L537.0 400.2 L537.9 400.3 L538.8 400.3 L539.7 400.3 L540.7 400.3 L541.6 400.3 L542.5 400.3 L543.4 400.3 L544.3 400.3 L545.2 400.2 L546.1 400.2 L547.0 400.1 L547.9 400.1 L548.8 400.0 L549.6 399.9 L550.5 399.9 L551.4 399.8 L552.3 399.7 L553.1 399.6 L554.0 399.4 L554.8 399.3 L555.7 399.2 L556.5 399.0 L557.4 398.9 L558.2 398.7 L559.0 398.6 L559.8 398.4 L560.6 398.2 L561.4 398.0 L562.2 397.8 L563.0 397.6 L563.8 397.4 L564.5 397.2 L565.3 397.0 L566.0 396.7 L566.8 396.5 L567.5 396.2 L568.2 396.0 L568.9 395.7 L569.6 395.4 L570.3 395.2 L571.0 394.9 L571.6 394.6 L572.3 394.3 L572.9 394.0 L573.6 393.7 L574.2 393.3 L574.8 393.0 L575.4 392.7 L576.0 392.4 L576.5 392.0 L577.1 391.7 L577.6 391.3 L578.2 391.0 L578.7 390.6 L579.2 390.2 L579.7 389.8 L580.2 389.5 L580.6 389.1" stroke="#ffffff" stroke-width="1.2" fill="none" stroke-dasharray="2 3"/>
<path d="M352.0 396.0 L473.0 292.0 L700.0 336.0" stroke="#60b8b8" stroke-width="1" fill="none"/>
<path d="M359 398 L476 429" stroke="#30e030" stroke-width="1.2"/>
<path d="M474 438 L492 427 M480 425 L484 440" stroke="#30e030" stroke-width="1"/>
<path d="M346.3 292 L358 397" stroke="#3030ff" stroke-width="1.3"/>
<path d="M336 246 L350 249 L340 269 L350 271" stroke="#3030ff" stroke-width="1.2" fill="none"/>
<path d="M537 432 L661 453" stroke="#e0e000" stroke-width="2.6"/>
<defs><linearGradient id="cg" x1="0" y1="0" x2="1" y2="0"><stop offset="0" stop-color="#a0a0a0"/><stop offset="0.35" stop-color="#ffffff"/><stop offset="1" stop-color="#b8b8b8"/></linearGradient></defs>
<path d="M647.5 420 L661 453 L681 420 Z" fill="url(#cg)"/>
<ellipse cx="664.2" cy="420" rx="16.7" ry="8.3" fill="#a8a8a8"/>
<path d="M677.5 471 Q677 468 680 469.5 L691 480 Q693 483 689 483 Q685 483 682 486 L680 488 Q678 490 677.5 487 Z" fill="#000" stroke="#fff" stroke-width="1.5" stroke-linejoin="round"/>
<text x="366" y="149.8" font-family='"Liberation Mono", monospace' font-size="15" fill="#dedede" stroke="#dedede" stroke-width="0.35" xml:space="preserve" style="white-space:pre">    X:   2.6497  DTG X:   0.0000</text>
<text x="366" y="167.8" font-family='"Liberation Mono", monospace' font-size="15" fill="#dedede" stroke="#dedede" stroke-width="0.35" xml:space="preserve" style="white-space:pre">    Y:   0.1666  DTG Y:   0.0000</text>
<text x="366" y="185.8" font-family='"Liberation Mono", monospace' font-size="15" fill="#dedede" stroke="#dedede" stroke-width="0.35" xml:space="preserve" style="white-space:pre">    Z:   0.0998  DTG Z:   0.0000</text>
<text x="366" y="203.8" font-family='"Liberation Mono", monospace' font-size="15" fill="#dedede" stroke="#dedede" stroke-width="0.35" xml:space="preserve" style="white-space:pre">G54 X:   0.0000  G92 X:   0.0000</text>
<text x="366" y="221.8" font-family='"Liberation Mono", monospace' font-size="15" fill="#dedede" stroke="#dedede" stroke-width="0.35" xml:space="preserve" style="white-space:pre">G54 Y:   0.0000  G92 Y:   0.0000</text>
<text x="366" y="239.8" font-family='"Liberation Mono", monospace' font-size="15" fill="#dedede" stroke="#dedede" stroke-width="0.35" xml:space="preserve" style="white-space:pre">G54 Z:   0.0000  G92 Z:   0.0000</text>
<text x="366" y="257.8" font-family='"Liberation Mono", monospace' font-size="15" fill="#dedede" stroke="#dedede" stroke-width="0.35" xml:space="preserve" style="white-space:pre">G54 R:   0.0000</text>
<text x="366" y="275.8" font-family='"Liberation Mono", monospace' font-size="15" fill="#dedede" stroke="#dedede" stroke-width="0.35" xml:space="preserve" style="white-space:pre">TLO X:   0.0000</text>
<text x="366" y="293.8" font-family='"Liberation Mono", monospace' font-size="15" fill="#000" stroke="#000" stroke-width="2.5" stroke-linejoin="round" xml:space="preserve" style="white-space:pre">TLO Y:   0.0000</text>
<text x="366" y="293.8" font-family='"Liberation Mono", monospace' font-size="15" fill="#dedede" stroke="#dedede" stroke-width="0.35" xml:space="preserve" style="white-space:pre">TLO Y:   0.0000</text>
<text x="366" y="311.8" font-family='"Liberation Mono", monospace' font-size="15" fill="#000" stroke="#000" stroke-width="2.5" stroke-linejoin="round" xml:space="preserve" style="white-space:pre">TLO Z:   0.0000</text>
<text x="366" y="311.8" font-family='"Liberation Mono", monospace' font-size="15" fill="#dedede" stroke="#dedede" stroke-width="0.35" xml:space="preserve" style="white-space:pre">TLO Z:</text>
<text x="447" y="311.8" font-family='"Liberation Mono", monospace' font-size="15" fill="#ffffff" stroke="#ffffff" stroke-width="0.5" xml:space="preserve" style="white-space:pre">0.0000</text>
<text x="366" y="329.8" font-family='"Liberation Mono", monospace' font-size="15" fill="#000" stroke="#000" stroke-width="2.5" stroke-linejoin="round" xml:space="preserve" style="white-space:pre">  Vel:   0.0000</text>
<text x="366" y="329.8" font-family='"Liberation Mono", monospace' font-size="15" fill="#dedede" stroke="#dedede" stroke-width="0.35" xml:space="preserve" style="white-space:pre">  Vel:</text>
<text x="447" y="329.8" font-family='"Liberation Mono", monospace' font-size="15" fill="#ffffff" stroke="#ffffff" stroke-width="0.5" xml:space="preserve" style="white-space:pre">0.0000</text>
<circle cx="340" cy="144.3" r="4.5" fill="#000" stroke="#fff" stroke-width="1"/><path d="M340 144.3 L344.5 144.3 A4.5 4.5 0 0 0 340 139.8 Z M340 144.3 L335.5 144.3 A4.5 4.5 0 0 0 340 148.8 Z" fill="#fff"/><path d="M340 137.3 L340 151.3 M333 144.3 L347 144.3" stroke="#fff" stroke-width="1"/>
<circle cx="340" cy="162.3" r="4.5" fill="#000" stroke="#fff" stroke-width="1"/><path d="M340 162.3 L344.5 162.3 A4.5 4.5 0 0 0 340 157.8 Z M340 162.3 L335.5 162.3 A4.5 4.5 0 0 0 340 166.8 Z" fill="#fff"/><path d="M340 155.3 L340 169.3 M333 162.3 L347 162.3" stroke="#fff" stroke-width="1"/>
<circle cx="340" cy="180.3" r="4.5" fill="#000" stroke="#fff" stroke-width="1"/><path d="M340 180.3 L344.5 180.3 A4.5 4.5 0 0 0 340 175.8 Z M340 180.3 L335.5 180.3 A4.5 4.5 0 0 0 340 184.8 Z" fill="#fff"/><path d="M340 173.3 L340 187.3 M333 180.3 L347 180.3" stroke="#fff" stroke-width="1"/></svg>
</body></html>
